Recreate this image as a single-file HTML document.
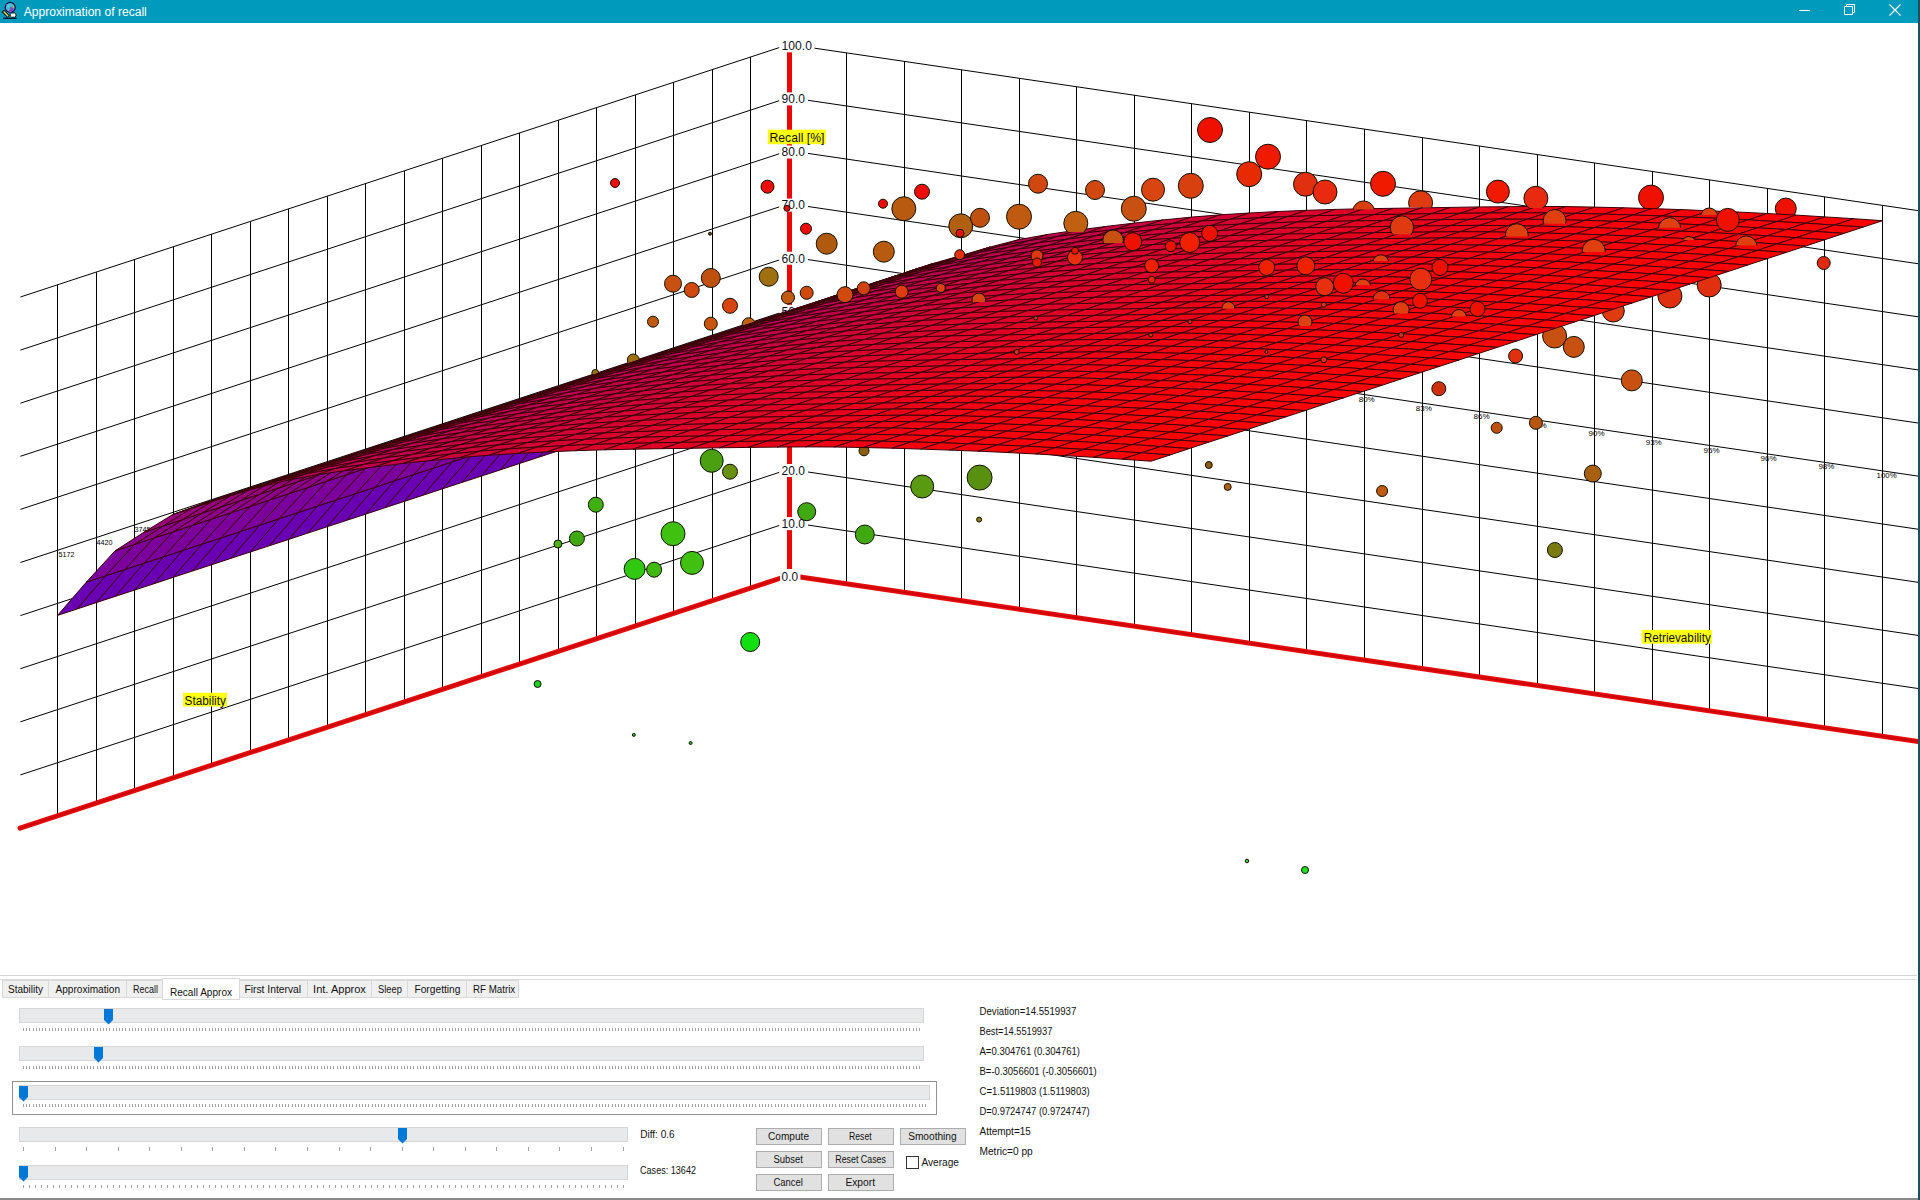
<!DOCTYPE html><html><head><meta charset="utf-8"><title>Approximation of recall</title><style>html,body{margin:0;padding:0;width:1920px;height:1200px;overflow:hidden;background:#fff;font-family:"Liberation Sans",sans-serif}</style></head><body><svg width="1920" height="1200" viewBox="0 0 1920 1200" font-family="Liberation Sans, sans-serif" style="position:absolute;left:0;top:0"><rect width="1920" height="1200" fill="#fff"/><g stroke="#000" stroke-width="1"><line x1="20.4" y1="774.9" x2="779.2" y2="525.5"/><line x1="20.4" y1="721.8" x2="779.2" y2="472.4"/><line x1="20.4" y1="668.7" x2="779.2" y2="419.3"/><line x1="20.4" y1="615.6" x2="779.2" y2="366.2"/><line x1="20.4" y1="562.5" x2="779.2" y2="313.1"/><line x1="20.4" y1="509.4" x2="779.2" y2="260.0"/><line x1="20.4" y1="456.3" x2="779.2" y2="206.9"/><line x1="20.4" y1="403.2" x2="779.2" y2="153.8"/><line x1="20.4" y1="350.1" x2="779.2" y2="100.7"/><line x1="20.4" y1="297.0" x2="779.2" y2="47.6"/><line x1="808.0" y1="525.1" x2="1920.0" y2="688.8"/><line x1="808.0" y1="472.0" x2="1920.0" y2="635.7"/><line x1="808.0" y1="418.9" x2="1920.0" y2="582.6"/><line x1="808.0" y1="365.8" x2="1920.0" y2="529.5"/><line x1="808.0" y1="312.7" x2="1920.0" y2="476.4"/><line x1="808.0" y1="259.6" x2="1920.0" y2="423.3"/><line x1="808.0" y1="206.5" x2="1920.0" y2="370.2"/><line x1="808.0" y1="153.4" x2="1920.0" y2="317.1"/><line x1="808.0" y1="100.3" x2="1920.0" y2="264.0"/><line x1="814.0" y1="48.1" x2="1920.0" y2="210.9"/><line x1="750.5" y1="57.1" x2="750.5" y2="588.1"/><line x1="712.5" y1="69.7" x2="712.5" y2="600.7"/><line x1="673.5" y1="82.4" x2="673.5" y2="613.4"/><line x1="635.5" y1="95.0" x2="635.5" y2="626.0"/><line x1="596.5" y1="107.7" x2="596.5" y2="638.7"/><line x1="558.5" y1="120.3" x2="558.5" y2="651.3"/><line x1="519.5" y1="133.0" x2="519.5" y2="664.0"/><line x1="481.5" y1="145.6" x2="481.5" y2="676.6"/><line x1="442.5" y1="158.3" x2="442.5" y2="689.3"/><line x1="404.5" y1="170.9" x2="404.5" y2="701.9"/><line x1="365.5" y1="183.6" x2="365.5" y2="714.6"/><line x1="327.5" y1="196.3" x2="327.5" y2="727.3"/><line x1="288.5" y1="208.9" x2="288.5" y2="739.9"/><line x1="250.5" y1="221.6" x2="250.5" y2="752.6"/><line x1="211.5" y1="234.2" x2="211.5" y2="765.2"/><line x1="173.5" y1="246.9" x2="173.5" y2="777.9"/><line x1="134.5" y1="259.5" x2="134.5" y2="790.5"/><line x1="96.5" y1="272.2" x2="96.5" y2="803.2"/><line x1="57.5" y1="284.8" x2="57.5" y2="815.8"/><line x1="846.5" y1="52.9" x2="846.5" y2="583.9"/><line x1="904.5" y1="61.3" x2="904.5" y2="592.3"/><line x1="961.5" y1="69.8" x2="961.5" y2="600.8"/><line x1="1019.5" y1="78.3" x2="1019.5" y2="609.3"/><line x1="1076.5" y1="86.8" x2="1076.5" y2="617.8"/><line x1="1134.5" y1="95.2" x2="1134.5" y2="626.2"/><line x1="1191.5" y1="103.7" x2="1191.5" y2="634.7"/><line x1="1249.5" y1="112.2" x2="1249.5" y2="643.2"/><line x1="1306.5" y1="120.6" x2="1306.5" y2="651.6"/><line x1="1364.5" y1="129.1" x2="1364.5" y2="660.1"/><line x1="1422.5" y1="137.6" x2="1422.5" y2="668.6"/><line x1="1479.5" y1="146.1" x2="1479.5" y2="677.1"/><line x1="1537.5" y1="154.5" x2="1537.5" y2="685.5"/><line x1="1594.5" y1="163.0" x2="1594.5" y2="694.0"/><line x1="1652.5" y1="171.5" x2="1652.5" y2="702.5"/><line x1="1709.5" y1="179.9" x2="1709.5" y2="710.9"/><line x1="1767.5" y1="188.4" x2="1767.5" y2="719.4"/><line x1="1824.5" y1="196.9" x2="1824.5" y2="727.9"/><line x1="1882.5" y1="205.4" x2="1882.5" y2="736.4"/></g><g stroke="#e40a0a" stroke-width="5" stroke-linecap="round"><line x1="20" y1="828.2" x2="779.5" y2="578.5"/><line x1="800" y1="577.0" x2="1920" y2="741.9"/></g><g stroke="#a00000" stroke-width="1" opacity="0.55"><line x1="20" y1="828.2" x2="779.5" y2="578.5"/><line x1="800" y1="577.0" x2="1920" y2="741.9"/></g><line x1="789.5" y1="52" x2="789.5" y2="569" stroke="#ee0606" stroke-width="5"/><g fill="#10101a"><rect x="780" y="570.2" width="20.4" height="13" fill="#fff"/><text x="781.6" y="581" font-size="12" textLength="16.4" lengthAdjust="spacingAndGlyphs">0.0</text><rect x="780" y="517.1" width="27.4" height="13" fill="#fff"/><text x="781.6" y="527.9" font-size="12" textLength="23.4" lengthAdjust="spacingAndGlyphs">10.0</text><rect x="780" y="464.0" width="27.4" height="13" fill="#fff"/><text x="781.6" y="474.8" font-size="12" textLength="23.4" lengthAdjust="spacingAndGlyphs">20.0</text><rect x="780" y="410.9" width="27.4" height="13" fill="#fff"/><text x="781.6" y="421.7" font-size="12" textLength="23.4" lengthAdjust="spacingAndGlyphs">30.0</text><rect x="780" y="357.8" width="27.4" height="13" fill="#fff"/><text x="781.6" y="368.6" font-size="12" textLength="23.4" lengthAdjust="spacingAndGlyphs">40.0</text><rect x="780" y="304.8" width="27.4" height="13" fill="#fff"/><text x="781.6" y="315.6" font-size="12" textLength="23.4" lengthAdjust="spacingAndGlyphs">50.0</text><rect x="780" y="251.7" width="27.4" height="13" fill="#fff"/><text x="781.6" y="262.5" font-size="12" textLength="23.4" lengthAdjust="spacingAndGlyphs">60.0</text><rect x="780" y="198.6" width="27.4" height="13" fill="#fff"/><text x="781.6" y="209.4" font-size="12" textLength="23.4" lengthAdjust="spacingAndGlyphs">70.0</text><rect x="780" y="145.5" width="27.4" height="13" fill="#fff"/><text x="781.6" y="156.3" font-size="12" textLength="23.4" lengthAdjust="spacingAndGlyphs">80.0</text><rect x="780" y="92.4" width="27.4" height="13" fill="#fff"/><text x="781.6" y="103.2" font-size="12" textLength="23.4" lengthAdjust="spacingAndGlyphs">90.0</text><rect x="780" y="39.3" width="34.4" height="13" fill="#fff"/><text x="781.6" y="50.1" font-size="12" textLength="30.4" lengthAdjust="spacingAndGlyphs">100.0</text></g><g fill="#000"><text x="58.5" y="557" font-size="7.2" textLength="16" lengthAdjust="spacingAndGlyphs">5172</text><text x="96.5" y="545" font-size="7.2" textLength="16" lengthAdjust="spacingAndGlyphs">4420</text><text x="134.5" y="532" font-size="7.2" textLength="16" lengthAdjust="spacingAndGlyphs">3745</text><text x="1366.7" y="402.2" font-size="8" text-anchor="middle" textLength="16" lengthAdjust="spacingAndGlyphs">80%</text><text x="1423.8" y="410.5" font-size="8" text-anchor="middle" textLength="16" lengthAdjust="spacingAndGlyphs">83%</text><text x="1481.6" y="419.3" font-size="8" text-anchor="middle" textLength="16" lengthAdjust="spacingAndGlyphs">86%</text><text x="1538.5" y="427.7" font-size="8" text-anchor="middle" textLength="16" lengthAdjust="spacingAndGlyphs">88%</text><text x="1596.6" y="436" font-size="8" text-anchor="middle" textLength="16" lengthAdjust="spacingAndGlyphs">90%</text><text x="1653.7" y="444.5" font-size="8" text-anchor="middle" textLength="16" lengthAdjust="spacingAndGlyphs">93%</text><text x="1711.6" y="453.1" font-size="8" text-anchor="middle" textLength="16" lengthAdjust="spacingAndGlyphs">95%</text><text x="1768.5" y="460.7" font-size="8" text-anchor="middle" textLength="16" lengthAdjust="spacingAndGlyphs">96%</text><text x="1826.4" y="468.7" font-size="8" text-anchor="middle" textLength="16" lengthAdjust="spacingAndGlyphs">98%</text><text x="1886.6" y="478" font-size="8" text-anchor="middle" textLength="20" lengthAdjust="spacingAndGlyphs">100%</text></g><defs><clipPath id="c0"><rect x="1061.8" y="209.3" width="28" height="22.6"/></clipPath><clipPath id="c1"><rect x="1100.8" y="228" width="24.6" height="15.1"/></clipPath><clipPath id="c2"><rect x="969.9" y="291.1" width="17.8" height="10.8"/></clipPath><clipPath id="c3"><rect x="1406.6" y="188.8" width="28" height="18.4"/></clipPath><clipPath id="c4"><rect x="1350.6" y="198.9" width="26" height="10.6"/></clipPath><clipPath id="c5"><rect x="1388.2" y="213.8" width="27.4" height="20.7"/></clipPath><clipPath id="c6"><rect x="1352.8" y="277" width="20" height="8.3"/></clipPath><clipPath id="c7"><rect x="1370.8" y="252.8" width="20" height="8.3"/></clipPath><clipPath id="c8"><rect x="1371.1" y="288.8" width="21" height="10.6"/></clipPath><clipPath id="c9"><rect x="1521.9" y="184.3" width="28" height="23.7"/></clipPath><clipPath id="c10"><rect x="1698.7" y="206" width="21" height="8.9"/></clipPath><clipPath id="c11"><rect x="1541.1" y="207.5" width="27" height="16.2"/></clipPath><clipPath id="c12"><rect x="1503.3" y="221.7" width="27" height="14.9"/></clipPath><clipPath id="c13"><rect x="1656.4" y="215.6" width="26.4" height="12.1"/></clipPath><clipPath id="c14"><rect x="1580.2" y="237.3" width="27" height="14.8"/></clipPath><clipPath id="c15"><rect x="1733.5" y="233.9" width="25.6" height="11.5"/></clipPath><clipPath id="c16"><rect x="1679.3" y="234.5" width="19" height="5.5"/></clipPath><clipPath id="c17"><rect x="1219.9" y="299.7" width="17" height="9.1"/></clipPath><clipPath id="c18"><rect x="1296" y="313" width="18" height="13"/></clipPath><clipPath id="c19"><rect x="1391.1" y="299.7" width="20" height="13.7"/></clipPath><clipPath id="c20"><rect x="1449.4" y="307.5" width="19" height="9.1"/></clipPath></defs><g stroke="#101000" stroke-width="1"><circle cx="615" cy="183" r="4.5" fill="#f00a0a" stroke="#101000"/><circle cx="767.5" cy="186.7" r="6.5" fill="#f00a0a" stroke="#101000"/><circle cx="710" cy="233.7" r="1.5" fill="#7a3a10" stroke="#101000"/><circle cx="806" cy="228.7" r="5.5" fill="#f00a0a" stroke="#101000"/><circle cx="826.7" cy="243.7" r="10.5" fill="#b05a10" stroke="#101000"/><circle cx="673" cy="283.7" r="8.5" fill="#c85010" stroke="#101000"/><circle cx="691.7" cy="290" r="7.5" fill="#d04a10" stroke="#101000"/><circle cx="710.8" cy="278" r="9.5" fill="#c05010" stroke="#101000"/><circle cx="768.7" cy="276.7" r="9.5" fill="#a07010" stroke="#101000"/><circle cx="788" cy="297.5" r="6.5" fill="#c05a10" stroke="#101000"/><circle cx="806.7" cy="292.8" r="6.5" fill="#d04a10" stroke="#101000"/><circle cx="730" cy="305.8" r="7.5" fill="#d84510" stroke="#101000"/><circle cx="653" cy="321.7" r="5.5" fill="#c05a10" stroke="#101000"/><circle cx="710.8" cy="323.7" r="6.5" fill="#c85510" stroke="#101000"/><circle cx="883" cy="203.7" r="4.5" fill="#f00a0a" stroke="#101000"/><circle cx="922" cy="191.7" r="7.5" fill="#f00a0a" stroke="#101000"/><circle cx="903.8" cy="208.7" r="12" fill="#b85a10" stroke="#101000"/><circle cx="883.8" cy="251.7" r="10.5" fill="#b85a10" stroke="#101000"/><circle cx="960.8" cy="225.8" r="12" fill="#b06010" stroke="#101000"/><circle cx="980" cy="217.8" r="9.5" fill="#c05010" stroke="#101000"/><circle cx="1019" cy="216.7" r="12.5" fill="#c05a10" stroke="#101000"/><circle cx="1038" cy="183.7" r="9.5" fill="#d04810" stroke="#101000"/><circle cx="1095" cy="190" r="9.5" fill="#d04810" stroke="#101000"/><circle cx="1153" cy="189.7" r="11.5" fill="#d84510" stroke="#101000"/><circle cx="1133.8" cy="208.7" r="12.5" fill="#c85010" stroke="#101000"/><circle cx="960" cy="233.3" r="4" fill="#f01000" stroke="#101000"/><circle cx="1210" cy="130" r="12.5" fill="#f01000" stroke="#101000"/><circle cx="1268" cy="156.7" r="12.5" fill="#f01a00" stroke="#101000"/><circle cx="1249.2" cy="174.2" r="12.5" fill="#e82a00" stroke="#101000"/><circle cx="1190.8" cy="185.8" r="12.5" fill="#d84010" stroke="#101000"/><circle cx="1305.5" cy="184.2" r="12" fill="#e03010" stroke="#101000"/><circle cx="1325" cy="192" r="12" fill="#e82a10" stroke="#101000"/><circle cx="1383" cy="183.8" r="12.5" fill="#f01a00" stroke="#101000"/><circle cx="1497.9" cy="191.6" r="11.5" fill="#f01a00" stroke="#101000"/><circle cx="1651" cy="197.6" r="12.5" fill="#f01000" stroke="#101000"/><circle cx="1785.8" cy="208.6" r="10.5" fill="#f01000" stroke="#101000"/><circle cx="1823.7" cy="263" r="6.5" fill="#e02a10" stroke="#101000"/><circle cx="1709.2" cy="285" r="12" fill="#e03010" stroke="#101000"/><circle cx="1669.9" cy="296" r="12" fill="#e03010" stroke="#101000"/><circle cx="1613.3" cy="311" r="11" fill="#e03a10" stroke="#101000"/><circle cx="1554.6" cy="336" r="12" fill="#c85010" stroke="#101000"/><circle cx="1573.8" cy="346.9" r="10.5" fill="#c85010" stroke="#101000"/><circle cx="1515.6" cy="356" r="7" fill="#e03010" stroke="#101000"/><circle cx="1631.8" cy="380.4" r="10.5" fill="#c85010" stroke="#101000"/><circle cx="1496.7" cy="427.8" r="5.5" fill="#c05010" stroke="#101000"/><circle cx="1535.9" cy="422.8" r="6.5" fill="#b85510" stroke="#101000"/><circle cx="1438.8" cy="388.7" r="7" fill="#d03010" stroke="#101000"/><circle cx="1208.8" cy="465" r="3.5" fill="#8a5a10" stroke="#101000"/><circle cx="864" cy="450.8" r="5" fill="#8a6010" stroke="#101000"/><circle cx="633.3" cy="360" r="6" fill="#a07010" stroke="#101000"/><circle cx="595.3" cy="373" r="3.5" fill="#a07010" stroke="#101000"/><circle cx="711.7" cy="460.8" r="11.5" fill="#4aa010" stroke="#101000"/><circle cx="730" cy="471.7" r="7.5" fill="#6a9010" stroke="#101000"/><circle cx="595.8" cy="504.7" r="7.5" fill="#40b010" stroke="#101000"/><circle cx="806.7" cy="511.7" r="9" fill="#40a810" stroke="#101000"/><circle cx="557.9" cy="544" r="4" fill="#50b010" stroke="#101000"/><circle cx="576.9" cy="538.5" r="7.5" fill="#40a810" stroke="#101000"/><circle cx="673" cy="533.7" r="12" fill="#40c010" stroke="#101000"/><circle cx="634.6" cy="568.9" r="10.5" fill="#30c810" stroke="#101000"/><circle cx="654.1" cy="569.7" r="7.5" fill="#40b810" stroke="#101000"/><circle cx="692" cy="562.9" r="11.5" fill="#40c010" stroke="#101000"/><circle cx="864.8" cy="534.5" r="9.5" fill="#40a810" stroke="#101000"/><circle cx="922.2" cy="486.5" r="11.5" fill="#5a9a10" stroke="#101000"/><circle cx="979.6" cy="477.6" r="12.5" fill="#5a9010" stroke="#101000"/><circle cx="979.1" cy="519.6" r="2.5" fill="#8a7a10" stroke="#101000"/><circle cx="750.2" cy="642" r="9.5" fill="#10e010" stroke="#101000"/><circle cx="537.6" cy="684" r="3.5" fill="#20d020" stroke="#101000"/><circle cx="633.8" cy="734.9" r="1.5" fill="#30c030" stroke="#101000"/><circle cx="690.6" cy="743" r="1.5" fill="#30c030" stroke="#101000"/><circle cx="1227.7" cy="486.9" r="3.5" fill="#b06010" stroke="#101000"/><circle cx="1382.1" cy="491" r="5.5" fill="#c05a10" stroke="#101000"/><circle cx="1592.8" cy="473.6" r="8.5" fill="#a86010" stroke="#101000"/><circle cx="1554.9" cy="550" r="7.5" fill="#7a7a10" stroke="#101000"/><circle cx="1247" cy="861" r="1.8" fill="#30d030" stroke="#101000"/><circle cx="1305" cy="870" r="3.5" fill="#20e020" stroke="#101000"/><circle cx="787" cy="208.3" r="3" fill="#f00a0a" stroke="#101000"/></g><g stroke="#3a0008" stroke-width="1" stroke-linejoin="round"><polygon points="789,374.9 769.8,381.3 798.5,348.1 817.8,341.7" fill="#6900b4"/><polygon points="817.8,341.7 798.5,348.1 827.3,316.7 846.5,310.4" fill="#7c009d"/><polygon points="769.8,381.3 750.5,387.6 779.3,354.4 798.5,348.1" fill="#6900b4"/><polygon points="846.5,310.4 827.3,316.7 856.1,298.2 875.3,291.9" fill="#8b008c"/><polygon points="798.5,348.1 779.3,354.4 808,323.1 827.3,316.7" fill="#7c009d"/><polygon points="750.5,387.6 731.2,393.9 760,360.7 779.3,354.4" fill="#6900b4"/><polygon points="875.3,291.9 856.1,298.2 884.9,280.4 904.1,274.1" fill="#96007e"/><polygon points="827.3,316.7 808,323.1 836.8,304.5 856.1,298.2" fill="#8b008c"/><polygon points="779.3,354.4 760,360.7 788.8,329.4 808,323.1" fill="#7c009d"/><polygon points="904.1,274.1 884.9,280.4 913.6,269.8 932.9,263.5" fill="#9f0073"/><polygon points="731.2,393.9 712,400.3 740.8,367 760,360.7" fill="#6900b4"/><polygon points="856.1,298.2 836.8,304.5 865.6,286.8 884.9,280.4" fill="#96007e"/><polygon points="808,323.1 788.8,329.4 817.6,310.8 836.8,304.5" fill="#8b008c"/><polygon points="932.9,263.5 913.6,269.8 942.4,261.7 961.6,255.4" fill="#a6006b"/><polygon points="760,360.7 740.8,367 769.5,335.7 788.8,329.4" fill="#7c009d"/><polygon points="884.9,280.4 865.6,286.8 894.4,276.2 913.6,269.8" fill="#9f0073"/><polygon points="712,400.3 692.8,406.6 721.5,373.4 740.8,367" fill="#6900b4"/><polygon points="836.8,304.5 817.6,310.8 846.4,293.1 865.6,286.8" fill="#96007e"/><polygon points="961.6,255.4 942.4,261.7 971.2,253.2 990.4,246.9" fill="#ad0063"/><polygon points="788.8,329.4 769.5,335.7 798.3,317.2 817.6,310.8" fill="#8b008c"/><polygon points="913.6,269.8 894.4,276.2 923.1,268.1 942.4,261.7" fill="#a6006b"/><polygon points="740.8,367 721.5,373.4 750.3,342 769.5,335.7" fill="#7c009d"/><polygon points="865.6,286.8 846.4,293.1 875.1,282.5 894.4,276.2" fill="#9f0073"/><polygon points="990.4,246.9 971.2,253.2 1000,245.9 1019.2,239.6" fill="#b3005c"/><polygon points="692.8,406.6 673.5,412.9 702.3,379.7 721.5,373.4" fill="#6900b4"/><polygon points="817.6,310.8 798.3,317.2 827.1,299.4 846.4,293.1" fill="#96007e"/><polygon points="942.4,261.7 923.1,268.1 951.9,259.5 971.2,253.2" fill="#ad0063"/><polygon points="769.5,335.7 750.3,342 779.1,323.5 798.3,317.2" fill="#8b008c"/><polygon points="894.4,276.2 875.1,282.5 903.9,274.4 923.1,268.1" fill="#a6006b"/><polygon points="1019.2,239.6 1000,245.9 1028.7,240.7 1048,234.4" fill="#b80055"/><polygon points="721.5,373.4 702.3,379.7 731,348.4 750.3,342" fill="#7c009d"/><polygon points="846.4,293.1 827.1,299.4 855.9,288.8 875.1,282.5" fill="#9f0073"/><polygon points="971.2,253.2 951.9,259.5 980.7,252.3 1000,245.9" fill="#b3005c"/><polygon points="673.5,412.9 654.2,419.2 683,386 702.3,379.7" fill="#6900b4"/><polygon points="798.3,317.2 779.1,323.5 807.9,305.7 827.1,299.4" fill="#96007e"/><polygon points="923.1,268.1 903.9,274.4 932.7,265.9 951.9,259.5" fill="#ad0063"/><polygon points="1048,234.4 1028.7,240.7 1057.5,236.5 1076.8,230.2" fill="#bd0050"/><polygon points="750.3,342 731,348.4 759.8,329.8 779.1,323.5" fill="#8b008c"/><polygon points="875.1,282.5 855.9,288.8 884.6,280.7 903.9,274.4" fill="#a6006b"/><polygon points="1000,245.9 980.7,252.3 1009.5,247 1028.7,240.7" fill="#b80055"/><polygon points="702.3,379.7 683,386 711.8,354.7 731,348.4" fill="#7c009d"/><polygon points="827.1,299.4 807.9,305.7 836.6,295.1 855.9,288.8" fill="#9f0073"/><polygon points="951.9,259.5 932.7,265.9 961.5,258.6 980.7,252.3" fill="#b3005c"/><polygon points="1076.8,230.2 1057.5,236.5 1086.3,232.9 1105.5,226.5" fill="#c1004b"/><polygon points="654.2,419.2 635,425.6 663.8,392.4 683,386" fill="#6900b4"/><polygon points="779.1,323.5 759.8,329.8 788.6,312.1 807.9,305.7" fill="#96007e"/><polygon points="903.9,274.4 884.6,280.7 913.4,272.2 932.7,265.9" fill="#ad0063"/><polygon points="1028.7,240.7 1009.5,247 1038.2,242.8 1057.5,236.5" fill="#bd0050"/><polygon points="731,348.4 711.8,354.7 740.6,336.2 759.8,329.8" fill="#8b008c"/><polygon points="855.9,288.8 836.6,295.1 865.4,287 884.6,280.7" fill="#a6006b"/><polygon points="980.7,252.3 961.5,258.6 990.2,253.4 1009.5,247" fill="#b80055"/><polygon points="1105.5,226.5 1086.3,232.9 1115,229.4 1134.3,223.1" fill="#c50046"/><polygon points="683,386 663.8,392.4 692.5,361 711.8,354.7" fill="#7c009d"/><polygon points="807.9,305.7 788.6,312.1 817.4,301.5 836.6,295.1" fill="#9f0073"/><polygon points="932.7,265.9 913.4,272.2 942.2,264.9 961.5,258.6" fill="#b3005c"/><polygon points="1057.5,236.5 1038.2,242.8 1067,239.2 1086.3,232.9" fill="#c1004b"/><polygon points="635,425.6 615.8,431.9 644.5,398.7 663.8,392.4" fill="#6900b4"/><polygon points="759.8,329.8 740.6,336.2 769.4,318.4 788.6,312.1" fill="#96007e"/><polygon points="884.6,280.7 865.4,287 894.2,278.5 913.4,272.2" fill="#ad0063"/><polygon points="1009.5,247 990.2,253.4 1019,249.1 1038.2,242.8" fill="#bd0050"/><polygon points="1134.3,223.1 1115,229.4 1143.8,226.2 1163.1,219.9" fill="#c90041"/><polygon points="711.8,354.7 692.5,361 721.3,342.5 740.6,336.2" fill="#8b008c"/><polygon points="836.6,295.1 817.4,301.5 846.1,293.4 865.4,287" fill="#a6006b"/><polygon points="961.5,258.6 942.2,264.9 971,259.7 990.2,253.4" fill="#b80055"/><polygon points="1086.3,232.9 1067,239.2 1095.8,235.7 1115,229.4" fill="#c50046"/><polygon points="663.8,392.4 644.5,398.7 673.3,367.4 692.5,361" fill="#7c009d"/><polygon points="788.6,312.1 769.4,318.4 798.1,307.8 817.4,301.5" fill="#9f0073"/><polygon points="913.4,272.2 894.2,278.5 923,271.3 942.2,264.9" fill="#b3005c"/><polygon points="1038.2,242.8 1019,249.1 1047.8,245.5 1067,239.2" fill="#c1004b"/><polygon points="1163.1,219.9 1143.8,226.2 1172.6,223.5 1191.8,217.1" fill="#cc003d"/><polygon points="615.8,431.9 596.5,438.2 625.3,405 644.5,398.7" fill="#6900b4"/><polygon points="740.6,336.2 721.3,342.5 750.1,324.7 769.4,318.4" fill="#96007e"/><polygon points="865.4,287 846.1,293.4 874.9,284.8 894.2,278.5" fill="#ad0063"/><polygon points="990.2,253.4 971,259.7 999.8,255.5 1019,249.1" fill="#bd0050"/><polygon points="1115,229.4 1095.8,235.7 1124.6,232.6 1143.8,226.2" fill="#c90041"/><polygon points="692.5,361 673.3,367.4 702.1,348.8 721.3,342.5" fill="#8b008c"/><polygon points="817.4,301.5 798.1,307.8 826.9,299.7 846.1,293.4" fill="#a6006b"/><polygon points="942.2,264.9 923,271.3 951.7,266 971,259.7" fill="#b80055"/><polygon points="1067,239.2 1047.8,245.5 1076.5,242.1 1095.8,235.7" fill="#c50046"/><polygon points="1191.8,217.1 1172.6,223.5 1201.4,221.1 1220.6,214.8" fill="#d00039"/><polygon points="644.5,398.7 625.3,405 654,373.7 673.3,367.4" fill="#7c009d"/><polygon points="769.4,318.4 750.1,324.7 778.9,314.1 798.1,307.8" fill="#9f0073"/><polygon points="894.2,278.5 874.9,284.8 903.7,277.6 923,271.3" fill="#b3005c"/><polygon points="1019,249.1 999.8,255.5 1028.5,251.8 1047.8,245.5" fill="#c1004b"/><polygon points="1143.8,226.2 1124.6,232.6 1153.3,229.8 1172.6,223.5" fill="#cc003d"/><polygon points="596.5,438.2 577.2,444.5 606,411.3 625.3,405" fill="#6900b4"/><polygon points="721.3,342.5 702.1,348.8 730.9,331.1 750.1,324.7" fill="#96007e"/><polygon points="846.1,293.4 826.9,299.7 855.7,291.2 874.9,284.8" fill="#ad0063"/><polygon points="971,259.7 951.7,266 980.5,261.8 999.8,255.5" fill="#bd0050"/><polygon points="1095.8,235.7 1076.5,242.1 1105.3,238.9 1124.6,232.6" fill="#c90041"/><polygon points="1220.6,214.8 1201.4,221.1 1230.2,219.3 1249.4,213" fill="#d30035"/><polygon points="673.3,367.4 654,373.7 682.8,355.1 702.1,348.8" fill="#8b008c"/><polygon points="798.1,307.8 778.9,314.1 807.6,306 826.9,299.7" fill="#a6006b"/><polygon points="923,271.3 903.7,277.6 932.5,272.3 951.7,266" fill="#b80055"/><polygon points="1047.8,245.5 1028.5,251.8 1057.3,248.4 1076.5,242.1" fill="#c50046"/><polygon points="1172.6,223.5 1153.3,229.8 1182.1,227.5 1201.4,221.1" fill="#d00039"/><polygon points="625.3,405 606,411.3 634.8,380 654,373.7" fill="#7c009d"/><polygon points="750.1,324.7 730.9,331.1 759.6,320.4 778.9,314.1" fill="#9f0073"/><polygon points="874.9,284.8 855.7,291.2 884.5,283.9 903.7,277.6" fill="#b3005c"/><polygon points="999.8,255.5 980.5,261.8 1009.3,258.2 1028.5,251.8" fill="#c1004b"/><polygon points="1124.6,232.6 1105.3,238.9 1134.1,236.1 1153.3,229.8" fill="#cc003d"/><polygon points="1249.4,213 1230.2,219.3 1258.9,217.8 1278.2,211.5" fill="#d60031"/><polygon points="577.2,444.5 558,450.9 586.8,417.7 606,411.3" fill="#6900b4"/><polygon points="702.1,348.8 682.8,355.1 711.6,337.4 730.9,331.1" fill="#96007e"/><polygon points="826.9,299.7 807.6,306 836.4,297.5 855.7,291.2" fill="#ad0063"/><polygon points="951.7,266 932.5,272.3 961.2,268.1 980.5,261.8" fill="#bd0050"/><polygon points="1076.5,242.1 1057.3,248.4 1086.1,245.2 1105.3,238.9" fill="#c90041"/><polygon points="1201.4,221.1 1182.1,227.5 1210.9,225.6 1230.2,219.3" fill="#d30035"/><polygon points="654,373.7 634.8,380 663.6,361.5 682.8,355.1" fill="#8b008c"/><polygon points="778.9,314.1 759.6,320.4 788.4,312.3 807.6,306" fill="#a6006b"/><polygon points="903.7,277.6 884.5,283.9 913.2,278.7 932.5,272.3" fill="#b80055"/><polygon points="1028.5,251.8 1009.3,258.2 1038,254.7 1057.3,248.4" fill="#c50046"/><polygon points="1153.3,229.8 1134.1,236.1 1162.9,233.8 1182.1,227.5" fill="#d00039"/><polygon points="1278.2,211.5 1258.9,217.8 1287.7,216.6 1306.9,210.3" fill="#d9002e"/><polygon points="606,411.3 586.8,417.7 615.5,386.3 634.8,380" fill="#7c009d"/><polygon points="730.9,331.1 711.6,337.4 740.4,326.8 759.6,320.4" fill="#9f0073"/><polygon points="855.7,291.2 836.4,297.5 865.2,290.2 884.5,283.9" fill="#b3005c"/><polygon points="980.5,261.8 961.2,268.1 990,264.5 1009.3,258.2" fill="#c1004b"/><polygon points="1105.3,238.9 1086.1,245.2 1114.8,242.4 1134.1,236.1" fill="#cc003d"/><polygon points="1230.2,219.3 1210.9,225.6 1239.7,224.1 1258.9,217.8" fill="#d60031"/><polygon points="558,450.9 538.8,457.2 567.5,424 586.8,417.7" fill="#6900b4"/><polygon points="682.8,355.1 663.6,361.5 692.4,343.7 711.6,337.4" fill="#96007e"/><polygon points="807.6,306 788.4,312.3 817.2,303.8 836.4,297.5" fill="#ad0063"/><polygon points="932.5,272.3 913.2,278.7 942,274.5 961.2,268.1" fill="#bd0050"/><polygon points="1057.3,248.4 1038,254.7 1066.8,251.6 1086.1,245.2" fill="#c90041"/><polygon points="1182.1,227.5 1162.9,233.8 1191.7,231.9 1210.9,225.6" fill="#d30035"/><polygon points="1306.9,210.3 1287.7,216.6 1316.5,215.7 1335.7,209.4" fill="#db002b"/><polygon points="634.8,380 615.5,386.3 644.3,367.8 663.6,361.5" fill="#8b008c"/><circle cx="748.7" cy="324.2" r="6.5" fill="#c06010" stroke="#101000"/><polygon points="759.6,320.4 740.4,326.8 769.1,318.7 788.4,312.3" fill="#a6006b"/><polygon points="884.5,283.9 865.2,290.2 894,285 913.2,278.7" fill="#b80055"/><polygon points="1009.3,258.2 990,264.5 1018.8,261.1 1038,254.7" fill="#c50046"/><polygon points="1134.1,236.1 1114.8,242.4 1143.6,240.1 1162.9,233.8" fill="#d00039"/><polygon points="1258.9,217.8 1239.7,224.1 1268.4,223 1287.7,216.6" fill="#d9002e"/><polygon points="586.8,417.7 567.5,424 596.3,392.7 615.5,386.3" fill="#7c009d"/><polygon points="711.6,337.4 692.4,343.7 721.1,333.1 740.4,326.8" fill="#9f0073"/><polygon points="836.4,297.5 817.2,303.8 846,296.6 865.2,290.2" fill="#b3005c"/><polygon points="961.2,268.1 942,274.5 970.8,270.8 990,264.5" fill="#c1004b"/><polygon points="1086.1,245.2 1066.8,251.6 1095.6,248.8 1114.8,242.4" fill="#cc003d"/><polygon points="1210.9,225.6 1191.7,231.9 1220.4,230.5 1239.7,224.1" fill="#d60031"/><polygon points="1335.7,209.4 1316.5,215.7 1345.2,215.1 1364.5,208.7" fill="#de0028"/><polygon points="538.8,457.2 519.5,463.5 548.3,430.3 567.5,424" fill="#6900b4"/><polygon points="663.6,361.5 644.3,367.8 673.1,350 692.4,343.7" fill="#96007e"/><polygon points="788.4,312.3 769.1,318.7 797.9,310.2 817.2,303.8" fill="#ad0063"/><polygon points="913.2,278.7 894,285 922.8,280.8 942,274.5" fill="#bd0050"/><polygon points="1038,254.7 1018.8,261.1 1047.6,257.9 1066.8,251.6" fill="#c90041"/><polygon points="1162.9,233.8 1143.6,240.1 1172.4,238.3 1191.7,231.9" fill="#d30035"/><polygon points="1287.7,216.6 1268.4,223 1297.2,222 1316.5,215.7" fill="#db002b"/><polygon points="615.5,386.3 596.3,392.7 625.1,374.1 644.3,367.8" fill="#8b008c"/><polygon points="740.4,326.8 721.1,333.1 749.9,325 769.1,318.7" fill="#a6006b"/><polygon points="865.2,290.2 846,296.6 874.7,291.3 894,285" fill="#b80055"/><polygon points="990,264.5 970.8,270.8 999.5,267.4 1018.8,261.1" fill="#c50046"/><polygon points="1114.8,242.4 1095.6,248.8 1124.4,246.4 1143.6,240.1" fill="#d00039"/><polygon points="1239.7,224.1 1220.4,230.5 1249.2,229.3 1268.4,223" fill="#d9002e"/><polygon points="1364.5,208.7 1345.2,215.1 1374,214.6 1393.3,208.3" fill="#e00025"/><polygon points="567.5,424 548.3,430.3 577,399 596.3,392.7" fill="#7c009d"/><polygon points="692.4,343.7 673.1,350 701.9,339.4 721.1,333.1" fill="#9f0073"/><polygon points="817.2,303.8 797.9,310.2 826.7,302.9 846,296.6" fill="#b3005c"/><polygon points="942,274.5 922.8,280.8 951.5,277.2 970.8,270.8" fill="#c1004b"/><polygon points="1066.8,251.6 1047.6,257.9 1076.3,255.1 1095.6,248.8" fill="#cc003d"/><polygon points="1191.7,231.9 1172.4,238.3 1201.2,236.8 1220.4,230.5" fill="#d60031"/><polygon points="1316.5,215.7 1297.2,222 1326,221.4 1345.2,215.1" fill="#de0028"/><polygon points="519.5,463.5 500.2,469.9 529,436.6 548.3,430.3" fill="#6900b4"/><polygon points="644.3,367.8 625.1,374.1 653.9,356.4 673.1,350" fill="#96007e"/><polygon points="769.1,318.7 749.9,325 778.7,316.5 797.9,310.2" fill="#ad0063"/><polygon points="894,285 874.7,291.3 903.5,287.1 922.8,280.8" fill="#bd0050"/><polygon points="1018.8,261.1 999.5,267.4 1028.3,264.2 1047.6,257.9" fill="#c90041"/><polygon points="1143.6,240.1 1124.4,246.4 1153.2,244.6 1172.4,238.3" fill="#d30035"/><polygon points="1268.4,223 1249.2,229.3 1278,228.3 1297.2,222" fill="#db002b"/><polygon points="1393.3,208.3 1374,214.6 1402.8,214.2 1422,207.8" fill="#e30022"/><polygon points="596.3,392.7 577,399 605.8,380.4 625.1,374.1" fill="#8b008c"/><polygon points="721.1,333.1 701.9,339.4 730.6,331.3 749.9,325" fill="#a6006b"/><polygon points="846,296.6 826.7,302.9 855.5,297.6 874.7,291.3" fill="#b80055"/><polygon points="970.8,270.8 951.5,277.2 980.3,273.7 999.5,267.4" fill="#c50046"/><polygon points="1095.6,248.8 1076.3,255.1 1105.1,252.8 1124.4,246.4" fill="#d00039"/><polygon points="1220.4,230.5 1201.2,236.8 1229.9,235.6 1249.2,229.3" fill="#d9002e"/><polygon points="1345.2,215.1 1326,221.4 1354.8,220.9 1374,214.6" fill="#e00025"/><polygon points="548.3,430.3 529,436.6 557.8,405.3 577,399" fill="#7c009d"/><polygon points="673.1,350 653.9,356.4 682.6,345.8 701.9,339.4" fill="#9f0073"/><polygon points="797.9,310.2 778.7,316.5 807.5,309.2 826.7,302.9" fill="#b3005c"/><polygon points="922.8,280.8 903.5,287.1 932.3,283.5 951.5,277.2" fill="#c1004b"/><polygon points="1047.6,257.9 1028.3,264.2 1057.1,261.4 1076.3,255.1" fill="#cc003d"/><polygon points="1172.4,238.3 1153.2,244.6 1181.9,243.1 1201.2,236.8" fill="#d60031"/><polygon points="1297.2,222 1278,228.3 1306.8,227.7 1326,221.4" fill="#de0028"/><polygon points="1422,207.8 1402.8,214.2 1431.6,213.7 1450.8,207.4" fill="#e5001f"/><polygon points="500.2,469.9 481,476.2 509.8,443 529,436.6" fill="#6900b4"/><polygon points="625.1,374.1 605.8,380.4 634.6,362.7 653.9,356.4" fill="#96007e"/><polygon points="749.9,325 730.6,331.3 759.4,322.8 778.7,316.5" fill="#ad0063"/><polygon points="874.7,291.3 855.5,297.6 884.2,293.4 903.5,287.1" fill="#bd0050"/><polygon points="999.5,267.4 980.3,273.7 1009.1,270.5 1028.3,264.2" fill="#c90041"/><polygon points="1124.4,246.4 1105.1,252.8 1133.9,250.9 1153.2,244.6" fill="#d30035"/><polygon points="1249.2,229.3 1229.9,235.6 1258.7,234.7 1278,228.3" fill="#db002b"/><polygon points="1374,214.6 1354.8,220.9 1383.5,220.5 1402.8,214.2" fill="#e30022"/><polygon points="577,399 557.8,405.3 586.6,386.8 605.8,380.4" fill="#8b008c"/><polygon points="701.9,339.4 682.6,345.8 711.4,337.7 730.6,331.3" fill="#a6006b"/><polygon points="826.7,302.9 807.5,309.2 836.2,304 855.5,297.6" fill="#b80055"/><polygon points="951.5,277.2 932.3,283.5 961,280 980.3,273.7" fill="#c50046"/><polygon points="1076.3,255.1 1057.1,261.4 1085.9,259.1 1105.1,252.8" fill="#d00039"/><polygon points="1201.2,236.8 1181.9,243.1 1210.7,241.9 1229.9,235.6" fill="#d9002e"/><polygon points="1326,221.4 1306.8,227.7 1335.5,227.3 1354.8,220.9" fill="#e00025"/><polygon points="1450.8,207.4 1431.6,213.7 1460.3,213.3 1479.6,206.9" fill="#e8001c"/><polygon points="529,436.6 509.8,443 538.5,411.6 557.8,405.3" fill="#7c009d"/><polygon points="653.9,356.4 634.6,362.7 663.4,352.1 682.6,345.8" fill="#9f0073"/><polygon points="778.7,316.5 759.4,322.8 788.2,315.6 807.5,309.2" fill="#b3005c"/><polygon points="903.5,287.1 884.2,293.4 913,289.8 932.3,283.5" fill="#c1004b"/><polygon points="1028.3,264.2 1009.1,270.5 1037.8,267.7 1057.1,261.4" fill="#cc003d"/><polygon points="1153.2,244.6 1133.9,250.9 1162.7,249.4 1181.9,243.1" fill="#d60031"/><polygon points="1278,228.3 1258.7,234.7 1287.5,234 1306.8,227.7" fill="#de0028"/><polygon points="1402.8,214.2 1383.5,220.5 1412.3,220 1431.6,213.7" fill="#e5001f"/><polygon points="481,476.2 461.8,482.5 490.5,449.3 509.8,443" fill="#6900b4"/><polygon points="605.8,380.4 586.6,386.8 615.4,369 634.6,362.7" fill="#96007e"/><polygon points="730.6,331.3 711.4,337.7 740.2,329.1 759.4,322.8" fill="#ad0063"/><polygon points="855.5,297.6 836.2,304 865,299.8 884.2,293.4" fill="#bd0050"/><polygon points="980.3,273.7 961,280 989.8,276.9 1009.1,270.5" fill="#c90041"/><polygon points="1105.1,252.8 1085.9,259.1 1114.7,257.2 1133.9,250.9" fill="#d30035"/><polygon points="1229.9,235.6 1210.7,241.9 1239.5,241 1258.7,234.7" fill="#db002b"/><polygon points="1354.8,220.9 1335.5,227.3 1364.3,226.8 1383.5,220.5" fill="#e30022"/><polygon points="1479.6,206.9 1460.3,213.3 1489.1,213 1508.4,206.7" fill="#ea0019"/><polygon points="557.8,405.3 538.5,411.6 567.3,393.1 586.6,386.8" fill="#8b008c"/><polygon points="682.6,345.8 663.4,352.1 692.1,344 711.4,337.7" fill="#a6006b"/><polygon points="807.5,309.2 788.2,315.6 817,310.3 836.2,304" fill="#b80055"/><polygon points="932.3,283.5 913,289.8 941.8,286.4 961,280" fill="#c50046"/><polygon points="1057.1,261.4 1037.8,267.7 1066.6,265.4 1085.9,259.1" fill="#d00039"/><polygon points="1181.9,243.1 1162.7,249.4 1191.4,248.3 1210.7,241.9" fill="#d9002e"/><polygon points="1306.8,227.7 1287.5,234 1316.3,233.6 1335.5,227.3" fill="#e00025"/><polygon points="1431.6,213.7 1412.3,220 1441.1,219.6 1460.3,213.3" fill="#e8001c"/><polygon points="509.8,443 490.5,449.3 519.3,418 538.5,411.6" fill="#7c009d"/><polygon points="634.6,362.7 615.4,369 644.1,358.4 663.4,352.1" fill="#9f0073"/><polygon points="759.4,322.8 740.2,329.1 769,321.9 788.2,315.6" fill="#b3005c"/><polygon points="884.2,293.4 865,299.8 893.8,296.1 913,289.8" fill="#c1004b"/><polygon points="1009.1,270.5 989.8,276.9 1018.6,274.1 1037.8,267.7" fill="#cc003d"/><polygon points="1133.9,250.9 1114.7,257.2 1143.4,255.8 1162.7,249.4" fill="#d60031"/><polygon points="1258.7,234.7 1239.5,241 1268.2,240.4 1287.5,234" fill="#de0028"/><polygon points="1383.5,220.5 1364.3,226.8 1393.1,226.3 1412.3,220" fill="#e5001f"/><polygon points="1508.4,206.7 1489.1,213 1517.9,212.7 1537.2,206.4" fill="#ec0017"/><polygon points="461.8,482.5 442.5,488.8 471.3,455.6 490.5,449.3" fill="#6900b4"/><polygon points="586.6,386.8 567.3,393.1 596.1,375.3 615.4,369" fill="#96007e"/><polygon points="711.4,337.7 692.1,344 720.9,335.5 740.2,329.1" fill="#ad0063"/><polygon points="836.2,304 817,310.3 845.8,306.1 865,299.8" fill="#bd0050"/><polygon points="961,280 941.8,286.4 970.6,283.2 989.8,276.9" fill="#c90041"/><polygon points="1085.9,259.1 1066.6,265.4 1095.4,263.6 1114.7,257.2" fill="#d30035"/><polygon points="1210.7,241.9 1191.4,248.3 1220.2,247.3 1239.5,241" fill="#db002b"/><polygon points="1335.5,227.3 1316.3,233.6 1345,233.1 1364.3,226.8" fill="#e30022"/><polygon points="1460.3,213.3 1441.1,219.6 1469.9,219.3 1489.1,213" fill="#ea0019"/><polygon points="538.5,411.6 519.3,418 548.1,399.4 567.3,393.1" fill="#8b008c"/><polygon points="663.4,352.1 644.1,358.4 672.9,350.3 692.1,344" fill="#a6006b"/><polygon points="788.2,315.6 769,321.9 797.7,316.6 817,310.3" fill="#b80055"/><polygon points="913,289.8 893.8,296.1 922.5,292.7 941.8,286.4" fill="#c50046"/><polygon points="1037.8,267.7 1018.6,274.1 1047.4,271.8 1066.6,265.4" fill="#d00039"/><polygon points="1162.7,249.4 1143.4,255.8 1172.2,254.6 1191.4,248.3" fill="#d9002e"/><polygon points="1287.5,234 1268.2,240.4 1297,239.9 1316.3,233.6" fill="#e00025"/><polygon points="1412.3,220 1393.1,226.3 1421.8,225.9 1441.1,219.6" fill="#e8001c"/><polygon points="1537.2,206.4 1517.9,212.7 1546.7,212.9 1565.9,206.6" fill="#ee0014"/><polygon points="490.5,449.3 471.3,455.6 500.1,424.3 519.3,418" fill="#7c009d"/><polygon points="615.4,369 596.1,375.3 624.9,364.7 644.1,358.4" fill="#9f0073"/><polygon points="740.2,329.1 720.9,335.5 749.7,328.2 769,321.9" fill="#b3005c"/><polygon points="865,299.8 845.8,306.1 874.5,302.5 893.8,296.1" fill="#c1004b"/><polygon points="989.8,276.9 970.6,283.2 999.3,280.4 1018.6,274.1" fill="#cc003d"/><polygon points="1114.7,257.2 1095.4,263.6 1124.2,262.1 1143.4,255.8" fill="#d60031"/><polygon points="1239.5,241 1220.2,247.3 1249,246.7 1268.2,240.4" fill="#de0028"/><polygon points="1364.3,226.8 1345,233.1 1373.8,232.7 1393.1,226.3" fill="#e5001f"/><polygon points="1489.1,213 1469.9,219.3 1498.7,219.1 1517.9,212.7" fill="#ec0017"/><polygon points="442.5,488.8 423.2,495.2 452,462 471.3,455.6" fill="#6900b4"/><polygon points="567.3,393.1 548.1,399.4 576.9,381.7 596.1,375.3" fill="#96007e"/><polygon points="692.1,344 672.9,350.3 701.7,341.8 720.9,335.5" fill="#ad0063"/><polygon points="817,310.3 797.7,316.6 826.5,312.4 845.8,306.1" fill="#bd0050"/><polygon points="941.8,286.4 922.5,292.7 951.3,289.5 970.6,283.2" fill="#c90041"/><polygon points="1066.6,265.4 1047.4,271.8 1076.2,269.9 1095.4,263.6" fill="#d30035"/><polygon points="1191.4,248.3 1172.2,254.6 1201,253.7 1220.2,247.3" fill="#db002b"/><polygon points="1316.3,233.6 1297,239.9 1325.8,239.5 1345,233.1" fill="#e30022"/><polygon points="1441.1,219.6 1421.8,225.9 1450.6,225.6 1469.9,219.3" fill="#ea0019"/><polygon points="1565.9,206.6 1546.7,212.9 1575.4,213.4 1594.7,207.1" fill="#f00012"/><polygon points="519.3,418 500.1,424.3 528.8,405.8 548.1,399.4" fill="#8b008c"/><polygon points="644.1,358.4 624.9,364.7 653.6,356.6 672.9,350.3" fill="#a6006b"/><polygon points="769,321.9 749.7,328.2 778.5,323 797.7,316.6" fill="#b80055"/><polygon points="893.8,296.1 874.5,302.5 903.3,299 922.5,292.7" fill="#c50046"/><polygon points="1018.6,274.1 999.3,280.4 1028.1,278.1 1047.4,271.8" fill="#d00039"/><polygon points="1143.4,255.8 1124.2,262.1 1152.9,260.9 1172.2,254.6" fill="#d9002e"/><polygon points="1268.2,240.4 1249,246.7 1277.8,246.2 1297,239.9" fill="#e00025"/><polygon points="1393.1,226.3 1373.8,232.7 1402.6,232.3 1421.8,225.9" fill="#e8001c"/><polygon points="1517.9,212.7 1498.7,219.1 1527.4,219.2 1546.7,212.9" fill="#ee0014"/><polygon points="471.3,455.6 452,462 480.8,430.6 500.1,424.3" fill="#7c009d"/><polygon points="596.1,375.3 576.9,381.7 605.6,371.1 624.9,364.7" fill="#9f0073"/><polygon points="720.9,335.5 701.7,341.8 730.5,334.5 749.7,328.2" fill="#b3005c"/><polygon points="845.8,306.1 826.5,312.4 855.3,308.8 874.5,302.5" fill="#c1004b"/><polygon points="970.6,283.2 951.3,289.5 980.1,286.7 999.3,280.4" fill="#cc003d"/><polygon points="1095.4,263.6 1076.2,269.9 1104.9,268.4 1124.2,262.1" fill="#d60031"/><polygon points="1220.2,247.3 1201,253.7 1229.8,253 1249,246.7" fill="#de0028"/><polygon points="1345,233.1 1325.8,239.5 1354.6,239 1373.8,232.7" fill="#e5001f"/><polygon points="1469.9,219.3 1450.6,225.6 1479.4,225.4 1498.7,219.1" fill="#ec0017"/><polygon points="1594.7,207.1 1575.4,213.4 1604.2,214.1 1623.5,207.8" fill="#f20010"/><polygon points="423.2,495.2 404,501.5 432.8,468.3 452,462" fill="#6900b4"/><polygon points="548.1,399.4 528.8,405.8 557.6,388 576.9,381.7" fill="#96007e"/><polygon points="672.9,350.3 653.6,356.6 682.4,348.1 701.7,341.8" fill="#ad0063"/><polygon points="797.7,316.6 778.5,323 807.2,318.7 826.5,312.4" fill="#bd0050"/><polygon points="922.5,292.7 903.3,299 932.1,295.8 951.3,289.5" fill="#c90041"/><polygon points="1047.4,271.8 1028.1,278.1 1056.9,276.2 1076.2,269.9" fill="#d30035"/><polygon points="1172.2,254.6 1152.9,260.9 1181.7,260 1201,253.7" fill="#db002b"/><polygon points="1297,239.9 1277.8,246.2 1306.5,245.8 1325.8,239.5" fill="#e30022"/><polygon points="1421.8,225.9 1402.6,232.3 1431.4,232 1450.6,225.6" fill="#ea0019"/><polygon points="1546.7,212.9 1527.4,219.2 1556.2,219.7 1575.4,213.4" fill="#f00012"/><polygon points="500.1,424.3 480.8,430.6 509.6,412.1 528.8,405.8" fill="#8b008c"/><polygon points="624.9,364.7 605.6,371.1 634.4,363 653.6,356.6" fill="#a6006b"/><polygon points="749.7,328.2 730.5,334.5 759.2,329.3 778.5,323" fill="#b80055"/><polygon points="874.5,302.5 855.3,308.8 884,305.3 903.3,299" fill="#c50046"/><polygon points="999.3,280.4 980.1,286.7 1008.9,284.4 1028.1,278.1" fill="#d00039"/><polygon points="1124.2,262.1 1104.9,268.4 1133.7,267.2 1152.9,260.9" fill="#d9002e"/><polygon points="1249,246.7 1229.8,253 1258.5,252.6 1277.8,246.2" fill="#e00025"/><polygon points="1373.8,232.7 1354.6,239 1383.3,238.6 1402.6,232.3" fill="#e8001c"/><polygon points="1498.7,219.1 1479.4,225.4 1508.2,225.6 1527.4,219.2" fill="#ee0014"/><polygon points="1623.5,207.8 1604.2,214.1 1633,215 1652.2,208.6" fill="#f4000d"/><polygon points="452,462 432.8,468.3 461.6,437 480.8,430.6" fill="#7c009d"/><polygon points="576.9,381.7 557.6,388 586.4,377.4 605.6,371.1" fill="#9f0073"/><polygon points="701.7,341.8 682.4,348.1 711.2,340.9 730.5,334.5" fill="#b3005c"/><polygon points="826.5,312.4 807.2,318.7 836,315.1 855.3,308.8" fill="#c1004b"/><polygon points="951.3,289.5 932.1,295.8 960.8,293.1 980.1,286.7" fill="#cc003d"/><polygon points="1076.2,269.9 1056.9,276.2 1085.7,274.8 1104.9,268.4" fill="#d60031"/><polygon points="1201,253.7 1181.7,260 1210.5,259.4 1229.8,253" fill="#de0028"/><polygon points="1325.8,239.5 1306.5,245.8 1335.3,245.3 1354.6,239" fill="#e5001f"/><polygon points="1450.6,225.6 1431.4,232 1460.2,231.7 1479.4,225.4" fill="#ec0017"/><polygon points="1575.4,213.4 1556.2,219.7 1585,220.4 1604.2,214.1" fill="#f20010"/><polygon points="404,501.5 384.8,507.8 413.5,474.6 432.8,468.3" fill="#6900b4"/><polygon points="528.8,405.8 509.6,412.1 538.4,394.3 557.6,388" fill="#96007e"/><polygon points="653.6,356.6 634.4,363 663.2,354.4 682.4,348.1" fill="#ad0063"/><polygon points="778.5,323 759.2,329.3 788,325.1 807.2,318.7" fill="#bd0050"/><polygon points="903.3,299 884,305.3 912.8,302.2 932.1,295.8" fill="#c90041"/><polygon points="1028.1,278.1 1008.9,284.4 1037.7,282.6 1056.9,276.2" fill="#d30035"/><polygon points="1152.9,260.9 1133.7,267.2 1162.5,266.3 1181.7,260" fill="#db002b"/><polygon points="1277.8,246.2 1258.5,252.6 1287.3,252.1 1306.5,245.8" fill="#e30022"/><polygon points="1402.6,232.3 1383.3,238.6 1412.1,238.3 1431.4,232" fill="#ea0019"/><polygon points="1527.4,219.2 1508.2,225.6 1536.9,226.1 1556.2,219.7" fill="#f00012"/><polygon points="1652.2,208.6 1633,215 1661.8,216 1681,209.6" fill="#f6000b"/><polygon points="480.8,430.6 461.6,437 490.3,418.4 509.6,412.1" fill="#8b008c"/><polygon points="605.6,371.1 586.4,377.4 615.1,369.3 634.4,363" fill="#a6006b"/><polygon points="730.5,334.5 711.2,340.9 740,335.6 759.2,329.3" fill="#b80055"/><polygon points="855.3,308.8 836,315.1 864.8,311.7 884,305.3" fill="#c50046"/><polygon points="980.1,286.7 960.8,293.1 989.6,290.7 1008.9,284.4" fill="#d00039"/><polygon points="1104.9,268.4 1085.7,274.8 1114.4,273.6 1133.7,267.2" fill="#d9002e"/><polygon points="1229.8,253 1210.5,259.4 1239.3,258.9 1258.5,252.6" fill="#e00025"/><polygon points="1354.6,239 1335.3,245.3 1364.1,244.9 1383.3,238.6" fill="#e8001c"/><polygon points="1479.4,225.4 1460.2,231.7 1488.9,231.9 1508.2,225.6" fill="#ee0014"/><polygon points="1604.2,214.1 1585,220.4 1613.8,221.3 1633,215" fill="#f4000d"/><polygon points="432.8,468.3 413.5,474.6 442.3,443.3 461.6,437" fill="#7c009d"/><polygon points="557.6,388 538.4,394.3 567.1,383.7 586.4,377.4" fill="#9f0073"/><polygon points="682.4,348.1 663.2,354.4 692,347.2 711.2,340.9" fill="#b3005c"/><polygon points="807.2,318.7 788,325.1 816.8,321.4 836,315.1" fill="#c1004b"/><polygon points="932.1,295.8 912.8,302.2 941.6,299.4 960.8,293.1" fill="#cc003d"/><polygon points="1056.9,276.2 1037.7,282.6 1066.4,281.1 1085.7,274.8" fill="#d60031"/><polygon points="1181.7,260 1162.5,266.3 1191.2,265.7 1210.5,259.4" fill="#de0028"/><polygon points="1306.5,245.8 1287.3,252.1 1316.1,251.6 1335.3,245.3" fill="#e5001f"/><polygon points="1431.4,232 1412.1,238.3 1440.9,238 1460.2,231.7" fill="#ec0017"/><polygon points="1556.2,219.7 1536.9,226.1 1565.7,226.8 1585,220.4" fill="#f20010"/><polygon points="1681,209.6 1661.8,216 1690.5,217.1 1709.8,210.8" fill="#f7000a"/><polygon points="384.8,507.8 365.5,514.2 394.3,480.9 413.5,474.6" fill="#6900b4"/><polygon points="509.6,412.1 490.3,418.4 519.1,400.7 538.4,394.3" fill="#96007e"/><polygon points="634.4,363 615.1,369.3 643.9,360.8 663.2,354.4" fill="#ad0063"/><polygon points="759.2,329.3 740,335.6 768.8,331.4 788,325.1" fill="#bd0050"/><polygon points="884,305.3 864.8,311.7 893.6,308.5 912.8,302.2" fill="#c90041"/><polygon points="1008.9,284.4 989.6,290.7 1018.4,288.9 1037.7,282.6" fill="#d30035"/><polygon points="1133.7,267.2 1114.4,273.6 1143.2,272.6 1162.5,266.3" fill="#db002b"/><polygon points="1258.5,252.6 1239.3,258.9 1268,258.4 1287.3,252.1" fill="#e30022"/><polygon points="1383.3,238.6 1364.1,244.9 1392.9,244.6 1412.1,238.3" fill="#ea0019"/><polygon points="1508.2,225.6 1488.9,231.9 1517.7,232.4 1536.9,226.1" fill="#f00012"/><polygon points="1633,215 1613.8,221.3 1642.5,222.3 1661.8,216" fill="#f6000b"/><polygon points="461.6,437 442.3,443.3 471.1,424.7 490.3,418.4" fill="#8b008c"/><polygon points="586.4,377.4 567.1,383.7 595.9,375.6 615.1,369.3" fill="#a6006b"/><polygon points="711.2,340.9 692,347.2 720.7,341.9 740,335.6" fill="#b80055"/><polygon points="836,315.1 816.8,321.4 845.5,318 864.8,311.7" fill="#c50046"/><polygon points="960.8,293.1 941.6,299.4 970.4,297.1 989.6,290.7" fill="#d00039"/><polygon points="1085.7,274.8 1066.4,281.1 1095.2,279.9 1114.4,273.6" fill="#d9002e"/><polygon points="1210.5,259.4 1191.2,265.7 1220,265.2 1239.3,258.9" fill="#e00025"/><polygon points="1335.3,245.3 1316.1,251.6 1344.8,251.2 1364.1,244.9" fill="#e8001c"/><polygon points="1460.2,231.7 1440.9,238 1469.7,238.2 1488.9,231.9" fill="#ee0014"/><polygon points="1585,220.4 1565.7,226.8 1594.5,227.6 1613.8,221.3" fill="#f4000d"/><polygon points="1709.8,210.8 1690.5,217.1 1719.3,218.4 1738.6,212.1" fill="#f90008"/><polygon points="413.5,474.6 394.3,480.9 423.1,449.6 442.3,443.3" fill="#7c009d"/><polygon points="538.4,394.3 519.1,400.7 547.9,390.1 567.1,383.7" fill="#9f0073"/><polygon points="663.2,354.4 643.9,360.8 672.7,353.5 692,347.2" fill="#b3005c"/><polygon points="788,325.1 768.8,331.4 797.5,327.8 816.8,321.4" fill="#c1004b"/><polygon points="912.8,302.2 893.6,308.5 922.3,305.7 941.6,299.4" fill="#cc003d"/><polygon points="1037.7,282.6 1018.4,288.9 1047.2,287.4 1066.4,281.1" fill="#d60031"/><polygon points="1162.5,266.3 1143.2,272.6 1172,272 1191.2,265.7" fill="#de0028"/><polygon points="1287.3,252.1 1268,258.4 1296.8,258 1316.1,251.6" fill="#e5001f"/><polygon points="1412.1,238.3 1392.9,244.6 1421.7,244.4 1440.9,238" fill="#ec0017"/><polygon points="1536.9,226.1 1517.7,232.4 1546.5,233.1 1565.7,226.8" fill="#f20010"/><polygon points="1661.8,216 1642.5,222.3 1671.3,223.5 1690.5,217.1" fill="#f7000a"/><polygon points="365.5,514.2 346.2,520.5 375,487.3 394.3,480.9" fill="#6900b4"/><polygon points="490.3,418.4 471.1,424.7 499.9,407 519.1,400.7" fill="#96007e"/><polygon points="615.1,369.3 595.9,375.6 624.7,367.1 643.9,360.8" fill="#ad0063"/><polygon points="740,335.6 720.7,341.9 749.5,337.7 768.8,331.4" fill="#bd0050"/><polygon points="864.8,311.7 845.5,318 874.3,314.8 893.6,308.5" fill="#c90041"/><polygon points="989.6,290.7 970.4,297.1 999.1,295.2 1018.4,288.9" fill="#d30035"/><polygon points="1114.4,273.6 1095.2,279.9 1124,279 1143.2,272.6" fill="#db002b"/><polygon points="1239.3,258.9 1220,265.2 1248.8,264.8 1268,258.4" fill="#e30022"/><polygon points="1364.1,244.9 1344.8,251.2 1373.6,250.9 1392.9,244.6" fill="#ea0019"/><polygon points="1488.9,231.9 1469.7,238.2 1498.4,238.7 1517.7,232.4" fill="#f00012"/><polygon points="1613.8,221.3 1594.5,227.6 1623.3,228.6 1642.5,222.3" fill="#f6000b"/><polygon points="1738.6,212.1 1719.3,218.4 1748.1,219.9 1767.3,213.5" fill="#fa0006"/><polygon points="442.3,443.3 423.1,449.6 451.8,431.1 471.1,424.7" fill="#8b008c"/><polygon points="567.1,383.7 547.9,390.1 576.6,381.9 595.9,375.6" fill="#a6006b"/><polygon points="692,347.2 672.7,353.5 701.5,348.3 720.7,341.9" fill="#b80055"/><polygon points="816.8,321.4 797.5,327.8 826.3,324.3 845.5,318" fill="#c50046"/><polygon points="941.6,299.4 922.3,305.7 951.1,303.4 970.4,297.1" fill="#d00039"/><polygon points="1066.4,281.1 1047.2,287.4 1075.9,286.2 1095.2,279.9" fill="#d9002e"/><polygon points="1191.2,265.7 1172,272 1200.8,271.5 1220,265.2" fill="#e00025"/><polygon points="1316.1,251.6 1296.8,258 1325.6,257.6 1344.8,251.2" fill="#e8001c"/><polygon points="1440.9,238 1421.7,244.4 1450.4,244.5 1469.7,238.2" fill="#ee0014"/><polygon points="1565.7,226.8 1546.5,233.1 1575.2,233.9 1594.5,227.6" fill="#f4000d"/><polygon points="1690.5,217.1 1671.3,223.5 1700.1,224.8 1719.3,218.4" fill="#f90008"/><polygon points="394.3,480.9 375,487.3 403.8,455.9 423.1,449.6" fill="#7c009d"/><polygon points="519.1,400.7 499.9,407 528.6,396.4 547.9,390.1" fill="#9f0073"/><polygon points="643.9,360.8 624.7,367.1 653.5,359.8 672.7,353.5" fill="#b3005c"/><polygon points="768.8,331.4 749.5,337.7 778.3,334.1 797.5,327.8" fill="#c1004b"/><polygon points="893.6,308.5 874.3,314.8 903.1,312 922.3,305.7" fill="#cc003d"/><polygon points="1018.4,288.9 999.1,295.2 1027.9,293.7 1047.2,287.4" fill="#d60031"/><polygon points="1143.2,272.6 1124,279 1152.8,278.3 1172,272" fill="#de0028"/><polygon points="1268,258.4 1248.8,264.8 1277.6,264.3 1296.8,258" fill="#e5001f"/><polygon points="1392.9,244.6 1373.6,250.9 1402.4,250.7 1421.7,244.4" fill="#ec0017"/><polygon points="1517.7,232.4 1498.4,238.7 1527.2,239.4 1546.5,233.1" fill="#f20010"/><polygon points="1642.5,222.3 1623.3,228.6 1652,229.8 1671.3,223.5" fill="#f7000a"/><polygon points="1767.3,213.5 1748.1,219.9 1776.9,221.5 1796.1,215.1" fill="#fb0004"/><polygon points="346.2,520.5 327,526.8 355.8,493.6 375,487.3" fill="#6900b4"/><polygon points="471.1,424.7 451.8,431.1 480.6,413.3 499.9,407" fill="#96007e"/><polygon points="595.9,375.6 576.6,381.9 605.4,373.4 624.7,367.1" fill="#ad0063"/><polygon points="720.7,341.9 701.5,348.3 730.2,344.1 749.5,337.7" fill="#bd0050"/><polygon points="845.5,318 826.3,324.3 855.1,321.2 874.3,314.8" fill="#c90041"/><polygon points="970.4,297.1 951.1,303.4 979.9,301.5 999.1,295.2" fill="#d30035"/><polygon points="1095.2,279.9 1075.9,286.2 1104.7,285.3 1124,279" fill="#db002b"/><polygon points="1220,265.2 1200.8,271.5 1229.5,271.1 1248.8,264.8" fill="#e30022"/><polygon points="1344.8,251.2 1325.6,257.6 1354.4,257.3 1373.6,250.9" fill="#ea0019"/><polygon points="1469.7,238.2 1450.4,244.5 1479.2,245.1 1498.4,238.7" fill="#f00012"/><polygon points="1594.5,227.6 1575.2,233.9 1604,234.9 1623.3,228.6" fill="#f6000b"/><polygon points="1719.3,218.4 1700.1,224.8 1728.8,226.2 1748.1,219.9" fill="#fa0006"/><polygon points="423.1,449.6 403.8,455.9 432.6,437.4 451.8,431.1" fill="#8b008c"/><polygon points="547.9,390.1 528.6,396.4 557.4,388.3 576.6,381.9" fill="#a6006b"/><polygon points="672.7,353.5 653.5,359.8 682.2,354.6 701.5,348.3" fill="#b80055"/><polygon points="797.5,327.8 778.3,334.1 807,330.7 826.3,324.3" fill="#c50046"/><polygon points="922.3,305.7 903.1,312 931.9,309.7 951.1,303.4" fill="#d00039"/><polygon points="1047.2,287.4 1027.9,293.7 1056.7,292.6 1075.9,286.2" fill="#d9002e"/><polygon points="1172,272 1152.8,278.3 1181.5,277.9 1200.8,271.5" fill="#e00025"/><polygon points="1296.8,258 1277.6,264.3 1306.3,263.9 1325.6,257.6" fill="#e8001c"/><polygon points="1421.7,244.4 1402.4,250.7 1431.2,250.9 1450.4,244.5" fill="#ee0014"/><polygon points="1546.5,233.1 1527.2,239.4 1556,240.3 1575.2,233.9" fill="#f4000d"/><polygon points="1671.3,223.5 1652,229.8 1680.8,231.1 1700.1,224.8" fill="#f90008"/><polygon points="1796.1,215.1 1776.9,221.5 1805.6,223.2 1824.9,216.9" fill="#fd0003"/><polygon points="375,487.3 355.8,493.6 384.6,462.3 403.8,455.9" fill="#7c009d"/><polygon points="499.9,407 480.6,413.3 509.4,402.7 528.6,396.4" fill="#9f0073"/><polygon points="624.7,367.1 605.4,373.4 634.2,366.2 653.5,359.8" fill="#b3005c"/><polygon points="749.5,337.7 730.2,344.1 759,340.4 778.3,334.1" fill="#c1004b"/><polygon points="874.3,314.8 855.1,321.2 883.8,318.4 903.1,312" fill="#cc003d"/><polygon points="999.1,295.2 979.9,301.5 1008.7,300.1 1027.9,293.7" fill="#d60031"/><polygon points="1124,279 1104.7,285.3 1133.5,284.7 1152.8,278.3" fill="#de0028"/><polygon points="1248.8,264.8 1229.5,271.1 1258.3,270.6 1277.6,264.3" fill="#e5001f"/><polygon points="1373.6,250.9 1354.4,257.3 1383.2,257 1402.4,250.7" fill="#ec0017"/><polygon points="1498.4,238.7 1479.2,245.1 1508,245.7 1527.2,239.4" fill="#f20010"/><polygon points="1623.3,228.6 1604,234.9 1632.8,236.1 1652,229.8" fill="#f7000a"/><polygon points="1748.1,219.9 1728.8,226.2 1757.6,227.8 1776.9,221.5" fill="#fb0004"/><polygon points="327,526.8 307.8,533.1 336.5,499.9 355.8,493.6" fill="#6900b4"/><polygon points="451.8,431.1 432.6,437.4 461.4,419.6 480.6,413.3" fill="#96007e"/><polygon points="576.6,381.9 557.4,388.3 586.2,379.8 605.4,373.4" fill="#ad0063"/><polygon points="701.5,348.3 682.2,354.6 711,350.4 730.2,344.1" fill="#bd0050"/><polygon points="826.3,324.3 807,330.7 835.8,327.5 855.1,321.2" fill="#c90041"/><polygon points="951.1,303.4 931.9,309.7 960.6,307.9 979.9,301.5" fill="#d30035"/><polygon points="1075.9,286.2 1056.7,292.6 1085.5,291.6 1104.7,285.3" fill="#db002b"/><polygon points="1200.8,271.5 1181.5,277.9 1210.3,277.4 1229.5,271.1" fill="#e30022"/><polygon points="1325.6,257.6 1306.3,263.9 1335.1,263.6 1354.4,257.3" fill="#ea0019"/><polygon points="1450.4,244.5 1431.2,250.9 1459.9,251.4 1479.2,245.1" fill="#f00012"/><polygon points="1575.2,233.9 1556,240.3 1584.8,241.3 1604,234.9" fill="#f6000b"/><polygon points="1700.1,224.8 1680.8,231.1 1709.6,232.5 1728.8,226.2" fill="#fa0006"/><polygon points="1824.9,216.9 1805.6,223.2 1834.4,225.1 1853.7,218.7" fill="#fe0001"/><polygon points="403.8,455.9 384.6,462.3 413.3,443.7 432.6,437.4" fill="#8b008c"/><polygon points="528.6,396.4 509.4,402.7 538.1,394.6 557.4,388.3" fill="#a6006b"/><polygon points="653.5,359.8 634.2,366.2 663,360.9 682.2,354.6" fill="#b80055"/><polygon points="778.3,334.1 759,340.4 787.8,337 807,330.7" fill="#c50046"/><polygon points="903.1,312 883.8,318.4 912.6,316 931.9,309.7" fill="#d00039"/><polygon points="1027.9,293.7 1008.7,300.1 1037.4,298.9 1056.7,292.6" fill="#d9002e"/><polygon points="1152.8,278.3 1133.5,284.7 1162.3,284.2 1181.5,277.9" fill="#e00025"/><polygon points="1277.6,264.3 1258.3,270.6 1287.1,270.2 1306.3,263.9" fill="#e8001c"/><polygon points="1402.4,250.7 1383.2,257 1411.9,257.2 1431.2,250.9" fill="#ee0014"/><polygon points="1527.2,239.4 1508,245.7 1536.8,246.6 1556,240.3" fill="#f4000d"/><polygon points="1652,229.8 1632.8,236.1 1661.6,237.4 1680.8,231.1" fill="#f90008"/><polygon points="1776.9,221.5 1757.6,227.8 1786.4,229.5 1805.6,223.2" fill="#fd0003"/><polygon points="355.8,493.6 336.5,499.9 365.3,468.6 384.6,462.3" fill="#7c009d"/><polygon points="480.6,413.3 461.4,419.6 490.1,409 509.4,402.7" fill="#9f0073"/><polygon points="605.4,373.4 586.2,379.8 615,372.5 634.2,366.2" fill="#b3005c"/><polygon points="730.2,344.1 711,350.4 739.8,346.8 759,340.4" fill="#c1004b"/><polygon points="855.1,321.2 835.8,327.5 864.6,324.7 883.8,318.4" fill="#cc003d"/><polygon points="979.9,301.5 960.6,307.9 989.4,306.4 1008.7,300.1" fill="#d60031"/><polygon points="1104.7,285.3 1085.5,291.6 1114.2,291 1133.5,284.7" fill="#de0028"/><polygon points="1229.5,271.1 1210.3,277.4 1239.1,277 1258.3,270.6" fill="#e5001f"/><polygon points="1354.4,257.3 1335.1,263.6 1363.9,263.4 1383.2,257" fill="#ec0017"/><polygon points="1479.2,245.1 1459.9,251.4 1488.7,252.1 1508,245.7" fill="#f20010"/><polygon points="1604,234.9 1584.8,241.3 1613.5,242.4 1632.8,236.1" fill="#f7000a"/><polygon points="1728.8,226.2 1709.6,232.5 1738.4,234.1 1757.6,227.8" fill="#fb0004"/><polygon points="1853.7,218.7 1834.4,225.1 1863.2,227.1 1882.5,220.7" fill="#ff0000"/><polygon points="307.8,533.1 288.5,539.5 317.3,506.2 336.5,499.9" fill="#6900b4"/><polygon points="432.6,437.4 413.3,443.7 442.1,426 461.4,419.6" fill="#96007e"/><polygon points="557.4,388.3 538.1,394.6 566.9,386.1 586.2,379.8" fill="#ad0063"/><polygon points="682.2,354.6 663,360.9 691.8,356.7 711,350.4" fill="#bd0050"/><polygon points="807,330.7 787.8,337 816.6,333.8 835.8,327.5" fill="#c90041"/><polygon points="931.9,309.7 912.6,316 941.4,314.2 960.6,307.9" fill="#d30035"/><polygon points="1056.7,292.6 1037.4,298.9 1066.2,297.9 1085.5,291.6" fill="#db002b"/><polygon points="1181.5,277.9 1162.3,284.2 1191,283.8 1210.3,277.4" fill="#e30022"/><polygon points="1306.3,263.9 1287.1,270.2 1315.9,269.9 1335.1,263.6" fill="#ea0019"/><polygon points="1431.2,250.9 1411.9,257.2 1440.7,257.7 1459.9,251.4" fill="#f00012"/><polygon points="1556,240.3 1536.8,246.6 1565.5,247.6 1584.8,241.3" fill="#f6000b"/><polygon points="1680.8,231.1 1661.6,237.4 1690.3,238.9 1709.6,232.5" fill="#fa0006"/><polygon points="1805.6,223.2 1786.4,229.5 1815.2,231.4 1834.4,225.1" fill="#fe0001"/><polygon points="384.6,462.3 365.3,468.6 394.1,450 413.3,443.7" fill="#8b008c"/><polygon points="509.4,402.7 490.1,409 518.9,400.9 538.1,394.6" fill="#a6006b"/><polygon points="634.2,366.2 615,372.5 643.7,367.2 663,360.9" fill="#b80055"/><polygon points="759,340.4 739.8,346.8 768.5,343.3 787.8,337" fill="#c50046"/><polygon points="883.8,318.4 864.6,324.7 893.4,322.4 912.6,316" fill="#d00039"/><polygon points="1008.7,300.1 989.4,306.4 1018.2,305.2 1037.4,298.9" fill="#d9002e"/><polygon points="1133.5,284.7 1114.2,291 1143,290.5 1162.3,284.2" fill="#e00025"/><polygon points="1258.3,270.6 1239.1,277 1267.8,276.6 1287.1,270.2" fill="#e8001c"/><polygon points="1383.2,257 1363.9,263.4 1392.7,263.5 1411.9,257.2" fill="#ee0014"/><polygon points="1508,245.7 1488.7,252.1 1517.5,252.9 1536.8,246.6" fill="#f4000d"/><polygon points="1632.8,236.1 1613.5,242.4 1642.3,243.7 1661.6,237.4" fill="#f90008"/><polygon points="1757.6,227.8 1738.4,234.1 1767.1,235.8 1786.4,229.5" fill="#fd0003"/><polygon points="336.5,499.9 317.3,506.2 346.1,474.9 365.3,468.6" fill="#7c009d"/><polygon points="461.4,419.6 442.1,426 470.9,415.4 490.1,409" fill="#9f0073"/><polygon points="586.2,379.8 566.9,386.1 595.7,378.8 615,372.5" fill="#b3005c"/><polygon points="711,350.4 691.8,356.7 720.5,353.1 739.8,346.8" fill="#c1004b"/><polygon points="835.8,327.5 816.6,333.8 845.3,331 864.6,324.7" fill="#cc003d"/><polygon points="960.6,307.9 941.4,314.2 970.2,312.7 989.4,306.4" fill="#d60031"/><polygon points="1085.5,291.6 1066.2,297.9 1095,297.3 1114.2,291" fill="#de0028"/><polygon points="1210.3,277.4 1191,283.8 1219.8,283.3 1239.1,277" fill="#e5001f"/><polygon points="1335.1,263.6 1315.9,269.9 1344.7,269.7 1363.9,263.4" fill="#ec0017"/><polygon points="1459.9,251.4 1440.7,257.7 1469.5,258.4 1488.7,252.1" fill="#f20010"/><polygon points="1584.8,241.3 1565.5,247.6 1594.3,248.8 1613.5,242.4" fill="#f7000a"/><polygon points="1709.6,232.5 1690.3,238.9 1719.1,240.4 1738.4,234.1" fill="#fb0004"/><polygon points="1834.4,225.1 1815.2,231.4 1844,233.4 1863.2,227.1" fill="#ff0000"/><polygon points="288.5,539.5 269.2,545.8 298,512.6 317.3,506.2" fill="#6900b4"/><polygon points="413.3,443.7 394.1,450 422.9,432.3 442.1,426" fill="#96007e"/><polygon points="538.1,394.6 518.9,400.9 547.7,392.4 566.9,386.1" fill="#ad0063"/><polygon points="663,360.9 643.7,367.2 672.5,363 691.8,356.7" fill="#bd0050"/><polygon points="787.8,337 768.5,343.3 797.3,340.1 816.6,333.8" fill="#c90041"/><polygon points="912.6,316 893.4,322.4 922.1,320.5 941.4,314.2" fill="#d30035"/><polygon points="1037.4,298.9 1018.2,305.2 1047,304.3 1066.2,297.9" fill="#db002b"/><polygon points="1162.3,284.2 1143,290.5 1171.8,290.1 1191,283.8" fill="#e30022"/><polygon points="1287.1,270.2 1267.8,276.6 1296.6,276.3 1315.9,269.9" fill="#ea0019"/><polygon points="1411.9,257.2 1392.7,263.5 1421.4,264 1440.7,257.7" fill="#f00012"/><polygon points="1536.8,246.6 1517.5,252.9 1546.3,253.9 1565.5,247.6" fill="#f6000b"/><polygon points="1661.6,237.4 1642.3,243.7 1671.1,245.2 1690.3,238.9" fill="#fa0006"/><polygon points="1786.4,229.5 1767.1,235.8 1795.9,237.7 1815.2,231.4" fill="#fe0001"/><polygon points="365.3,468.6 346.1,474.9 374.8,456.4 394.1,450" fill="#8b008c"/><polygon points="490.1,409 470.9,415.4 499.6,407.3 518.9,400.9" fill="#a6006b"/><polygon points="615,372.5 595.7,378.8 624.5,373.6 643.7,367.2" fill="#b80055"/><polygon points="739.8,346.8 720.5,353.1 749.3,349.6 768.5,343.3" fill="#c50046"/><polygon points="864.6,324.7 845.3,331 874.1,328.7 893.4,322.4" fill="#d00039"/><polygon points="989.4,306.4 970.2,312.7 998.9,311.5 1018.2,305.2" fill="#d9002e"/><polygon points="1114.2,291 1095,297.3 1123.8,296.9 1143,290.5" fill="#e00025"/><polygon points="1239.1,277 1219.8,283.3 1248.6,282.9 1267.8,276.6" fill="#e8001c"/><polygon points="1363.9,263.4 1344.7,269.7 1373.4,269.9 1392.7,263.5" fill="#ee0014"/><polygon points="1488.7,252.1 1469.5,258.4 1498.2,259.2 1517.5,252.9" fill="#f4000d"/><polygon points="1613.5,242.4 1594.3,248.8 1623.1,250.1 1642.3,243.7" fill="#f90008"/><polygon points="1738.4,234.1 1719.1,240.4 1747.9,242.2 1767.1,235.8" fill="#fd0003"/><polygon points="317.3,506.2 298,512.6 326.8,481.2 346.1,474.9" fill="#7c009d"/><polygon points="442.1,426 422.9,432.3 451.6,421.7 470.9,415.4" fill="#9f0073"/><polygon points="566.9,386.1 547.7,392.4 576.5,385.2 595.7,378.8" fill="#b3005c"/><polygon points="691.8,356.7 672.5,363 701.3,359.4 720.5,353.1" fill="#c1004b"/><polygon points="816.6,333.8 797.3,340.1 826.1,337.3 845.3,331" fill="#cc003d"/><polygon points="941.4,314.2 922.1,320.5 950.9,319 970.2,312.7" fill="#d60031"/><polygon points="1066.2,297.9 1047,304.3 1075.8,303.6 1095,297.3" fill="#de0028"/><polygon points="1191,283.8 1171.8,290.1 1200.6,289.6 1219.8,283.3" fill="#e5001f"/><polygon points="1315.9,269.9 1296.6,276.3 1325.4,276 1344.7,269.7" fill="#ec0017"/><polygon points="1440.7,257.7 1421.4,264 1450.2,264.7 1469.5,258.4" fill="#f20010"/><polygon points="1565.5,247.6 1546.3,253.9 1575,255.1 1594.3,248.8" fill="#f7000a"/><polygon points="1690.3,238.9 1671.1,245.2 1699.9,246.8 1719.1,240.4" fill="#fb0004"/><polygon points="1815.2,231.4 1795.9,237.7 1824.7,239.7 1844,233.4" fill="#ff0000"/><polygon points="269.2,545.8 250,552.1 278.8,518.9 298,512.6" fill="#6900b4"/><polygon points="394.1,450 374.8,456.4 403.6,438.6 422.9,432.3" fill="#96007e"/><polygon points="518.9,400.9 499.6,407.3 528.4,398.7 547.7,392.4" fill="#ad0063"/><polygon points="643.7,367.2 624.5,373.6 653.2,369.4 672.5,363" fill="#bd0050"/><polygon points="768.5,343.3 749.3,349.6 778.1,346.5 797.3,340.1" fill="#c90041"/><polygon points="893.4,322.4 874.1,328.7 902.9,326.8 922.1,320.5" fill="#d30035"/><polygon points="1018.2,305.2 998.9,311.5 1027.7,310.6 1047,304.3" fill="#db002b"/><polygon points="1143,290.5 1123.8,296.9 1152.5,296.4 1171.8,290.1" fill="#e30022"/><polygon points="1267.8,276.6 1248.6,282.9 1277.4,282.6 1296.6,276.3" fill="#ea0019"/><polygon points="1392.7,263.5 1373.4,269.9 1402.2,270.4 1421.4,264" fill="#f00012"/><polygon points="1517.5,252.9 1498.2,259.2 1527,260.3 1546.3,253.9" fill="#f6000b"/><polygon points="1642.3,243.7 1623.1,250.1 1651.8,251.5 1671.1,245.2" fill="#fa0006"/><polygon points="1767.1,235.8 1747.9,242.2 1776.7,244 1795.9,237.7" fill="#fe0001"/><polygon points="346.1,474.9 326.8,481.2 355.6,462.7 374.8,456.4" fill="#8b008c"/><polygon points="470.9,415.4 451.6,421.7 480.4,413.6 499.6,407.3" fill="#a6006b"/><polygon points="595.7,378.8 576.5,385.2 605.2,379.9 624.5,373.6" fill="#b80055"/><polygon points="720.5,353.1 701.3,359.4 730,356 749.3,349.6" fill="#c50046"/><polygon points="845.3,331 826.1,337.3 854.9,335 874.1,328.7" fill="#d00039"/><polygon points="970.2,312.7 950.9,319 979.7,317.9 998.9,311.5" fill="#d9002e"/><polygon points="1095,297.3 1075.8,303.6 1104.5,303.2 1123.8,296.9" fill="#e00025"/><polygon points="1219.8,283.3 1200.6,289.6 1229.3,289.2 1248.6,282.9" fill="#e8001c"/><polygon points="1344.7,269.7 1325.4,276 1354.2,276.2 1373.4,269.9" fill="#ee0014"/><polygon points="1469.5,258.4 1450.2,264.7 1479,265.6 1498.2,259.2" fill="#f4000d"/><polygon points="1594.3,248.8 1575,255.1 1603.8,256.4 1623.1,250.1" fill="#f90008"/><polygon points="1719.1,240.4 1699.9,246.8 1728.6,248.5 1747.9,242.2" fill="#fd0003"/><polygon points="298,512.6 278.8,518.9 307.6,487.6 326.8,481.2" fill="#7c009d"/><polygon points="422.9,432.3 403.6,438.6 432.4,428 451.6,421.7" fill="#9f0073"/><polygon points="547.7,392.4 528.4,398.7 557.2,391.5 576.5,385.2" fill="#b3005c"/><polygon points="672.5,363 653.2,369.4 682,365.7 701.3,359.4" fill="#c1004b"/><polygon points="797.3,340.1 778.1,346.5 806.8,343.7 826.1,337.3" fill="#cc003d"/><polygon points="922.1,320.5 902.9,326.8 931.7,325.4 950.9,319" fill="#d60031"/><polygon points="1047,304.3 1027.7,310.6 1056.5,310 1075.8,303.6" fill="#de0028"/><polygon points="1171.8,290.1 1152.5,296.4 1181.3,295.9 1200.6,289.6" fill="#e5001f"/><polygon points="1296.6,276.3 1277.4,282.6 1306.2,282.3 1325.4,276" fill="#ec0017"/><polygon points="1421.4,264 1402.2,270.4 1431,271.1 1450.2,264.7" fill="#f20010"/><polygon points="1546.3,253.9 1527,260.3 1555.8,261.4 1575,255.1" fill="#f7000a"/><polygon points="1671.1,245.2 1651.8,251.5 1680.6,253.1 1699.9,246.8" fill="#fb0004"/><polygon points="1795.9,237.7 1776.7,244 1805.5,246.1 1824.7,239.7" fill="#ff0000"/><polygon points="250,552.1 230.8,558.4 259.5,525.2 278.8,518.9" fill="#6900b4"/><polygon points="374.8,456.4 355.6,462.7 384.4,445 403.6,438.6" fill="#96007e"/><polygon points="499.6,407.3 480.4,413.6 509.2,405.1 528.4,398.7" fill="#ad0063"/><polygon points="624.5,373.6 605.2,379.9 634,375.7 653.2,369.4" fill="#bd0050"/><polygon points="749.3,349.6 730,356 758.8,352.8 778.1,346.5" fill="#c90041"/><polygon points="874.1,328.7 854.9,335 883.6,333.2 902.9,326.8" fill="#d30035"/><polygon points="998.9,311.5 979.7,317.9 1008.5,316.9 1027.7,310.6" fill="#db002b"/><polygon points="1123.8,296.9 1104.5,303.2 1133.3,302.7 1152.5,296.4" fill="#e30022"/><polygon points="1248.6,282.9 1229.3,289.2 1258.1,288.9 1277.4,282.6" fill="#ea0019"/><polygon points="1373.4,269.9 1354.2,276.2 1382.9,276.7 1402.2,270.4" fill="#f00012"/><polygon points="1498.2,259.2 1479,265.6 1507.8,266.6 1527,260.3" fill="#f6000b"/><polygon points="1623.1,250.1 1603.8,256.4 1632.6,257.8 1651.8,251.5" fill="#fa0006"/><polygon points="1747.9,242.2 1728.6,248.5 1757.4,250.4 1776.7,244" fill="#fe0001"/><polygon points="326.8,481.2 307.6,487.6 336.3,469 355.6,462.7" fill="#8b008c"/><polygon points="451.6,421.7 432.4,428 461.1,419.9 480.4,413.6" fill="#a6006b"/><polygon points="576.5,385.2 557.2,391.5 586,386.2 605.2,379.9" fill="#b80055"/><polygon points="701.3,359.4 682,365.7 710.8,362.3 730,356" fill="#c50046"/><polygon points="826.1,337.3 806.8,343.7 835.6,341.4 854.9,335" fill="#d00039"/><polygon points="950.9,319 931.7,325.4 960.4,324.2 979.7,317.9" fill="#d9002e"/><polygon points="1075.8,303.6 1056.5,310 1085.3,309.5 1104.5,303.2" fill="#e00025"/><polygon points="1200.6,289.6 1181.3,295.9 1210.1,295.5 1229.3,289.2" fill="#e8001c"/><polygon points="1325.4,276 1306.2,282.3 1334.9,282.5 1354.2,276.2" fill="#ee0014"/><polygon points="1450.2,264.7 1431,271.1 1459.8,271.9 1479,265.6" fill="#f4000d"/><polygon points="1575,255.1 1555.8,261.4 1584.6,262.7 1603.8,256.4" fill="#f90008"/><polygon points="1699.9,246.8 1680.6,253.1 1709.4,254.8 1728.6,248.5" fill="#fd0003"/><polygon points="278.8,518.9 259.5,525.2 288.3,493.9 307.6,487.6" fill="#7c009d"/><polygon points="403.6,438.6 384.4,445 413.1,434.3 432.4,428" fill="#9f0073"/><polygon points="528.4,398.7 509.2,405.1 538,397.8 557.2,391.5" fill="#b3005c"/><polygon points="653.2,369.4 634,375.7 662.8,372.1 682,365.7" fill="#c1004b"/><polygon points="778.1,346.5 758.8,352.8 787.6,350 806.8,343.7" fill="#cc003d"/><polygon points="902.9,326.8 883.6,333.2 912.4,331.7 931.7,325.4" fill="#d60031"/><polygon points="1027.7,310.6 1008.5,316.9 1037.2,316.3 1056.5,310" fill="#de0028"/><polygon points="1152.5,296.4 1133.3,302.7 1162.1,302.3 1181.3,295.9" fill="#e5001f"/><polygon points="1277.4,282.6 1258.1,288.9 1286.9,288.7 1306.2,282.3" fill="#ec0017"/><polygon points="1402.2,270.4 1382.9,276.7 1411.7,277.4 1431,271.1" fill="#f20010"/><polygon points="1527,260.3 1507.8,266.6 1536.5,267.7 1555.8,261.4" fill="#f7000a"/><polygon points="1651.8,251.5 1632.6,257.8 1661.4,259.4 1680.6,253.1" fill="#fb0004"/><polygon points="1776.7,244 1757.4,250.4 1786.2,252.4 1805.5,246.1" fill="#ff0000"/><polygon points="230.8,558.4 211.5,564.8 240.3,531.6 259.5,525.2" fill="#6900b4"/><polygon points="355.6,462.7 336.3,469 365.1,451.3 384.4,445" fill="#96007e"/><polygon points="480.4,413.6 461.1,419.9 489.9,411.4 509.2,405.1" fill="#ad0063"/><polygon points="605.2,379.9 586,386.2 614.8,382 634,375.7" fill="#bd0050"/><polygon points="730,356 710.8,362.3 739.6,359.1 758.8,352.8" fill="#c90041"/><polygon points="854.9,335 835.6,341.4 864.4,339.5 883.6,333.2" fill="#d30035"/><polygon points="979.7,317.9 960.4,324.2 989.2,323.3 1008.5,316.9" fill="#db002b"/><polygon points="1104.5,303.2 1085.3,309.5 1114,309.1 1133.3,302.7" fill="#e30022"/><polygon points="1229.3,289.2 1210.1,295.5 1238.9,295.2 1258.1,288.9" fill="#ea0019"/><polygon points="1354.2,276.2 1334.9,282.5 1363.7,283 1382.9,276.7" fill="#f00012"/><polygon points="1479,265.6 1459.8,271.9 1488.5,272.9 1507.8,266.6" fill="#f6000b"/><polygon points="1603.8,256.4 1584.6,262.7 1613.3,264.2 1632.6,257.8" fill="#fa0006"/><polygon points="1728.6,248.5 1709.4,254.8 1738.2,256.7 1757.4,250.4" fill="#fe0001"/><polygon points="307.6,487.6 288.3,493.9 317.1,475.4 336.3,469" fill="#8b008c"/><polygon points="432.4,428 413.1,434.3 441.9,426.2 461.1,419.9" fill="#a6006b"/><polygon points="557.2,391.5 538,397.8 566.7,392.6 586,386.2" fill="#b80055"/><polygon points="682,365.7 662.8,372.1 691.5,368.6 710.8,362.3" fill="#c50046"/><polygon points="806.8,343.7 787.6,350 816.4,347.7 835.6,341.4" fill="#d00039"/><polygon points="931.7,325.4 912.4,331.7 941.2,330.5 960.4,324.2" fill="#d9002e"/><polygon points="1056.5,310 1037.2,316.3 1066,315.8 1085.3,309.5" fill="#e00025"/><polygon points="1181.3,295.9 1162.1,302.3 1190.8,301.9 1210.1,295.5" fill="#e8001c"/><polygon points="1306.2,282.3 1286.9,288.7 1315.7,288.8 1334.9,282.5" fill="#ee0014"/><polygon points="1431,271.1 1411.7,277.4 1440.5,278.2 1459.8,271.9" fill="#f4000d"/><polygon points="1555.8,261.4 1536.5,267.7 1565.3,269.1 1584.6,262.7" fill="#f90008"/><polygon points="1680.6,253.1 1661.4,259.4 1690.1,261.2 1709.4,254.8" fill="#fd0003"/><polygon points="259.5,525.2 240.3,531.6 269.1,500.2 288.3,493.9" fill="#7c009d"/><polygon points="384.4,445 365.1,451.3 393.9,440.7 413.1,434.3" fill="#9f0073"/><polygon points="509.2,405.1 489.9,411.4 518.7,404.1 538,397.8" fill="#b3005c"/><polygon points="634,375.7 614.8,382 643.5,378.4 662.8,372.1" fill="#c1004b"/><polygon points="758.8,352.8 739.6,359.1 768.3,356.3 787.6,350" fill="#cc003d"/><polygon points="883.6,333.2 864.4,339.5 893.2,338 912.4,331.7" fill="#d60031"/><polygon points="1008.5,316.9 989.2,323.3 1018,322.6 1037.2,316.3" fill="#de0028"/><polygon points="1133.3,302.7 1114,309.1 1142.8,308.6 1162.1,302.3" fill="#e5001f"/><polygon points="1258.1,288.9 1238.9,295.2 1267.7,295 1286.9,288.7" fill="#ec0017"/><polygon points="1382.9,276.7 1363.7,283 1392.5,283.7 1411.7,277.4" fill="#f20010"/><polygon points="1507.8,266.6 1488.5,272.9 1517.3,274.1 1536.5,267.7" fill="#f7000a"/><polygon points="1632.6,257.8 1613.3,264.2 1642.1,265.8 1661.4,259.4" fill="#fb0004"/><polygon points="1757.4,250.4 1738.2,256.7 1767,258.7 1786.2,252.4" fill="#ff0000"/><polygon points="211.5,564.8 192.2,571.1 221,537.9 240.3,531.6" fill="#6900b4"/><polygon points="336.3,469 317.1,475.4 345.9,457.6 365.1,451.3" fill="#96007e"/><polygon points="461.1,419.9 441.9,426.2 470.7,417.7 489.9,411.4" fill="#ad0063"/><polygon points="586,386.2 566.7,392.6 595.5,388.3 614.8,382" fill="#bd0050"/><polygon points="710.8,362.3 691.5,368.6 720.3,365.4 739.6,359.1" fill="#c90041"/><polygon points="835.6,341.4 816.4,347.7 845.1,345.8 864.4,339.5" fill="#d30035"/><polygon points="960.4,324.2 941.2,330.5 970,329.6 989.2,323.3" fill="#db002b"/><polygon points="1085.3,309.5 1066,315.8 1094.8,315.4 1114,309.1" fill="#e30022"/><polygon points="1210.1,295.5 1190.8,301.9 1219.6,301.6 1238.9,295.2" fill="#ea0019"/><polygon points="1334.9,282.5 1315.7,288.8 1344.4,289.3 1363.7,283" fill="#f00012"/><polygon points="1459.8,271.9 1440.5,278.2 1469.3,279.2 1488.5,272.9" fill="#f6000b"/><polygon points="1584.6,262.7 1565.3,269.1 1594.1,270.5 1613.3,264.2" fill="#fa0006"/><polygon points="1709.4,254.8 1690.1,261.2 1718.9,263 1738.2,256.7" fill="#fe0001"/><polygon points="288.3,493.9 269.1,500.2 297.8,481.7 317.1,475.4" fill="#8b008c"/><polygon points="413.1,434.3 393.9,440.7 422.6,432.6 441.9,426.2" fill="#a6006b"/><polygon points="538,397.8 518.7,404.1 547.5,398.9 566.7,392.6" fill="#b80055"/><polygon points="662.8,372.1 643.5,378.4 672.3,374.9 691.5,368.6" fill="#c50046"/><polygon points="787.6,350 768.3,356.3 797.1,354 816.4,347.7" fill="#d00039"/><polygon points="912.4,331.7 893.2,338 921.9,336.8 941.2,330.5" fill="#d9002e"/><polygon points="1037.2,316.3 1018,322.6 1046.8,322.2 1066,315.8" fill="#e00025"/><polygon points="1162.1,302.3 1142.8,308.6 1171.6,308.2 1190.8,301.9" fill="#e8001c"/><polygon points="1286.9,288.7 1267.7,295 1296.4,295.2 1315.7,288.8" fill="#ee0014"/><polygon points="1411.7,277.4 1392.5,283.7 1421.2,284.6 1440.5,278.2" fill="#f4000d"/><polygon points="1536.5,267.7 1517.3,274.1 1546.1,275.4 1565.3,269.1" fill="#f90008"/><polygon points="1661.4,259.4 1642.1,265.8 1670.9,267.5 1690.1,261.2" fill="#fd0003"/><polygon points="240.3,531.6 221,537.9 249.8,506.6 269.1,500.2" fill="#7c009d"/><polygon points="365.1,451.3 345.9,457.6 374.6,447 393.9,440.7" fill="#9f0073"/><polygon points="489.9,411.4 470.7,417.7 499.4,410.5 518.7,404.1" fill="#b3005c"/><polygon points="614.8,382 595.5,388.3 624.3,384.7 643.5,378.4" fill="#c1004b"/><polygon points="739.6,359.1 720.3,365.4 749.1,362.7 768.3,356.3" fill="#cc003d"/><polygon points="864.4,339.5 845.1,345.8 873.9,344.4 893.2,338" fill="#d60031"/><polygon points="989.2,323.3 970,329.6 998.8,329 1018,322.6" fill="#de0028"/><polygon points="1114,309.1 1094.8,315.4 1123.6,314.9 1142.8,308.6" fill="#e5001f"/><polygon points="1238.9,295.2 1219.6,301.6 1248.4,301.3 1267.7,295" fill="#ec0017"/><polygon points="1363.7,283 1344.4,289.3 1373.2,290 1392.5,283.7" fill="#f20010"/><polygon points="1488.5,272.9 1469.3,279.2 1498,280.4 1517.3,274.1" fill="#f7000a"/><polygon points="1613.3,264.2 1594.1,270.5 1622.9,272.1 1642.1,265.8" fill="#fb0004"/><polygon points="1738.2,256.7 1718.9,263 1747.7,265 1767,258.7" fill="#ff0000"/><polygon points="192.2,571.1 173,577.4 201.8,544.2 221,537.9" fill="#6900b4"/><polygon points="317.1,475.4 297.8,481.7 326.6,463.9 345.9,457.6" fill="#96007e"/><polygon points="441.9,426.2 422.6,432.6 451.4,424 470.7,417.7" fill="#ad0063"/><polygon points="566.7,392.6 547.5,398.9 576.2,394.7 595.5,388.3" fill="#bd0050"/><polygon points="691.5,368.6 672.3,374.9 701.1,371.8 720.3,365.4" fill="#c90041"/><polygon points="816.4,347.7 797.1,354 825.9,352.2 845.1,345.8" fill="#d30035"/><polygon points="941.2,330.5 921.9,336.8 950.7,335.9 970,329.6" fill="#db002b"/><polygon points="1066,315.8 1046.8,322.2 1075.5,321.7 1094.8,315.4" fill="#e30022"/><polygon points="1190.8,301.9 1171.6,308.2 1200.4,307.9 1219.6,301.6" fill="#ea0019"/><polygon points="1315.7,288.8 1296.4,295.2 1325.2,295.7 1344.4,289.3" fill="#f00012"/><polygon points="1440.5,278.2 1421.2,284.6 1450,285.6 1469.3,279.2" fill="#f6000b"/><polygon points="1565.3,269.1 1546.1,275.4 1574.8,276.8 1594.1,270.5" fill="#fa0006"/><polygon points="1690.1,261.2 1670.9,267.5 1699.7,269.3 1718.9,263" fill="#fe0001"/><polygon points="269.1,500.2 249.8,506.6 278.6,488 297.8,481.7" fill="#8b008c"/><polygon points="393.9,440.7 374.6,447 403.4,438.9 422.6,432.6" fill="#a6006b"/><polygon points="518.7,404.1 499.4,410.5 528.2,405.2 547.5,398.9" fill="#b80055"/><polygon points="643.5,378.4 624.3,384.7 653,381.3 672.3,374.9" fill="#c50046"/><polygon points="768.3,356.3 749.1,362.7 777.9,360.3 797.1,354" fill="#d00039"/><polygon points="893.2,338 873.9,344.4 902.7,343.2 921.9,336.8" fill="#d9002e"/><polygon points="1018,322.6 998.8,329 1027.5,328.5 1046.8,322.2" fill="#e00025"/><polygon points="1142.8,308.6 1123.6,314.9 1152.3,314.5 1171.6,308.2" fill="#e8001c"/><polygon points="1267.7,295 1248.4,301.3 1277.2,301.5 1296.4,295.2" fill="#ee0014"/><polygon points="1392.5,283.7 1373.2,290 1402,290.9 1421.2,284.6" fill="#f4000d"/><polygon points="1517.3,274.1 1498,280.4 1526.8,281.7 1546.1,275.4" fill="#f90008"/><polygon points="1642.1,265.8 1622.9,272.1 1651.6,273.8 1670.9,267.5" fill="#fd0003"/><polygon points="221,537.9 201.8,544.2 230.6,512.9 249.8,506.6" fill="#7c009d"/><polygon points="345.9,457.6 326.6,463.9 355.4,453.3 374.6,447" fill="#9f0073"/><polygon points="470.7,417.7 451.4,424 480.2,416.8 499.4,410.5" fill="#b3005c"/><polygon points="595.5,388.3 576.2,394.7 605,391 624.3,384.7" fill="#c1004b"/><polygon points="720.3,365.4 701.1,371.8 729.8,369 749.1,362.7" fill="#cc003d"/><polygon points="845.1,345.8 825.9,352.2 854.7,350.7 873.9,344.4" fill="#d60031"/><polygon points="970,329.6 950.7,335.9 979.5,335.3 998.8,329" fill="#de0028"/><polygon points="1094.8,315.4 1075.5,321.7 1104.3,321.3 1123.6,314.9" fill="#e5001f"/><polygon points="1219.6,301.6 1200.4,307.9 1229.2,307.6 1248.4,301.3" fill="#ec0017"/><polygon points="1344.4,289.3 1325.2,295.7 1354,296.4 1373.2,290" fill="#f20010"/><polygon points="1469.3,279.2 1450,285.6 1478.8,286.7 1498,280.4" fill="#f7000a"/><polygon points="1594.1,270.5 1574.8,276.8 1603.6,278.4 1622.9,272.1" fill="#fb0004"/><polygon points="1718.9,263 1699.7,269.3 1728.5,271.4 1747.7,265" fill="#ff0000"/><polygon points="173,577.4 153.8,583.8 182.5,550.5 201.8,544.2" fill="#6900b4"/><polygon points="297.8,481.7 278.6,488 307.4,470.3 326.6,463.9" fill="#96007e"/><polygon points="422.6,432.6 403.4,438.9 432.2,430.4 451.4,424" fill="#ad0063"/><polygon points="547.5,398.9 528.2,405.2 557,401 576.2,394.7" fill="#bd0050"/><polygon points="672.3,374.9 653,381.3 681.8,378.1 701.1,371.8" fill="#c90041"/><polygon points="797.1,354 777.9,360.3 806.6,358.5 825.9,352.2" fill="#d30035"/><polygon points="921.9,336.8 902.7,343.2 931.5,342.2 950.7,335.9" fill="#db002b"/><polygon points="1046.8,322.2 1027.5,328.5 1056.3,328 1075.5,321.7" fill="#e30022"/><polygon points="1171.6,308.2 1152.3,314.5 1181.1,314.2 1200.4,307.9" fill="#ea0019"/><polygon points="1296.4,295.2 1277.2,301.5 1305.9,302 1325.2,295.7" fill="#f00012"/><polygon points="1421.2,284.6 1402,290.9 1430.8,291.9 1450,285.6" fill="#f6000b"/><polygon points="1546.1,275.4 1526.8,281.7 1555.6,283.2 1574.8,276.8" fill="#fa0006"/><polygon points="1670.9,267.5 1651.6,273.8 1680.4,275.7 1699.7,269.3" fill="#fe0001"/><polygon points="249.8,506.6 230.6,512.9 259.3,494.3 278.6,488" fill="#8b008c"/><polygon points="374.6,447 355.4,453.3 384.1,445.2 403.4,438.9" fill="#a6006b"/><polygon points="499.4,410.5 480.2,416.8 509,411.5 528.2,405.2" fill="#b80055"/><polygon points="624.3,384.7 605,391 633.8,387.6 653,381.3" fill="#c50046"/><polygon points="749.1,362.7 729.8,369 758.6,366.7 777.9,360.3" fill="#d00039"/><polygon points="873.9,344.4 854.7,350.7 883.4,349.5 902.7,343.2" fill="#d9002e"/><polygon points="998.8,329 979.5,335.3 1008.3,334.8 1027.5,328.5" fill="#e00025"/><polygon points="1123.6,314.9 1104.3,321.3 1133.1,320.8 1152.3,314.5" fill="#e8001c"/><polygon points="1248.4,301.3 1229.2,307.6 1257.9,307.8 1277.2,301.5" fill="#ee0014"/><polygon points="1373.2,290 1354,296.4 1382.8,297.2 1402,290.9" fill="#f4000d"/><polygon points="1498,280.4 1478.8,286.7 1507.6,288 1526.8,281.7" fill="#f90008"/><polygon points="1622.9,272.1 1603.6,278.4 1632.4,280.1 1651.6,273.8" fill="#fd0003"/><polygon points="201.8,544.2 182.5,550.5 211.3,519.2 230.6,512.9" fill="#7c009d"/><polygon points="326.6,463.9 307.4,470.3 336.1,459.7 355.4,453.3" fill="#9f0073"/><polygon points="451.4,424 432.2,430.4 460.9,423.1 480.2,416.8" fill="#b3005c"/><polygon points="576.2,394.7 557,401 585.8,397.4 605,391" fill="#c1004b"/><polygon points="701.1,371.8 681.8,378.1 710.6,375.3 729.8,369" fill="#cc003d"/><polygon points="825.9,352.2 806.6,358.5 835.4,357 854.7,350.7" fill="#d60031"/><polygon points="950.7,335.9 931.5,342.2 960.2,341.6 979.5,335.3" fill="#de0028"/><polygon points="1075.5,321.7 1056.3,328 1085.1,327.6 1104.3,321.3" fill="#e5001f"/><polygon points="1200.4,307.9 1181.1,314.2 1209.9,314 1229.2,307.6" fill="#ec0017"/><polygon points="1325.2,295.7 1305.9,302 1334.7,302.7 1354,296.4" fill="#f20010"/><polygon points="1450,285.6 1430.8,291.9 1459.5,293.1 1478.8,286.7" fill="#f7000a"/><polygon points="1574.8,276.8 1555.6,283.2 1584.4,284.7 1603.6,278.4" fill="#fb0004"/><polygon points="1699.7,269.3 1680.4,275.7 1709.2,277.7 1728.5,271.4" fill="#ff0000"/><polygon points="153.8,583.8 134.5,590.1 163.3,556.9 182.5,550.5" fill="#6900b4"/><polygon points="278.6,488 259.3,494.3 288.1,476.6 307.4,470.3" fill="#96007e"/><polygon points="403.4,438.9 384.1,445.2 412.9,436.7 432.2,430.4" fill="#ad0063"/><polygon points="528.2,405.2 509,411.5 537.8,407.3 557,401" fill="#bd0050"/><polygon points="653,381.3 633.8,387.6 662.6,384.4 681.8,378.1" fill="#c90041"/><polygon points="777.9,360.3 758.6,366.7 787.4,364.8 806.6,358.5" fill="#d30035"/><polygon points="902.7,343.2 883.4,349.5 912.2,348.6 931.5,342.2" fill="#db002b"/><polygon points="1027.5,328.5 1008.3,334.8 1037,334.4 1056.3,328" fill="#e30022"/><polygon points="1152.3,314.5 1133.1,320.8 1161.9,320.5 1181.1,314.2" fill="#ea0019"/><polygon points="1277.2,301.5 1257.9,307.8 1286.7,308.3 1305.9,302" fill="#f00012"/><polygon points="1402,290.9 1382.8,297.2 1411.5,298.2 1430.8,291.9" fill="#f6000b"/><polygon points="1526.8,281.7 1507.6,288 1536.3,289.5 1555.6,283.2" fill="#fa0006"/><polygon points="1651.6,273.8 1632.4,280.1 1661.2,282 1680.4,275.7" fill="#fe0001"/><polygon points="230.6,512.9 211.3,519.2 240.1,500.7 259.3,494.3" fill="#8b008c"/><polygon points="355.4,453.3 336.1,459.7 364.9,451.6 384.1,445.2" fill="#a6006b"/><polygon points="480.2,416.8 460.9,423.1 489.7,417.9 509,411.5" fill="#b80055"/><polygon points="605,391 585.8,397.4 614.5,393.9 633.8,387.6" fill="#c50046"/><polygon points="729.8,369 710.6,375.3 739.4,373 758.6,366.7" fill="#d00039"/><polygon points="854.7,350.7 835.4,357 864.2,355.8 883.4,349.5" fill="#d9002e"/><polygon points="979.5,335.3 960.2,341.6 989,341.2 1008.3,334.8" fill="#e00025"/><polygon points="1104.3,321.3 1085.1,327.6 1113.8,327.2 1133.1,320.8" fill="#e8001c"/><polygon points="1229.2,307.6 1209.9,314 1238.7,314.1 1257.9,307.8" fill="#ee0014"/><polygon points="1354,296.4 1334.7,302.7 1363.5,303.5 1382.8,297.2" fill="#f4000d"/><polygon points="1478.8,286.7 1459.5,293.1 1488.3,294.4 1507.6,288" fill="#f90008"/><polygon points="1603.6,278.4 1584.4,284.7 1613.1,286.5 1632.4,280.1" fill="#fd0003"/><polygon points="182.5,550.5 163.3,556.9 192.1,525.5 211.3,519.2" fill="#7c009d"/><polygon points="307.4,470.3 288.1,476.6 316.9,466 336.1,459.7" fill="#9f0073"/><polygon points="432.2,430.4 412.9,436.7 441.7,429.4 460.9,423.1" fill="#b3005c"/><polygon points="557,401 537.8,407.3 566.5,403.7 585.8,397.4" fill="#c1004b"/><polygon points="681.8,378.1 662.6,384.4 691.3,381.6 710.6,375.3" fill="#cc003d"/><polygon points="806.6,358.5 787.4,364.8 816.2,363.3 835.4,357" fill="#d60031"/><polygon points="931.5,342.2 912.2,348.6 941,347.9 960.2,341.6" fill="#de0028"/><polygon points="1056.3,328 1037,334.4 1065.8,333.9 1085.1,327.6" fill="#e5001f"/><polygon points="1181.1,314.2 1161.9,320.5 1190.7,320.3 1209.9,314" fill="#ec0017"/><polygon points="1305.9,302 1286.7,308.3 1315.5,309 1334.7,302.7" fill="#f20010"/><polygon points="1430.8,291.9 1411.5,298.2 1440.3,299.4 1459.5,293.1" fill="#f7000a"/><polygon points="1555.6,283.2 1536.3,289.5 1565.1,291.1 1584.4,284.7" fill="#fb0004"/><polygon points="1680.4,275.7 1661.2,282 1690,284 1709.2,277.7" fill="#ff0000"/><polygon points="134.5,590.1 115.2,596.4 144,563.2 163.3,556.9" fill="#6900b4"/><polygon points="259.3,494.3 240.1,500.7 268.9,482.9 288.1,476.6" fill="#96007e"/><polygon points="384.1,445.2 364.9,451.6 393.7,443 412.9,436.7" fill="#ad0063"/><polygon points="509,411.5 489.7,417.9 518.5,413.7 537.8,407.3" fill="#bd0050"/><polygon points="633.8,387.6 614.5,393.9 643.3,390.8 662.6,384.4" fill="#c90041"/><polygon points="758.6,366.7 739.4,373 768.1,371.1 787.4,364.8" fill="#d30035"/><polygon points="883.4,349.5 864.2,355.8 893,354.9 912.2,348.6" fill="#db002b"/><polygon points="1008.3,334.8 989,341.2 1017.8,340.7 1037,334.4" fill="#e30022"/><polygon points="1133.1,320.8 1113.8,327.2 1142.6,326.9 1161.9,320.5" fill="#ea0019"/><polygon points="1257.9,307.8 1238.7,314.1 1267.4,314.7 1286.7,308.3" fill="#f00012"/><polygon points="1382.8,297.2 1363.5,303.5 1392.3,304.5 1411.5,298.2" fill="#f6000b"/><polygon points="1507.6,288 1488.3,294.4 1517.1,295.8 1536.3,289.5" fill="#fa0006"/><polygon points="1632.4,280.1 1613.1,286.5 1641.9,288.3 1661.2,282" fill="#fe0001"/><polygon points="211.3,519.2 192.1,525.5 220.8,507 240.1,500.7" fill="#8b008c"/><polygon points="336.1,459.7 316.9,466 345.6,457.9 364.9,451.6" fill="#a6006b"/><polygon points="460.9,423.1 441.7,429.4 470.5,424.2 489.7,417.9" fill="#b80055"/><polygon points="585.8,397.4 566.5,403.7 595.3,400.3 614.5,393.9" fill="#c50046"/><polygon points="710.6,375.3 691.3,381.6 720.1,379.3 739.4,373" fill="#d00039"/><polygon points="835.4,357 816.2,363.3 844.9,362.2 864.2,355.8" fill="#d9002e"/><polygon points="960.2,341.6 941,347.9 969.8,347.5 989,341.2" fill="#e00025"/><polygon points="1085.1,327.6 1065.8,333.9 1094.6,333.5 1113.8,327.2" fill="#e8001c"/><polygon points="1209.9,314 1190.7,320.3 1219.4,320.5 1238.7,314.1" fill="#ee0014"/><polygon points="1334.7,302.7 1315.5,309 1344.2,309.9 1363.5,303.5" fill="#f4000d"/><polygon points="1459.5,293.1 1440.3,299.4 1469.1,300.7 1488.3,294.4" fill="#f90008"/><polygon points="1584.4,284.7 1565.1,291.1 1593.9,292.8 1613.1,286.5" fill="#fd0003"/><polygon points="163.3,556.9 144,563.2 172.8,531.9 192.1,525.5" fill="#7c009d"/><polygon points="288.1,476.6 268.9,482.9 297.6,472.3 316.9,466" fill="#9f0073"/><polygon points="412.9,436.7 393.7,443 422.4,435.8 441.7,429.4" fill="#b3005c"/><polygon points="537.8,407.3 518.5,413.7 547.3,410 566.5,403.7" fill="#c1004b"/><polygon points="662.6,384.4 643.3,390.8 672.1,388 691.3,381.6" fill="#cc003d"/><polygon points="787.4,364.8 768.1,371.1 796.9,369.7 816.2,363.3" fill="#d60031"/><polygon points="912.2,348.6 893,354.9 921.8,354.3 941,347.9" fill="#de0028"/><polygon points="1037,334.4 1017.8,340.7 1046.6,340.2 1065.8,333.9" fill="#e5001f"/><polygon points="1161.9,320.5 1142.6,326.9 1171.4,326.6 1190.7,320.3" fill="#ec0017"/><polygon points="1286.7,308.3 1267.4,314.7 1296.2,315.3 1315.5,309" fill="#f20010"/><polygon points="1411.5,298.2 1392.3,304.5 1421,305.7 1440.3,299.4" fill="#f7000a"/><polygon points="1536.3,289.5 1517.1,295.8 1545.9,297.4 1565.1,291.1" fill="#fb0004"/><polygon points="1661.2,282 1641.9,288.3 1670.7,290.4 1690,284" fill="#ff0000"/><polygon points="115.2,596.4 96,602.7 124.8,569.5 144,563.2" fill="#6900b4"/><polygon points="240.1,500.7 220.8,507 249.6,489.2 268.9,482.9" fill="#96007e"/><polygon points="364.9,451.6 345.6,457.9 374.4,449.4 393.7,443" fill="#ad0063"/><polygon points="489.7,417.9 470.5,424.2 499.2,420 518.5,413.7" fill="#bd0050"/><polygon points="614.5,393.9 595.3,400.3 624.1,397.1 643.3,390.8" fill="#c90041"/><polygon points="739.4,373 720.1,379.3 748.9,377.5 768.1,371.1" fill="#d30035"/><polygon points="864.2,355.8 844.9,362.2 873.7,361.2 893,354.9" fill="#db002b"/><polygon points="989,341.2 969.8,347.5 998.5,347 1017.8,340.7" fill="#e30022"/><polygon points="1113.8,327.2 1094.6,333.5 1123.4,333.2 1142.6,326.9" fill="#ea0019"/><polygon points="1238.7,314.1 1219.4,320.5 1248.2,321 1267.4,314.7" fill="#f00012"/><polygon points="1363.5,303.5 1344.2,309.9 1373,310.9 1392.3,304.5" fill="#f6000b"/><polygon points="1488.3,294.4 1469.1,300.7 1497.8,302.1 1517.1,295.8" fill="#fa0006"/><polygon points="1613.1,286.5 1593.9,292.8 1622.7,294.7 1641.9,288.3" fill="#fe0001"/><polygon points="192.1,525.5 172.8,531.9 201.6,513.3 220.8,507" fill="#8b008c"/><polygon points="316.9,466 297.6,472.3 326.4,464.2 345.6,457.9" fill="#a6006b"/><polygon points="441.7,429.4 422.4,435.8 451.2,430.5 470.5,424.2" fill="#b80055"/><polygon points="566.5,403.7 547.3,410 576,406.6 595.3,400.3" fill="#c50046"/><polygon points="691.3,381.6 672.1,388 700.9,385.6 720.1,379.3" fill="#d00039"/><polygon points="816.2,363.3 796.9,369.7 825.7,368.5 844.9,362.2" fill="#d9002e"/><polygon points="941,347.9 921.8,354.3 950.5,353.8 969.8,347.5" fill="#e00025"/><polygon points="1065.8,333.9 1046.6,340.2 1075.3,339.8 1094.6,333.5" fill="#e8001c"/><polygon points="1190.7,320.3 1171.4,326.6 1200.2,326.8 1219.4,320.5" fill="#ee0014"/><polygon points="1315.5,309 1296.2,315.3 1325,316.2 1344.2,309.9" fill="#f4000d"/><polygon points="1440.3,299.4 1421,305.7 1449.8,307 1469.1,300.7" fill="#f90008"/><polygon points="1565.1,291.1 1545.9,297.4 1574.6,299.1 1593.9,292.8" fill="#fd0003"/><polygon points="144,563.2 124.8,569.5 153.6,538.2 172.8,531.9" fill="#7c009d"/><polygon points="268.9,482.9 249.6,489.2 278.4,478.6 297.6,472.3" fill="#9f0073"/><polygon points="393.7,443 374.4,449.4 403.2,442.1 422.4,435.8" fill="#b3005c"/><polygon points="518.5,413.7 499.2,420 528,416.4 547.3,410" fill="#c1004b"/><polygon points="643.3,390.8 624.1,397.1 652.8,394.3 672.1,388" fill="#cc003d"/><polygon points="768.1,371.1 748.9,377.5 777.7,376 796.9,369.7" fill="#d60031"/><polygon points="893,354.9 873.7,361.2 902.5,360.6 921.8,354.3" fill="#de0028"/><polygon points="1017.8,340.7 998.5,347 1027.3,346.6 1046.6,340.2" fill="#e5001f"/><polygon points="1142.6,326.9 1123.4,333.2 1152.2,333 1171.4,326.6" fill="#ec0017"/><polygon points="1267.4,314.7 1248.2,321 1277,321.7 1296.2,315.3" fill="#f20010"/><polygon points="1392.3,304.5 1373,310.9 1401.8,312 1421,305.7" fill="#f7000a"/><polygon points="1517.1,295.8 1497.8,302.1 1526.6,303.7 1545.9,297.4" fill="#fb0004"/><polygon points="1641.9,288.3 1622.7,294.7 1651.5,296.7 1670.7,290.4" fill="#ff0000"/><polygon points="96,602.7 76.8,609.1 105.5,575.8 124.8,569.5" fill="#6900b4"/><polygon points="220.8,507 201.6,513.3 230.3,495.6 249.6,489.2" fill="#96007e"/><polygon points="345.6,457.9 326.4,464.2 355.2,455.7 374.4,449.4" fill="#ad0063"/><polygon points="470.5,424.2 451.2,430.5 480,426.3 499.2,420" fill="#bd0050"/><polygon points="595.3,400.3 576,406.6 604.8,403.4 624.1,397.1" fill="#c90041"/><polygon points="720.1,379.3 700.9,385.6 729.6,383.8 748.9,377.5" fill="#d30035"/><polygon points="844.9,362.2 825.7,368.5 854.5,367.6 873.7,361.2" fill="#db002b"/><polygon points="969.8,347.5 950.5,353.8 979.3,353.4 998.5,347" fill="#e30022"/><polygon points="1094.6,333.5 1075.3,339.8 1104.1,339.5 1123.4,333.2" fill="#ea0019"/><polygon points="1219.4,320.5 1200.2,326.8 1228.9,327.3 1248.2,321" fill="#f00012"/><polygon points="1344.2,309.9 1325,316.2 1353.8,317.2 1373,310.9" fill="#f6000b"/><polygon points="1469.1,300.7 1449.8,307 1478.6,308.5 1497.8,302.1" fill="#fa0006"/><polygon points="1593.9,292.8 1574.6,299.1 1603.4,301 1622.7,294.7" fill="#fe0001"/><polygon points="172.8,531.9 153.6,538.2 182.3,519.7 201.6,513.3" fill="#8b008c"/><polygon points="297.6,472.3 278.4,478.6 307.1,470.5 326.4,464.2" fill="#a6006b"/><polygon points="422.4,435.8 403.2,442.1 432,436.9 451.2,430.5" fill="#b80055"/><polygon points="547.3,410 528,416.4 556.8,412.9 576,406.6" fill="#c50046"/><polygon points="672.1,388 652.8,394.3 681.6,392 700.9,385.6" fill="#d00039"/><polygon points="796.9,369.7 777.7,376 806.4,374.8 825.7,368.5" fill="#d9002e"/><polygon points="921.8,354.3 902.5,360.6 931.3,360.1 950.5,353.8" fill="#e00025"/><polygon points="1046.6,340.2 1027.3,346.6 1056.1,346.2 1075.3,339.8" fill="#e8001c"/><polygon points="1171.4,326.6 1152.2,333 1180.9,333.1 1200.2,326.8" fill="#ee0014"/><polygon points="1296.2,315.3 1277,321.7 1305.8,322.5 1325,316.2" fill="#f4000d"/><polygon points="1421,305.7 1401.8,312 1430.6,313.3 1449.8,307" fill="#f90008"/><polygon points="1545.9,297.4 1526.6,303.7 1555.4,305.4 1574.6,299.1" fill="#fd0003"/><polygon points="124.8,569.5 105.5,575.8 134.3,544.5 153.6,538.2" fill="#7c009d"/><polygon points="249.6,489.2 230.3,495.6 259.1,485 278.4,478.6" fill="#9f0073"/><polygon points="374.4,449.4 355.2,455.7 383.9,448.4 403.2,442.1" fill="#b3005c"/><polygon points="499.2,420 480,426.3 508.8,422.7 528,416.4" fill="#c1004b"/><polygon points="624.1,397.1 604.8,403.4 633.6,400.6 652.8,394.3" fill="#cc003d"/><polygon points="748.9,377.5 729.6,383.8 758.4,382.3 777.7,376" fill="#d60031"/><polygon points="873.7,361.2 854.5,367.6 883.2,366.9 902.5,360.6" fill="#de0028"/><polygon points="998.5,347 979.3,353.4 1008.1,352.9 1027.3,346.6" fill="#e5001f"/><polygon points="1123.4,333.2 1104.1,339.5 1132.9,339.3 1152.2,333" fill="#ec0017"/><polygon points="1248.2,321 1228.9,327.3 1257.7,328 1277,321.7" fill="#f20010"/><polygon points="1373,310.9 1353.8,317.2 1382.5,318.4 1401.8,312" fill="#f7000a"/><polygon points="1497.8,302.1 1478.6,308.5 1507.4,310 1526.6,303.7" fill="#fb0004"/><polygon points="1622.7,294.7 1603.4,301 1632.2,303 1651.5,296.7" fill="#ff0000"/><polygon points="76.8,609.1 57.5,615.4 86.3,582.2 105.5,575.8" fill="#6900b4"/><polygon points="201.6,513.3 182.3,519.7 211.1,501.9 230.3,495.6" fill="#96007e"/><polygon points="326.4,464.2 307.1,470.5 335.9,462 355.2,455.7" fill="#ad0063"/><polygon points="451.2,430.5 432,436.9 460.8,432.6 480,426.3" fill="#bd0050"/><polygon points="576,406.6 556.8,412.9 585.6,409.7 604.8,403.4" fill="#c90041"/><polygon points="700.9,385.6 681.6,392 710.4,390.1 729.6,383.8" fill="#d30035"/><polygon points="825.7,368.5 806.4,374.8 835.2,373.9 854.5,367.6" fill="#db002b"/><polygon points="950.5,353.8 931.3,360.1 960,359.7 979.3,353.4" fill="#e30022"/><polygon points="1075.3,339.8 1056.1,346.2 1084.9,345.9 1104.1,339.5" fill="#ea0019"/><polygon points="1200.2,326.8 1180.9,333.1 1209.7,333.6 1228.9,327.3" fill="#f00012"/><polygon points="1325,316.2 1305.8,322.5 1334.5,323.5 1353.8,317.2" fill="#f6000b"/><polygon points="1449.8,307 1430.6,313.3 1459.3,314.8 1478.6,308.5" fill="#fa0006"/><polygon points="1574.6,299.1 1555.4,305.4 1584.2,307.3 1603.4,301" fill="#fe0001"/><polygon points="153.6,538.2 134.3,544.5 163.1,526 182.3,519.7" fill="#8b008c"/><polygon points="278.4,478.6 259.1,485 287.9,476.9 307.1,470.5" fill="#a6006b"/><polygon points="403.2,442.1 383.9,448.4 412.7,443.2 432,436.9" fill="#b80055"/><polygon points="528,416.4 508.8,422.7 537.5,419.2 556.8,412.9" fill="#c50046"/><polygon points="652.8,394.3 633.6,400.6 662.4,398.3 681.6,392" fill="#d00039"/><polygon points="777.7,376 758.4,382.3 787.2,381.1 806.4,374.8" fill="#d9002e"/><polygon points="902.5,360.6 883.2,366.9 912,366.5 931.3,360.1" fill="#e00025"/><polygon points="1027.3,346.6 1008.1,352.9 1036.8,352.5 1056.1,346.2" fill="#e8001c"/><polygon points="1152.2,333 1132.9,339.3 1161.7,339.5 1180.9,333.1" fill="#ee0014"/><polygon points="1277,321.7 1257.7,328 1286.5,328.8 1305.8,322.5" fill="#f4000d"/><polygon points="1401.8,312 1382.5,318.4 1411.3,319.7 1430.6,313.3" fill="#f90008"/><polygon points="1526.6,303.7 1507.4,310 1536.1,311.8 1555.4,305.4" fill="#fd0003"/><polygon points="105.5,575.8 86.3,582.2 115,550.9 134.3,544.5" fill="#7c009d"/><polygon points="230.3,495.6 211.1,501.9 239.9,491.3 259.1,485" fill="#9f0073"/><polygon points="355.2,455.7 335.9,462 364.7,454.8 383.9,448.4" fill="#b3005c"/><polygon points="480,426.3 460.8,432.6 489.5,429 508.8,422.7" fill="#c1004b"/><polygon points="604.8,403.4 585.6,409.7 614.3,406.9 633.6,400.6" fill="#cc003d"/><polygon points="729.6,383.8 710.4,390.1 739.2,388.6 758.4,382.3" fill="#d60031"/><polygon points="854.5,367.6 835.2,373.9 864,373.2 883.2,366.9" fill="#de0028"/><polygon points="979.3,353.4 960,359.7 988.8,359.2 1008.1,352.9" fill="#e5001f"/><polygon points="1104.1,339.5 1084.9,345.9 1113.7,345.6 1132.9,339.3" fill="#ec0017"/><polygon points="1228.9,327.3 1209.7,333.6 1238.5,334.3 1257.7,328" fill="#f20010"/><polygon points="1353.8,317.2 1334.5,323.5 1363.3,324.7 1382.5,318.4" fill="#f7000a"/><polygon points="1478.6,308.5 1459.3,314.8 1488.1,316.4 1507.4,310" fill="#fb0004"/><polygon points="1603.4,301 1584.2,307.3 1613,309.3 1632.2,303" fill="#ff0000"/><polygon points="182.3,519.7 163.1,526 191.8,508.2 211.1,501.9" fill="#96007e"/><polygon points="307.1,470.5 287.9,476.9 316.7,468.3 335.9,462" fill="#ad0063"/><polygon points="432,436.9 412.7,443.2 441.5,439 460.8,432.6" fill="#bd0050"/><polygon points="556.8,412.9 537.5,419.2 566.3,416.1 585.6,409.7" fill="#c90041"/><polygon points="681.6,392 662.4,398.3 691.1,396.5 710.4,390.1" fill="#d30035"/><polygon points="806.4,374.8 787.2,381.1 816,380.2 835.2,373.9" fill="#db002b"/><polygon points="931.3,360.1 912,366.5 940.8,366 960,359.7" fill="#e30022"/><polygon points="1056.1,346.2 1036.8,352.5 1065.6,352.2 1084.9,345.9" fill="#ea0019"/><polygon points="1180.9,333.1 1161.7,339.5 1190.4,340 1209.7,333.6" fill="#f00012"/><polygon points="1305.8,322.5 1286.5,328.8 1315.3,329.9 1334.5,323.5" fill="#f6000b"/><polygon points="1430.6,313.3 1411.3,319.7 1440.1,321.1 1459.3,314.8" fill="#fa0006"/><polygon points="1555.4,305.4 1536.1,311.8 1564.9,313.6 1584.2,307.3" fill="#fe0001"/><polygon points="134.3,544.5 115,550.9 143.8,532.3 163.1,526" fill="#8b008c"/><polygon points="259.1,485 239.9,491.3 268.6,483.2 287.9,476.9" fill="#a6006b"/><polygon points="383.9,448.4 364.7,454.8 393.5,449.5 412.7,443.2" fill="#b80055"/><polygon points="508.8,422.7 489.5,429 518.3,425.6 537.5,419.2" fill="#c50046"/><polygon points="633.6,400.6 614.3,406.9 643.1,404.6 662.4,398.3" fill="#d00039"/><polygon points="758.4,382.3 739.2,388.6 767.9,387.5 787.2,381.1" fill="#d9002e"/><polygon points="883.2,366.9 864,373.2 892.8,372.8 912,366.5" fill="#e00025"/><polygon points="1008.1,352.9 988.8,359.2 1017.6,358.8 1036.8,352.5" fill="#e8001c"/><polygon points="1132.9,339.3 1113.7,345.6 1142.4,345.8 1161.7,339.5" fill="#ee0014"/><polygon points="1257.7,328 1238.5,334.3 1267.2,335.2 1286.5,328.8" fill="#f4000d"/><polygon points="1382.5,318.4 1363.3,324.7 1392.1,326 1411.3,319.7" fill="#f90008"/><polygon points="1507.4,310 1488.1,316.4 1516.9,318.1 1536.1,311.8" fill="#fd0003"/><polygon points="211.1,501.9 191.8,508.2 220.6,497.6 239.9,491.3" fill="#9f0073"/><polygon points="335.9,462 316.7,468.3 345.4,461.1 364.7,454.8" fill="#b3005c"/><polygon points="460.8,432.6 441.5,439 470.3,435.3 489.5,429" fill="#c1004b"/><polygon points="585.6,409.7 566.3,416.1 595.1,413.3 614.3,406.9" fill="#cc003d"/><polygon points="710.4,390.1 691.1,396.5 719.9,395 739.2,388.6" fill="#d60031"/><polygon points="835.2,373.9 816,380.2 844.8,379.6 864,373.2" fill="#de0028"/><polygon points="960,359.7 940.8,366 969.6,365.5 988.8,359.2" fill="#e5001f"/><polygon points="1084.9,345.9 1065.6,352.2 1094.4,351.9 1113.7,345.6" fill="#ec0017"/><polygon points="1209.7,333.6 1190.4,340 1219.2,340.7 1238.5,334.3" fill="#f20010"/><polygon points="1334.5,323.5 1315.3,329.9 1344,331 1363.3,324.7" fill="#f7000a"/><polygon points="1459.3,314.8 1440.1,321.1 1468.9,322.7 1488.1,316.4" fill="#fb0004"/><polygon points="1584.2,307.3 1564.9,313.6 1593.7,315.7 1613,309.3" fill="#ff0000"/><polygon points="163.1,526 143.8,532.3 172.6,514.6 191.8,508.2" fill="#96007e"/><polygon points="287.9,476.9 268.6,483.2 297.4,474.7 316.7,468.3" fill="#ad0063"/><polygon points="412.7,443.2 393.5,449.5 422.2,445.3 441.5,439" fill="#bd0050"/><polygon points="537.5,419.2 518.3,425.6 547.1,422.4 566.3,416.1" fill="#c90041"/><polygon points="662.4,398.3 643.1,404.6 671.9,402.8 691.1,396.5" fill="#d30035"/><polygon points="787.2,381.1 767.9,387.5 796.7,386.5 816,380.2" fill="#db002b"/><polygon points="912,366.5 892.8,372.8 921.5,372.3 940.8,366" fill="#e30022"/><polygon points="1036.8,352.5 1017.6,358.8 1046.4,358.5 1065.6,352.2" fill="#ea0019"/><polygon points="1161.7,339.5 1142.4,345.8 1171.2,346.3 1190.4,340" fill="#f00012"/><polygon points="1286.5,328.8 1267.2,335.2 1296,336.2 1315.3,329.9" fill="#f6000b"/><polygon points="1411.3,319.7 1392.1,326 1420.8,327.4 1440.1,321.1" fill="#fa0006"/><polygon points="1536.1,311.8 1516.9,318.1 1545.7,320 1564.9,313.6" fill="#fe0001"/><polygon points="239.9,491.3 220.6,497.6 249.4,489.5 268.6,483.2" fill="#a6006b"/><polygon points="364.7,454.8 345.4,461.1 374.2,455.8 393.5,449.5" fill="#b80055"/><polygon points="489.5,429 470.3,435.3 499,431.9 518.3,425.6" fill="#c50046"/><polygon points="614.3,406.9 595.1,413.3 623.9,411 643.1,404.6" fill="#d00039"/><polygon points="739.2,388.6 719.9,395 748.7,393.8 767.9,387.5" fill="#d9002e"/><polygon points="864,373.2 844.8,379.6 873.5,379.1 892.8,372.8" fill="#e00025"/><polygon points="988.8,359.2 969.6,365.5 998.3,365.1 1017.6,358.8" fill="#e8001c"/><polygon points="1113.7,345.6 1094.4,351.9 1123.2,352.1 1142.4,345.8" fill="#ee0014"/><polygon points="1238.5,334.3 1219.2,340.7 1248,341.5 1267.2,335.2" fill="#f4000d"/><polygon points="1363.3,324.7 1344,331 1372.8,332.3 1392.1,326" fill="#f90008"/><polygon points="1488.1,316.4 1468.9,322.7 1497.6,324.4 1516.9,318.1" fill="#fd0003"/><polygon points="191.8,508.2 172.6,514.6 201.4,503.9 220.6,497.6" fill="#9f0073"/><polygon points="316.7,468.3 297.4,474.7 326.2,467.4 345.4,461.1" fill="#b3005c"/><polygon points="441.5,439 422.2,445.3 451,441.7 470.3,435.3" fill="#c1004b"/><polygon points="566.3,416.1 547.1,422.4 575.8,419.6 595.1,413.3" fill="#cc003d"/><polygon points="691.1,396.5 671.9,402.8 700.7,401.3 719.9,395" fill="#d60031"/><polygon points="816,380.2 796.7,386.5 825.5,385.9 844.8,379.6" fill="#de0028"/><polygon points="940.8,366 921.5,372.3 950.3,371.9 969.6,365.5" fill="#e5001f"/><polygon points="1065.6,352.2 1046.4,358.5 1075.2,358.3 1094.4,351.9" fill="#ec0017"/><polygon points="1190.4,340 1171.2,346.3 1200,347 1219.2,340.7" fill="#f20010"/><polygon points="1315.3,329.9 1296,336.2 1324.8,337.3 1344,331" fill="#f7000a"/><polygon points="1440.1,321.1 1420.8,327.4 1449.6,329 1468.9,322.7" fill="#fb0004"/><polygon points="1564.9,313.6 1545.7,320 1574.5,322 1593.7,315.7" fill="#ff0000"/><polygon points="268.6,483.2 249.4,489.5 278.2,481 297.4,474.7" fill="#ad0063"/><polygon points="393.5,449.5 374.2,455.8 403,451.6 422.2,445.3" fill="#bd0050"/><polygon points="518.3,425.6 499,431.9 527.8,428.7 547.1,422.4" fill="#c90041"/><polygon points="643.1,404.6 623.9,411 652.6,409.1 671.9,402.8" fill="#d30035"/><polygon points="767.9,387.5 748.7,393.8 777.5,392.9 796.7,386.5" fill="#db002b"/><polygon points="892.8,372.8 873.5,379.1 902.3,378.7 921.5,372.3" fill="#e30022"/><polygon points="1017.6,358.8 998.3,365.1 1027.1,364.8 1046.4,358.5" fill="#ea0019"/><polygon points="1142.4,345.8 1123.2,352.1 1151.9,352.6 1171.2,346.3" fill="#f00012"/><polygon points="1267.2,335.2 1248,341.5 1276.8,342.5 1296,336.2" fill="#f6000b"/><polygon points="1392.1,326 1372.8,332.3 1401.6,333.8 1420.8,327.4" fill="#fa0006"/><polygon points="1516.9,318.1 1497.6,324.4 1526.4,326.3 1545.7,320" fill="#fe0001"/><polygon points="220.6,497.6 201.4,503.9 230.1,495.8 249.4,489.5" fill="#a6006b"/><polygon points="345.4,461.1 326.2,467.4 355,462.2 374.2,455.8" fill="#b80055"/><polygon points="470.3,435.3 451,441.7 479.8,438.2 499,431.9" fill="#c50046"/><polygon points="595.1,413.3 575.8,419.6 604.6,417.3 623.9,411" fill="#d00039"/><polygon points="719.9,395 700.7,401.3 729.4,400.1 748.7,393.8" fill="#d9002e"/><polygon points="844.8,379.6 825.5,385.9 854.3,385.4 873.5,379.1" fill="#e00025"/><polygon points="969.6,365.5 950.3,371.9 979.1,371.5 998.3,365.1" fill="#e8001c"/><polygon points="1094.4,351.9 1075.2,358.3 1103.9,358.4 1123.2,352.1" fill="#ee0014"/><polygon points="1219.2,340.7 1200,347 1228.8,347.8 1248,341.5" fill="#f4000d"/><polygon points="1344,331 1324.8,337.3 1353.6,338.7 1372.8,332.3" fill="#f90008"/><polygon points="1468.9,322.7 1449.6,329 1478.4,330.8 1497.6,324.4" fill="#fd0003"/><polygon points="297.4,474.7 278.2,481 306.9,473.7 326.2,467.4" fill="#b3005c"/><polygon points="422.2,445.3 403,451.6 431.8,448 451,441.7" fill="#c1004b"/><polygon points="547.1,422.4 527.8,428.7 556.6,425.9 575.8,419.6" fill="#cc003d"/><polygon points="671.9,402.8 652.6,409.1 681.4,407.6 700.7,401.3" fill="#d60031"/><polygon points="796.7,386.5 777.5,392.9 806.2,392.2 825.5,385.9" fill="#de0028"/><polygon points="921.5,372.3 902.3,378.7 931.1,378.2 950.3,371.9" fill="#e5001f"/><polygon points="1046.4,358.5 1027.1,364.8 1055.9,364.6 1075.2,358.3" fill="#ec0017"/><polygon points="1171.2,346.3 1151.9,352.6 1180.7,353.3 1200,347" fill="#f20010"/><polygon points="1296,336.2 1276.8,342.5 1305.5,343.7 1324.8,337.3" fill="#f7000a"/><polygon points="1420.8,327.4 1401.6,333.8 1430.4,335.4 1449.6,329" fill="#fb0004"/><polygon points="1545.7,320 1526.4,326.3 1555.2,328.3 1574.5,322" fill="#ff0000"/><polygon points="249.4,489.5 230.1,495.8 258.9,487.3 278.2,481" fill="#ad0063"/><polygon points="374.2,455.8 355,462.2 383.8,458 403,451.6" fill="#bd0050"/><polygon points="499,431.9 479.8,438.2 508.6,435 527.8,428.7" fill="#c90041"/><polygon points="623.9,411 604.6,417.3 633.4,415.4 652.6,409.1" fill="#d30035"/><polygon points="748.7,393.8 729.4,400.1 758.2,399.2 777.5,392.9" fill="#db002b"/><polygon points="873.5,379.1 854.3,385.4 883,385 902.3,378.7" fill="#e30022"/><polygon points="998.3,365.1 979.1,371.5 1007.9,371.2 1027.1,364.8" fill="#ea0019"/><polygon points="1123.2,352.1 1103.9,358.4 1132.7,359 1151.9,352.6" fill="#f00012"/><polygon points="1248,341.5 1228.8,347.8 1257.5,348.8 1276.8,342.5" fill="#f6000b"/><polygon points="1372.8,332.3 1353.6,338.7 1382.3,340.1 1401.6,333.8" fill="#fa0006"/><polygon points="1497.6,324.4 1478.4,330.8 1507.2,332.6 1526.4,326.3" fill="#fe0001"/><polygon points="326.2,467.4 306.9,473.7 335.7,468.5 355,462.2" fill="#b80055"/><polygon points="451,441.7 431.8,448 460.5,444.6 479.8,438.2" fill="#c50046"/><polygon points="575.8,419.6 556.6,425.9 585.4,423.6 604.6,417.3" fill="#d00039"/><polygon points="700.7,401.3 681.4,407.6 710.2,406.4 729.4,400.1" fill="#d9002e"/><polygon points="825.5,385.9 806.2,392.2 835,391.8 854.3,385.4" fill="#e00025"/><polygon points="950.3,371.9 931.1,378.2 959.8,377.8 979.1,371.5" fill="#e8001c"/><polygon points="1075.2,358.3 1055.9,364.6 1084.7,364.8 1103.9,358.4" fill="#ee0014"/><polygon points="1200,347 1180.7,353.3 1209.5,354.2 1228.8,347.8" fill="#f4000d"/><polygon points="1324.8,337.3 1305.5,343.7 1334.3,345 1353.6,338.7" fill="#f90008"/><polygon points="1449.6,329 1430.4,335.4 1459.1,337.1 1478.4,330.8" fill="#fd0003"/><polygon points="278.2,481 258.9,487.3 287.7,480.1 306.9,473.7" fill="#b3005c"/><polygon points="403,451.6 383.8,458 412.5,454.3 431.8,448" fill="#c1004b"/><polygon points="527.8,428.7 508.6,435 537.3,432.3 556.6,425.9" fill="#cc003d"/><polygon points="652.6,409.1 633.4,415.4 662.2,414 681.4,407.6" fill="#d60031"/><polygon points="777.5,392.9 758.2,399.2 787,398.6 806.2,392.2" fill="#de0028"/><polygon points="902.3,378.7 883,385 911.8,384.5 931.1,378.2" fill="#e5001f"/><polygon points="1027.1,364.8 1007.9,371.2 1036.7,370.9 1055.9,364.6" fill="#ec0017"/><polygon points="1151.9,352.6 1132.7,359 1161.5,359.6 1180.7,353.3" fill="#f20010"/><polygon points="1276.8,342.5 1257.5,348.8 1286.3,350 1305.5,343.7" fill="#f7000a"/><polygon points="1401.6,333.8 1382.3,340.1 1411.1,341.7 1430.4,335.4" fill="#fb0004"/><polygon points="1526.4,326.3 1507.2,332.6 1536,334.6 1555.2,328.3" fill="#ff0000"/><polygon points="355,462.2 335.7,468.5 364.5,464.3 383.8,458" fill="#bd0050"/><polygon points="479.8,438.2 460.5,444.6 489.3,441.4 508.6,435" fill="#c90041"/><polygon points="604.6,417.3 585.4,423.6 614.1,421.8 633.4,415.4" fill="#d30035"/><polygon points="729.4,400.1 710.2,406.4 739,405.5 758.2,399.2" fill="#db002b"/><polygon points="854.3,385.4 835,391.8 863.8,391.3 883,385" fill="#e30022"/><polygon points="979.1,371.5 959.8,377.8 988.6,377.5 1007.9,371.2" fill="#ea0019"/><polygon points="1103.9,358.4 1084.7,364.8 1113.4,365.3 1132.7,359" fill="#f00012"/><polygon points="1228.8,347.8 1209.5,354.2 1238.3,355.2 1257.5,348.8" fill="#f6000b"/><polygon points="1353.6,338.7 1334.3,345 1363.1,346.4 1382.3,340.1" fill="#fa0006"/><polygon points="1478.4,330.8 1459.1,337.1 1487.9,339 1507.2,332.6" fill="#fe0001"/><polygon points="306.9,473.7 287.7,480.1 316.5,474.8 335.7,468.5" fill="#b80055"/><polygon points="431.8,448 412.5,454.3 441.3,450.9 460.5,444.6" fill="#c50046"/><polygon points="556.6,425.9 537.3,432.3 566.1,429.9 585.4,423.6" fill="#d00039"/><polygon points="681.4,407.6 662.2,414 690.9,412.8 710.2,406.4" fill="#d9002e"/><polygon points="806.2,392.2 787,398.6 815.8,398.1 835,391.8" fill="#e00025"/><polygon points="931.1,378.2 911.8,384.5 940.6,384.1 959.8,377.8" fill="#e8001c"/><polygon points="1055.9,364.6 1036.7,370.9 1065.4,371.1 1084.7,364.8" fill="#ee0014"/><polygon points="1180.7,353.3 1161.5,359.6 1190.2,360.5 1209.5,354.2" fill="#f4000d"/><polygon points="1305.5,343.7 1286.3,350 1315.1,351.3 1334.3,345" fill="#f90008"/><polygon points="1430.4,335.4 1411.1,341.7 1439.9,343.4 1459.1,337.1" fill="#fd0003"/><polygon points="383.8,458 364.5,464.3 393.3,460.7 412.5,454.3" fill="#c1004b"/><polygon points="508.6,435 489.3,441.4 518.1,438.6 537.3,432.3" fill="#cc003d"/><polygon points="633.4,415.4 614.1,421.8 642.9,420.3 662.2,414" fill="#d60031"/><polygon points="758.2,399.2 739,405.5 767.8,404.9 787,398.6" fill="#de0028"/><polygon points="883,385 863.8,391.3 892.6,390.9 911.8,384.5" fill="#e5001f"/><polygon points="1007.9,371.2 988.6,377.5 1017.4,377.3 1036.7,370.9" fill="#ec0017"/><polygon points="1132.7,359 1113.4,365.3 1142.2,366 1161.5,359.6" fill="#f20010"/><polygon points="1257.5,348.8 1238.3,355.2 1267,356.3 1286.3,350" fill="#f7000a"/><polygon points="1382.3,340.1 1363.1,346.4 1391.9,348 1411.1,341.7" fill="#fb0004"/><polygon points="1507.2,332.6 1487.9,339 1516.7,341 1536,334.6" fill="#ff0000"/><polygon points="335.7,468.5 316.5,474.8 345.2,470.6 364.5,464.3" fill="#bd0050"/><polygon points="460.5,444.6 441.3,450.9 470.1,447.7 489.3,441.4" fill="#c90041"/><polygon points="585.4,423.6 566.1,429.9 594.9,428.1 614.1,421.8" fill="#d30035"/><polygon points="710.2,406.4 690.9,412.8 719.7,411.8 739,405.5" fill="#db002b"/><polygon points="835,391.8 815.8,398.1 844.5,397.7 863.8,391.3" fill="#e30022"/><polygon points="959.8,377.8 940.6,384.1 969.4,383.8 988.6,377.5" fill="#ea0019"/><polygon points="1084.7,364.8 1065.4,371.1 1094.2,371.6 1113.4,365.3" fill="#f00012"/><polygon points="1209.5,354.2 1190.2,360.5 1219,361.5 1238.3,355.2" fill="#f6000b"/><polygon points="1334.3,345 1315.1,351.3 1343.8,352.8 1363.1,346.4" fill="#fa0006"/><polygon points="1459.1,337.1 1439.9,343.4 1468.7,345.3 1487.9,339" fill="#fe0001"/><polygon points="412.5,454.3 393.3,460.7 422,457.2 441.3,450.9" fill="#c50046"/><polygon points="537.3,432.3 518.1,438.6 546.9,436.3 566.1,429.9" fill="#d00039"/><polygon points="662.2,414 642.9,420.3 671.7,419.1 690.9,412.8" fill="#d9002e"/><polygon points="787,398.6 767.8,404.9 796.5,404.4 815.8,398.1" fill="#e00025"/><polygon points="911.8,384.5 892.6,390.9 921.3,390.4 940.6,384.1" fill="#e8001c"/><polygon points="1036.7,370.9 1017.4,377.3 1046.2,377.4 1065.4,371.1" fill="#ee0014"/><polygon points="1161.5,359.6 1142.2,366 1171,366.8 1190.2,360.5" fill="#f4000d"/><polygon points="1286.3,350 1267,356.3 1295.8,357.6 1315.1,351.3" fill="#f90008"/><polygon points="1411.1,341.7 1391.9,348 1420.6,349.7 1439.9,343.4" fill="#fd0003"/><polygon points="364.5,464.3 345.2,470.6 374,467 393.3,460.7" fill="#c1004b"/><polygon points="489.3,441.4 470.1,447.7 498.8,444.9 518.1,438.6" fill="#cc003d"/><polygon points="614.1,421.8 594.9,428.1 623.7,426.6 642.9,420.3" fill="#d60031"/><polygon points="739,405.5 719.7,411.8 748.5,411.2 767.8,404.9" fill="#de0028"/><polygon points="863.8,391.3 844.5,397.7 873.3,397.2 892.6,390.9" fill="#e5001f"/><polygon points="988.6,377.5 969.4,383.8 998.1,383.6 1017.4,377.3" fill="#ec0017"/><polygon points="1113.4,365.3 1094.2,371.6 1123,372.3 1142.2,366" fill="#f20010"/><polygon points="1238.3,355.2 1219,361.5 1247.8,362.7 1267,356.3" fill="#f7000a"/><polygon points="1363.1,346.4 1343.8,352.8 1372.6,354.3 1391.9,348" fill="#fb0004"/><polygon points="1487.9,339 1468.7,345.3 1497.5,347.3 1516.7,341" fill="#ff0000"/><polygon points="441.3,450.9 422,457.2 450.8,454 470.1,447.7" fill="#c90041"/><polygon points="566.1,429.9 546.9,436.3 575.6,434.4 594.9,428.1" fill="#d30035"/><polygon points="690.9,412.8 671.7,419.1 700.5,418.2 719.7,411.8" fill="#db002b"/><polygon points="815.8,398.1 796.5,404.4 825.3,404 844.5,397.7" fill="#e30022"/><polygon points="940.6,384.1 921.3,390.4 950.1,390.2 969.4,383.8" fill="#ea0019"/><polygon points="1065.4,371.1 1046.2,377.4 1074.9,377.9 1094.2,371.6" fill="#f00012"/><polygon points="1190.2,360.5 1171,366.8 1199.8,367.8 1219,361.5" fill="#f6000b"/><polygon points="1315.1,351.3 1295.8,357.6 1324.6,359.1 1343.8,352.8" fill="#fa0006"/><polygon points="1439.9,343.4 1420.6,349.7 1449.4,351.6 1468.7,345.3" fill="#fe0001"/><polygon points="393.3,460.7 374,467 402.8,463.5 422,457.2" fill="#c50046"/><polygon points="518.1,438.6 498.8,444.9 527.6,442.6 546.9,436.3" fill="#d00039"/><polygon points="642.9,420.3 623.7,426.6 652.4,425.4 671.7,419.1" fill="#d9002e"/><polygon points="767.8,404.9 748.5,411.2 777.3,410.8 796.5,404.4" fill="#e00025"/><polygon points="892.6,390.9 873.3,397.2 902.1,396.8 921.3,390.4" fill="#e8001c"/><polygon points="1017.4,377.3 998.1,383.6 1026.9,383.7 1046.2,377.4" fill="#ee0014"/><polygon points="1142.2,366 1123,372.3 1151.8,373.1 1171,366.8" fill="#f4000d"/><polygon points="1267,356.3 1247.8,362.7 1276.6,364 1295.8,357.6" fill="#f90008"/><polygon points="1391.9,348 1372.6,354.3 1401.4,356.1 1420.6,349.7" fill="#fd0003"/><polygon points="470.1,447.7 450.8,454 479.6,451.2 498.8,444.9" fill="#cc003d"/><polygon points="594.9,428.1 575.6,434.4 604.4,432.9 623.7,426.6" fill="#d60031"/><polygon points="719.7,411.8 700.5,418.2 729.2,417.5 748.5,411.2" fill="#de0028"/><polygon points="844.5,397.7 825.3,404 854.1,403.5 873.3,397.2" fill="#e5001f"/><polygon points="969.4,383.8 950.1,390.2 978.9,389.9 998.1,383.6" fill="#ec0017"/><polygon points="1094.2,371.6 1074.9,377.9 1103.7,378.6 1123,372.3" fill="#f20010"/><polygon points="1219,361.5 1199.8,367.8 1228.5,369 1247.8,362.7" fill="#f7000a"/><polygon points="1343.8,352.8 1324.6,359.1 1353.4,360.7 1372.6,354.3" fill="#fb0004"/><polygon points="1468.7,345.3 1449.4,351.6 1478.2,353.6 1497.5,347.3" fill="#ff0000"/><polygon points="422,457.2 402.8,463.5 431.6,460.4 450.8,454" fill="#c90041"/><polygon points="546.9,436.3 527.6,442.6 556.4,440.7 575.6,434.4" fill="#d30035"/><polygon points="671.7,419.1 652.4,425.4 681.2,424.5 700.5,418.2" fill="#db002b"/><polygon points="796.5,404.4 777.3,410.8 806,410.3 825.3,404" fill="#e30022"/><polygon points="921.3,390.4 902.1,396.8 930.9,396.5 950.1,390.2" fill="#ea0019"/><polygon points="1046.2,377.4 1026.9,383.7 1055.7,384.3 1074.9,377.9" fill="#f00012"/><polygon points="1171,366.8 1151.8,373.1 1180.5,374.2 1199.8,367.8" fill="#f6000b"/><polygon points="1295.8,357.6 1276.6,364 1305.3,365.4 1324.6,359.1" fill="#fa0006"/><polygon points="1420.6,349.7 1401.4,356.1 1430.2,357.9 1449.4,351.6" fill="#fe0001"/><polygon points="498.8,444.9 479.6,451.2 508.4,448.9 527.6,442.6" fill="#d00039"/><polygon points="623.7,426.6 604.4,432.9 633.2,431.8 652.4,425.4" fill="#d9002e"/><polygon points="748.5,411.2 729.2,417.5 758,417.1 777.3,410.8" fill="#e00025"/><polygon points="873.3,397.2 854.1,403.5 882.8,403.1 902.1,396.8" fill="#e8001c"/><polygon points="998.1,383.6 978.9,389.9 1007.7,390.1 1026.9,383.7" fill="#ee0014"/><polygon points="1123,372.3 1103.7,378.6 1132.5,379.5 1151.8,373.1" fill="#f4000d"/><polygon points="1247.8,362.7 1228.5,369 1257.3,370.3 1276.6,364" fill="#f90008"/><polygon points="1372.6,354.3 1353.4,360.7 1382.1,362.4 1401.4,356.1" fill="#fd0003"/><polygon points="450.8,454 431.6,460.4 460.3,457.6 479.6,451.2" fill="#cc003d"/><polygon points="575.6,434.4 556.4,440.7 585.2,439.3 604.4,432.9" fill="#d60031"/><polygon points="700.5,418.2 681.2,424.5 710,423.9 729.2,417.5" fill="#de0028"/><polygon points="825.3,404 806,410.3 834.8,409.8 854.1,403.5" fill="#e5001f"/><polygon points="950.1,390.2 930.9,396.5 959.6,396.2 978.9,389.9" fill="#ec0017"/><polygon points="1074.9,377.9 1055.7,384.3 1084.5,384.9 1103.7,378.6" fill="#f20010"/><polygon points="1199.8,367.8 1180.5,374.2 1209.3,375.3 1228.5,369" fill="#f7000a"/><polygon points="1324.6,359.1 1305.3,365.4 1334.1,367 1353.4,360.7" fill="#fb0004"/><polygon points="1449.4,351.6 1430.2,357.9 1459,360 1478.2,353.6" fill="#ff0000"/><polygon points="527.6,442.6 508.4,448.9 537.1,447.1 556.4,440.7" fill="#d30035"/><polygon points="652.4,425.4 633.2,431.8 662,430.8 681.2,424.5" fill="#db002b"/><polygon points="777.3,410.8 758,417.1 786.8,416.6 806,410.3" fill="#e30022"/><polygon points="902.1,396.8 882.8,403.1 911.6,402.8 930.9,396.5" fill="#ea0019"/><polygon points="1026.9,383.7 1007.7,390.1 1036.4,390.6 1055.7,384.3" fill="#f00012"/><polygon points="1151.8,373.1 1132.5,379.5 1161.3,380.5 1180.5,374.2" fill="#f6000b"/><polygon points="1276.6,364 1257.3,370.3 1286.1,371.7 1305.3,365.4" fill="#fa0006"/><polygon points="1401.4,356.1 1382.1,362.4 1410.9,364.3 1430.2,357.9" fill="#fe0001"/><polygon points="479.6,451.2 460.3,457.6 489.1,455.2 508.4,448.9" fill="#d00039"/><polygon points="604.4,432.9 585.2,439.3 613.9,438.1 633.2,431.8" fill="#d9002e"/><polygon points="729.2,417.5 710,423.9 738.8,423.4 758,417.1" fill="#e00025"/><polygon points="854.1,403.5 834.8,409.8 863.6,409.4 882.8,403.1" fill="#e8001c"/><polygon points="978.9,389.9 959.6,396.2 988.4,396.4 1007.7,390.1" fill="#ee0014"/><polygon points="1103.7,378.6 1084.5,384.9 1113.2,385.8 1132.5,379.5" fill="#f4000d"/><polygon points="1228.5,369 1209.3,375.3 1238.1,376.6 1257.3,370.3" fill="#f90008"/><polygon points="1353.4,360.7 1334.1,367 1362.9,368.7 1382.1,362.4" fill="#fd0003"/><polygon points="556.4,440.7 537.1,447.1 565.9,445.6 585.2,439.3" fill="#d60031"/><polygon points="681.2,424.5 662,430.8 690.8,430.2 710,423.9" fill="#de0028"/><polygon points="806,410.3 786.8,416.6 815.6,416.2 834.8,409.8" fill="#e5001f"/><polygon points="930.9,396.5 911.6,402.8 940.4,402.6 959.6,396.2" fill="#ec0017"/><polygon points="1055.7,384.3 1036.4,390.6 1065.2,391.3 1084.5,384.9" fill="#f20010"/><polygon points="1180.5,374.2 1161.3,380.5 1190,381.6 1209.3,375.3" fill="#f7000a"/><polygon points="1305.3,365.4 1286.1,371.7 1314.9,373.3 1334.1,367" fill="#fb0004"/><polygon points="1430.2,357.9 1410.9,364.3 1439.7,366.3 1459,360" fill="#ff0000"/><polygon points="508.4,448.9 489.1,455.2 517.9,453.4 537.1,447.1" fill="#d30035"/><polygon points="633.2,431.8 613.9,438.1 642.7,437.2 662,430.8" fill="#db002b"/><polygon points="758,417.1 738.8,423.4 767.5,423 786.8,416.6" fill="#e30022"/><polygon points="882.8,403.1 863.6,409.4 892.4,409.1 911.6,402.8" fill="#ea0019"/><polygon points="1007.7,390.1 988.4,396.4 1017.2,396.9 1036.4,390.6" fill="#f00012"/><polygon points="1132.5,379.5 1113.2,385.8 1142,386.8 1161.3,380.5" fill="#f6000b"/><polygon points="1257.3,370.3 1238.1,376.6 1266.8,378.1 1286.1,371.7" fill="#fa0006"/><polygon points="1382.1,362.4 1362.9,368.7 1391.7,370.6 1410.9,364.3" fill="#fe0001"/><polygon points="585.2,439.3 565.9,445.6 594.7,444.4 613.9,438.1" fill="#d9002e"/><polygon points="710,423.9 690.8,430.2 719.5,429.7 738.8,423.4" fill="#e00025"/><polygon points="834.8,409.8 815.6,416.2 844.3,415.8 863.6,409.4" fill="#e8001c"/><polygon points="959.6,396.2 940.4,402.6 969.2,402.7 988.4,396.4" fill="#ee0014"/><polygon points="1084.5,384.9 1065.2,391.3 1094,392.1 1113.2,385.8" fill="#f4000d"/><polygon points="1209.3,375.3 1190,381.6 1218.8,382.9 1238.1,376.6" fill="#f90008"/><polygon points="1334.1,367 1314.9,373.3 1343.6,375 1362.9,368.7" fill="#fd0003"/><polygon points="537.1,447.1 517.9,453.4 546.7,451.9 565.9,445.6" fill="#d60031"/><polygon points="662,430.8 642.7,437.2 671.5,436.5 690.8,430.2" fill="#de0028"/><polygon points="786.8,416.6 767.5,423 796.3,422.5 815.6,416.2" fill="#e5001f"/><polygon points="911.6,402.8 892.4,409.1 921.1,408.9 940.4,402.6" fill="#ec0017"/><polygon points="1036.4,390.6 1017.2,396.9 1046,397.6 1065.2,391.3" fill="#f20010"/><polygon points="1161.3,380.5 1142,386.8 1170.8,388 1190,381.6" fill="#f7000a"/><polygon points="1286.1,371.7 1266.8,378.1 1295.6,379.6 1314.9,373.3" fill="#fb0004"/><polygon points="1410.9,364.3 1391.7,370.6 1420.5,372.6 1439.7,366.3" fill="#ff0000"/><polygon points="613.9,438.1 594.7,444.4 623.5,443.5 642.7,437.2" fill="#db002b"/><polygon points="738.8,423.4 719.5,429.7 748.3,429.3 767.5,423" fill="#e30022"/><polygon points="863.6,409.4 844.3,415.8 873.1,415.5 892.4,409.1" fill="#ea0019"/><polygon points="988.4,396.4 969.2,402.7 997.9,403.2 1017.2,396.9" fill="#f00012"/><polygon points="1113.2,385.8 1094,392.1 1122.8,393.1 1142,386.8" fill="#f6000b"/><polygon points="1238.1,376.6 1218.8,382.9 1247.6,384.4 1266.8,378.1" fill="#fa0006"/><polygon points="1362.9,368.7 1343.6,375 1372.4,376.9 1391.7,370.6" fill="#fe0001"/><polygon points="565.9,445.6 546.7,451.9 575.4,450.7 594.7,444.4" fill="#d9002e"/><polygon points="690.8,430.2 671.5,436.5 700.3,436.1 719.5,429.7" fill="#e00025"/><polygon points="815.6,416.2 796.3,422.5 825.1,422.1 844.3,415.8" fill="#e8001c"/><polygon points="940.4,402.6 921.1,408.9 949.9,409.1 969.2,402.7" fill="#ee0014"/><polygon points="1065.2,391.3 1046,397.6 1074.8,398.5 1094,392.1" fill="#f4000d"/><polygon points="1190,381.6 1170.8,388 1199.6,389.3 1218.8,382.9" fill="#f90008"/><polygon points="1314.9,373.3 1295.6,379.6 1324.4,381.4 1343.6,375" fill="#fd0003"/><polygon points="642.7,437.2 623.5,443.5 652.2,442.9 671.5,436.5" fill="#de0028"/><polygon points="767.5,423 748.3,429.3 777.1,428.8 796.3,422.5" fill="#e5001f"/><polygon points="892.4,409.1 873.1,415.5 901.9,415.2 921.1,408.9" fill="#ec0017"/><polygon points="1017.2,396.9 997.9,403.2 1026.7,403.9 1046,397.6" fill="#f20010"/><polygon points="1142,386.8 1122.8,393.1 1151.5,394.3 1170.8,388" fill="#f7000a"/><polygon points="1266.8,378.1 1247.6,384.4 1276.4,386 1295.6,379.6" fill="#fb0004"/><polygon points="1391.7,370.6 1372.4,376.9 1401.2,378.9 1420.5,372.6" fill="#ff0000"/><polygon points="594.7,444.4 575.4,450.7 604.2,449.8 623.5,443.5" fill="#db002b"/><polygon points="719.5,429.7 700.3,436.1 729,435.6 748.3,429.3" fill="#e30022"/><polygon points="844.3,415.8 825.1,422.1 853.9,421.8 873.1,415.5" fill="#ea0019"/><polygon points="969.2,402.7 949.9,409.1 978.7,409.6 997.9,403.2" fill="#f00012"/><polygon points="1094,392.1 1074.8,398.5 1103.5,399.5 1122.8,393.1" fill="#f6000b"/><polygon points="1218.8,382.9 1199.6,389.3 1228.3,390.7 1247.6,384.4" fill="#fa0006"/><polygon points="1343.6,375 1324.4,381.4 1353.2,383.2 1372.4,376.9" fill="#fe0001"/><polygon points="671.5,436.5 652.2,442.9 681,442.4 700.3,436.1" fill="#e00025"/><polygon points="796.3,422.5 777.1,428.8 805.8,428.4 825.1,422.1" fill="#e8001c"/><polygon points="921.1,408.9 901.9,415.2 930.7,415.4 949.9,409.1" fill="#ee0014"/><polygon points="1046,397.6 1026.7,403.9 1055.5,404.8 1074.8,398.5" fill="#f4000d"/><polygon points="1170.8,388 1151.5,394.3 1180.3,395.6 1199.6,389.3" fill="#f90008"/><polygon points="1295.6,379.6 1276.4,386 1305.1,387.7 1324.4,381.4" fill="#fd0003"/><polygon points="623.5,443.5 604.2,449.8 633,449.2 652.2,442.9" fill="#de0028"/><polygon points="748.3,429.3 729,435.6 757.8,435.1 777.1,428.8" fill="#e5001f"/><polygon points="873.1,415.5 853.9,421.8 882.6,421.5 901.9,415.2" fill="#ec0017"/><polygon points="997.9,403.2 978.7,409.6 1007.5,410.3 1026.7,403.9" fill="#f20010"/><polygon points="1122.8,393.1 1103.5,399.5 1132.3,400.6 1151.5,394.3" fill="#f7000a"/><polygon points="1247.6,384.4 1228.3,390.7 1257.1,392.3 1276.4,386" fill="#fb0004"/><polygon points="1372.4,376.9 1353.2,383.2 1382,385.3 1401.2,378.9" fill="#ff0000"/><polygon points="700.3,436.1 681,442.4 709.8,441.9 729,435.6" fill="#e30022"/><polygon points="825.1,422.1 805.8,428.4 834.6,428.1 853.9,421.8" fill="#ea0019"/><polygon points="949.9,409.1 930.7,415.4 959.4,415.9 978.7,409.6" fill="#f00012"/><polygon points="1074.8,398.5 1055.5,404.8 1084.3,405.8 1103.5,399.5" fill="#f6000b"/><polygon points="1199.6,389.3 1180.3,395.6 1209.1,397 1228.3,390.7" fill="#fa0006"/><polygon points="1324.4,381.4 1305.1,387.7 1333.9,389.6 1353.2,383.2" fill="#fe0001"/><polygon points="652.2,442.9 633,449.2 661.8,448.7 681,442.4" fill="#e00025"/><polygon points="777.1,428.8 757.8,435.1 786.6,434.7 805.8,428.4" fill="#e8001c"/><polygon points="901.9,415.2 882.6,421.5 911.4,421.7 930.7,415.4" fill="#ee0014"/><polygon points="1026.7,403.9 1007.5,410.3 1036.2,411.1 1055.5,404.8" fill="#f4000d"/><polygon points="1151.5,394.3 1132.3,400.6 1161.1,401.9 1180.3,395.6" fill="#f90008"/><polygon points="1276.4,386 1257.1,392.3 1285.9,394 1305.1,387.7" fill="#fd0003"/><polygon points="729,435.6 709.8,441.9 738.6,441.5 757.8,435.1" fill="#e5001f"/><polygon points="853.9,421.8 834.6,428.1 863.4,427.9 882.6,421.5" fill="#ec0017"/><polygon points="978.7,409.6 959.4,415.9 988.2,416.6 1007.5,410.3" fill="#f20010"/><polygon points="1103.5,399.5 1084.3,405.8 1113,406.9 1132.3,400.6" fill="#f7000a"/><polygon points="1228.3,390.7 1209.1,397 1237.9,398.6 1257.1,392.3" fill="#fb0004"/><polygon points="1353.2,383.2 1333.9,389.6 1362.7,391.6 1382,385.3" fill="#ff0000"/><polygon points="681,442.4 661.8,448.7 690.5,448.3 709.8,441.9" fill="#e30022"/><polygon points="805.8,428.4 786.6,434.7 815.4,434.4 834.6,428.1" fill="#ea0019"/><polygon points="930.7,415.4 911.4,421.7 940.2,422.2 959.4,415.9" fill="#f00012"/><polygon points="1055.5,404.8 1036.2,411.1 1065,412.1 1084.3,405.8" fill="#f6000b"/><polygon points="1180.3,395.6 1161.1,401.9 1189.8,403.4 1209.1,397" fill="#fa0006"/><polygon points="1305.1,387.7 1285.9,394 1314.7,395.9 1333.9,389.6" fill="#fe0001"/><polygon points="757.8,435.1 738.6,441.5 767.3,441.1 786.6,434.7" fill="#e8001c"/><polygon points="882.6,421.5 863.4,427.9 892.2,428 911.4,421.7" fill="#ee0014"/><polygon points="1007.5,410.3 988.2,416.6 1017,417.4 1036.2,411.1" fill="#f4000d"/><polygon points="1132.3,400.6 1113,406.9 1141.8,408.3 1161.1,401.9" fill="#f90008"/><polygon points="1257.1,392.3 1237.9,398.6 1266.6,400.4 1285.9,394" fill="#fd0003"/><polygon points="709.8,441.9 690.5,448.3 719.3,447.8 738.6,441.5" fill="#e5001f"/><polygon points="834.6,428.1 815.4,434.4 844.1,434.2 863.4,427.9" fill="#ec0017"/><polygon points="959.4,415.9 940.2,422.2 969,422.9 988.2,416.6" fill="#f20010"/><polygon points="1084.3,405.8 1065,412.1 1093.8,413.3 1113,406.9" fill="#f7000a"/><polygon points="1209.1,397 1189.8,403.4 1218.6,405 1237.9,398.6" fill="#fb0004"/><polygon points="1333.9,389.6 1314.7,395.9 1343.5,397.9 1362.7,391.6" fill="#ff0000"/><polygon points="786.6,434.7 767.3,441.1 796.1,440.8 815.4,434.4" fill="#ea0019"/><polygon points="911.4,421.7 892.2,428 920.9,428.6 940.2,422.2" fill="#f00012"/><polygon points="1036.2,411.1 1017,417.4 1045.8,418.4 1065,412.1" fill="#f6000b"/><polygon points="1161.1,401.9 1141.8,408.3 1170.6,409.7 1189.8,403.4" fill="#fa0006"/><polygon points="1285.9,394 1266.6,400.4 1295.4,402.2 1314.7,395.9" fill="#fe0001"/><polygon points="738.6,441.5 719.3,447.8 748.1,447.4 767.3,441.1" fill="#e8001c"/><polygon points="863.4,427.9 844.1,434.2 872.9,434.4 892.2,428" fill="#ee0014"/><polygon points="988.2,416.6 969,422.9 997.8,423.8 1017,417.4" fill="#f4000d"/><polygon points="1113,406.9 1093.8,413.3 1122.6,414.6 1141.8,408.3" fill="#f90008"/><polygon points="1237.9,398.6 1218.6,405 1247.4,406.7 1266.6,400.4" fill="#fd0003"/><polygon points="815.4,434.4 796.1,440.8 824.9,440.5 844.1,434.2" fill="#ec0017"/><polygon points="940.2,422.2 920.9,428.6 949.7,429.2 969,422.9" fill="#f20010"/><polygon points="1065,412.1 1045.8,418.4 1074.5,419.6 1093.8,413.3" fill="#f7000a"/><polygon points="1189.8,403.4 1170.6,409.7 1199.4,411.3 1218.6,405" fill="#fb0004"/><polygon points="1314.7,395.9 1295.4,402.2 1324.2,404.2 1343.5,397.9" fill="#ff0000"/><polygon points="767.3,441.1 748.1,447.4 776.9,447.1 796.1,440.8" fill="#ea0019"/><polygon points="892.2,428 872.9,434.4 901.7,434.9 920.9,428.6" fill="#f00012"/><polygon points="1017,417.4 997.8,423.8 1026.5,424.8 1045.8,418.4" fill="#f6000b"/><polygon points="1141.8,408.3 1122.6,414.6 1151.3,416 1170.6,409.7" fill="#fa0006"/><polygon points="1266.6,400.4 1247.4,406.7 1276.2,408.6 1295.4,402.2" fill="#fe0001"/><polygon points="844.1,434.2 824.9,440.5 853.7,440.7 872.9,434.4" fill="#ee0014"/><polygon points="969,422.9 949.7,429.2 978.5,430.1 997.8,423.8" fill="#f4000d"/><polygon points="1093.8,413.3 1074.5,419.6 1103.3,420.9 1122.6,414.6" fill="#f90008"/><polygon points="1218.6,405 1199.4,411.3 1228.1,413 1247.4,406.7" fill="#fd0003"/><polygon points="796.1,440.8 776.9,447.1 805.6,446.9 824.9,440.5" fill="#ec0017"/><polygon points="920.9,428.6 901.7,434.9 930.5,435.6 949.7,429.2" fill="#f20010"/><polygon points="1045.8,418.4 1026.5,424.8 1055.3,425.9 1074.5,419.6" fill="#f7000a"/><polygon points="1170.6,409.7 1151.3,416 1180.1,417.6 1199.4,411.3" fill="#fb0004"/><polygon points="1295.4,402.2 1276.2,408.6 1305,410.6 1324.2,404.2" fill="#ff0000"/><polygon points="872.9,434.4 853.7,440.7 882.4,441.2 901.7,434.9" fill="#f00012"/><polygon points="997.8,423.8 978.5,430.1 1007.3,431.1 1026.5,424.8" fill="#f6000b"/><polygon points="1122.6,414.6 1103.3,420.9 1132.1,422.4 1151.3,416" fill="#fa0006"/><polygon points="1247.4,406.7 1228.1,413 1256.9,414.9 1276.2,408.6" fill="#fe0001"/><polygon points="824.9,440.5 805.6,446.9 834.4,447 853.7,440.7" fill="#ee0014"/><polygon points="949.7,429.2 930.5,435.6 959.2,436.4 978.5,430.1" fill="#f4000d"/><polygon points="1074.5,419.6 1055.3,425.9 1084.1,427.2 1103.3,420.9" fill="#f90008"/><polygon points="1199.4,411.3 1180.1,417.6 1208.9,419.3 1228.1,413" fill="#fd0003"/><polygon points="901.7,434.9 882.4,441.2 911.2,441.9 930.5,435.6" fill="#f20010"/><polygon points="1026.5,424.8 1007.3,431.1 1036,432.3 1055.3,425.9" fill="#f7000a"/><polygon points="1151.3,416 1132.1,422.4 1160.9,423.9 1180.1,417.6" fill="#fb0004"/><polygon points="1276.2,408.6 1256.9,414.9 1285.7,416.9 1305,410.6" fill="#ff0000"/><polygon points="853.7,440.7 834.4,447 863.2,447.5 882.4,441.2" fill="#f00012"/><polygon points="978.5,430.1 959.2,436.4 988,437.4 1007.3,431.1" fill="#f6000b"/><polygon points="1103.3,420.9 1084.1,427.2 1112.8,428.7 1132.1,422.4" fill="#fa0006"/><polygon points="1228.1,413 1208.9,419.3 1237.7,421.2 1256.9,414.9" fill="#fe0001"/><polygon points="930.5,435.6 911.2,441.9 940,442.7 959.2,436.4" fill="#f4000d"/><polygon points="1055.3,425.9 1036,432.3 1064.8,433.6 1084.1,427.2" fill="#f90008"/><polygon points="1180.1,417.6 1160.9,423.9 1189.6,425.7 1208.9,419.3" fill="#fd0003"/><polygon points="882.4,441.2 863.2,447.5 892,448.2 911.2,441.9" fill="#f20010"/><polygon points="1007.3,431.1 988,437.4 1016.8,438.6 1036,432.3" fill="#f7000a"/><polygon points="1132.1,422.4 1112.8,428.7 1141.6,430.3 1160.9,423.9" fill="#fb0004"/><polygon points="1256.9,414.9 1237.7,421.2 1266.5,423.2 1285.7,416.9" fill="#ff0000"/><polygon points="959.2,436.4 940,442.7 968.8,443.8 988,437.4" fill="#f6000b"/><polygon points="1084.1,427.2 1064.8,433.6 1093.6,435 1112.8,428.7" fill="#fa0006"/><polygon points="1208.9,419.3 1189.6,425.7 1218.4,427.5 1237.7,421.2" fill="#fe0001"/><polygon points="911.2,441.9 892,448.2 920.8,449.1 940,442.7" fill="#f4000d"/><polygon points="1036,432.3 1016.8,438.6 1045.6,439.9 1064.8,433.6" fill="#f90008"/><polygon points="1160.9,423.9 1141.6,430.3 1170.4,432 1189.6,425.7" fill="#fd0003"/><polygon points="988,437.4 968.8,443.8 997.5,444.9 1016.8,438.6" fill="#f7000a"/><polygon points="1112.8,428.7 1093.6,435 1122.4,436.6 1141.6,430.3" fill="#fb0004"/><polygon points="1237.7,421.2 1218.4,427.5 1247.2,429.6 1266.5,423.2" fill="#ff0000"/><polygon points="940,442.7 920.8,449.1 949.5,450.1 968.8,443.8" fill="#f6000b"/><polygon points="1064.8,433.6 1045.6,439.9 1074.3,441.3 1093.6,435" fill="#fa0006"/><polygon points="1189.6,425.7 1170.4,432 1199.2,433.9 1218.4,427.5" fill="#fe0001"/><polygon points="1016.8,438.6 997.5,444.9 1026.3,446.2 1045.6,439.9" fill="#f90008"/><polygon points="1141.6,430.3 1122.4,436.6 1151.1,438.3 1170.4,432" fill="#fd0003"/><polygon points="968.8,443.8 949.5,450.1 978.3,451.2 997.5,444.9" fill="#f7000a"/><polygon points="1093.6,435 1074.3,441.3 1103.1,442.9 1122.4,436.6" fill="#fb0004"/><polygon points="1218.4,427.5 1199.2,433.9 1228,435.9 1247.2,429.6" fill="#ff0000"/><polygon points="1045.6,439.9 1026.3,446.2 1055.1,447.7 1074.3,441.3" fill="#fa0006"/><polygon points="1170.4,432 1151.1,438.3 1179.9,440.2 1199.2,433.9" fill="#fe0001"/><polygon points="997.5,444.9 978.3,451.2 1007.1,452.5 1026.3,446.2" fill="#f90008"/><polygon points="1122.4,436.6 1103.1,442.9 1131.9,444.6 1151.1,438.3" fill="#fd0003"/><polygon points="1074.3,441.3 1055.1,447.7 1083.9,449.3 1103.1,442.9" fill="#fb0004"/><polygon points="1199.2,433.9 1179.9,440.2 1208.7,442.2 1228,435.9" fill="#ff0000"/><polygon points="1026.3,446.2 1007.1,452.5 1035.8,454 1055.1,447.7" fill="#fa0006"/><polygon points="1151.1,438.3 1131.9,444.6 1160.7,446.5 1179.9,440.2" fill="#fe0001"/><polygon points="1103.1,442.9 1083.9,449.3 1112.6,451 1131.9,444.6" fill="#fd0003"/><polygon points="1055.1,447.7 1035.8,454 1064.6,455.6 1083.9,449.3" fill="#fb0004"/><polygon points="1179.9,440.2 1160.7,446.5 1189.5,448.5 1208.7,442.2" fill="#ff0000"/><polygon points="1131.9,444.6 1112.6,451 1141.4,452.8 1160.7,446.5" fill="#fe0001"/><polygon points="1083.9,449.3 1064.6,455.6 1093.4,457.3 1112.6,451" fill="#fd0003"/><polygon points="1160.7,446.5 1141.4,452.8 1170.2,454.9 1189.5,448.5" fill="#ff0000"/><polygon points="1112.6,451 1093.4,457.3 1122.2,459.2 1141.4,452.8" fill="#fe0001"/><polygon points="1141.4,452.8 1122.2,459.2 1151,461.2 1170.2,454.9" fill="#ff0000"/><g clip-path="url(#c0)"><circle cx="1075.8" cy="223.3" r="12" fill="#c06010" stroke="#101000"/></g><g clip-path="url(#c1)"><circle cx="1113.1" cy="240.3" r="10.3" fill="#c85010" stroke="#101000"/></g><g clip-path="url(#c2)"><circle cx="978.8" cy="300" r="6.9" fill="#d84510" stroke="#101000"/></g><g clip-path="url(#c3)"><circle cx="1420.6" cy="202.8" r="12" fill="#e03a10" stroke="#101000"/></g><g clip-path="url(#c4)"><circle cx="1363.6" cy="211.9" r="11" fill="#d84010" stroke="#101000"/></g><g clip-path="url(#c5)"><circle cx="1401.9" cy="227.5" r="11.7" fill="#e03a10" stroke="#101000"/></g><g clip-path="url(#c6)"><circle cx="1362.8" cy="287" r="8" fill="#e04010" stroke="#101000"/></g><g clip-path="url(#c7)"><circle cx="1380.8" cy="262.8" r="8" fill="#e04010" stroke="#101000"/></g><g clip-path="url(#c8)"><circle cx="1381.6" cy="299.3" r="8.5" fill="#e03010" stroke="#101000"/></g><g clip-path="url(#c9)"><circle cx="1535.9" cy="198.3" r="12" fill="#e82a10" stroke="#101000"/></g><g clip-path="url(#c10)"><circle cx="1709.2" cy="216.5" r="8.5" fill="#e04010" stroke="#101000"/></g><g clip-path="url(#c11)"><circle cx="1554.6" cy="221" r="11.5" fill="#e04010" stroke="#101000"/></g><g clip-path="url(#c12)"><circle cx="1516.8" cy="235.2" r="11.5" fill="#e04010" stroke="#101000"/></g><g clip-path="url(#c13)"><circle cx="1669.6" cy="228.8" r="11.2" fill="#e04010" stroke="#101000"/></g><g clip-path="url(#c14)"><circle cx="1593.7" cy="250.8" r="11.5" fill="#e04010" stroke="#101000"/></g><g clip-path="url(#c15)"><circle cx="1746.3" cy="246.7" r="10.8" fill="#e04010" stroke="#101000"/></g><g clip-path="url(#c16)"><circle cx="1688.8" cy="244" r="7.5" fill="#e04010" stroke="#101000"/></g><g clip-path="url(#c17)"><circle cx="1228.4" cy="308.2" r="6.5" fill="#e04010" stroke="#101000"/></g><g clip-path="url(#c18)"><circle cx="1305" cy="322" r="7" fill="#e04010" stroke="#101000"/></g><g clip-path="url(#c19)"><circle cx="1401.1" cy="309.7" r="8" fill="#e04010" stroke="#101000"/></g><g clip-path="url(#c20)"><circle cx="1458.9" cy="317" r="7.5" fill="#e04010" stroke="#101000"/></g><circle cx="845" cy="294.7" r="8" fill="#d04a10" stroke="#101000"/><circle cx="863.7" cy="288.3" r="6.5" fill="#d04010" stroke="#101000"/><circle cx="1132.8" cy="241.7" r="9" fill="#f01000" stroke="#101000"/><circle cx="1170.8" cy="246.2" r="5.5" fill="#f01000" stroke="#101000"/><circle cx="959.7" cy="254.7" r="5" fill="#e03010" stroke="#101000"/><circle cx="1037" cy="255.8" r="6" fill="#e03810" stroke="#101000"/><circle cx="1037" cy="262.5" r="4.5" fill="#f01800" stroke="#101000"/><circle cx="1075" cy="257.5" r="7.5" fill="#e83010" stroke="#101000"/><circle cx="1075" cy="250.8" r="3.5" fill="#f01000" stroke="#101000"/><circle cx="1151.7" cy="265.8" r="7" fill="#f02000" stroke="#101000"/><circle cx="1151.7" cy="279.7" r="3.5" fill="#f02000" stroke="#101000"/><circle cx="901.7" cy="291.7" r="6.5" fill="#e03a10" stroke="#101000"/><circle cx="940.8" cy="288" r="4.5" fill="#e04010" stroke="#101000"/><circle cx="1209.7" cy="233.3" r="8" fill="#f01000" stroke="#101000"/><circle cx="1189.7" cy="242.5" r="10" fill="#f02000" stroke="#101000"/><circle cx="1266.7" cy="267.5" r="8" fill="#f02000" stroke="#101000"/><circle cx="1305.8" cy="265.8" r="9" fill="#f02000" stroke="#101000"/><circle cx="1440" cy="267.5" r="8" fill="#f01000" stroke="#101000"/><circle cx="1420.8" cy="279.2" r="11" fill="#e83010" stroke="#101000"/><circle cx="1343.3" cy="283.3" r="10" fill="#f01000" stroke="#101000"/><circle cx="1324.7" cy="286.7" r="9" fill="#e83010" stroke="#101000"/><circle cx="1420" cy="300.8" r="7.5" fill="#f01000" stroke="#101000"/><circle cx="1727.8" cy="219.9" r="11.5" fill="#f01000" stroke="#101000"/><circle cx="1477.5" cy="309" r="7.5" fill="#f01000" stroke="#101000"/><circle cx="1266.7" cy="296.7" r="2" fill="#e03010" stroke="#101000"/><circle cx="1190" cy="321.7" r="2" fill="#e03010" stroke="#101000"/><circle cx="1323.8" cy="304.7" r="2.5" fill="#e03010" stroke="#101000"/><circle cx="1323.8" cy="359.7" r="3" fill="#e03010" stroke="#101000"/><circle cx="1266.3" cy="352" r="1.5" fill="#e03010" stroke="#101000"/><circle cx="1401.2" cy="335" r="2.5" fill="#e03010" stroke="#101000"/><circle cx="1035.8" cy="318" r="2" fill="#e03010" stroke="#101000"/><circle cx="1016.7" cy="352" r="2.5" fill="#e03010" stroke="#101000"/><circle cx="1150.8" cy="335" r="2" fill="#e03010" stroke="#101000"/></g><g fill="#101010"><rect x="767.8" y="129.7" width="58" height="14.5" fill="#ffff10"/><text x="769.5" y="141.7" font-size="12" textLength="55" lengthAdjust="spacingAndGlyphs">Recall [%]</text><rect x="183.1" y="692.8" width="43.8" height="13.7" fill="#ffff10"/><text x="184.6" y="704.9" font-size="12" textLength="41.2" lengthAdjust="spacingAndGlyphs">Stability</text><rect x="1641.7" y="629.9" width="70.1" height="13.8" fill="#ffff10"/><text x="1643.8" y="641.9" font-size="12" textLength="67" lengthAdjust="spacingAndGlyphs">Retrievability</text></g><rect x="0" y="975" width="1917" height="1" fill="#d4d4d4"/><rect x="0" y="979" width="1917" height="1" fill="#dcdcdc"/><rect x="2.5" y="980.5" width="46" height="17" fill="#f0f0f0" stroke="#d9d9d9"/><text x="8" y="993.2" font-size="10" fill="#111" textLength="35" lengthAdjust="spacingAndGlyphs">Stability</text><rect x="48.5" y="980.5" width="78" height="17" fill="#f0f0f0" stroke="#d9d9d9"/><text x="55.5" y="993.2" font-size="10" fill="#111" textLength="64.5" lengthAdjust="spacingAndGlyphs">Approximation</text><rect x="126.5" y="980.5" width="36" height="17" fill="#f0f0f0" stroke="#d9d9d9"/><text x="133" y="993.2" font-size="10" fill="#111" textLength="25" lengthAdjust="spacingAndGlyphs">Recall</text><rect x="162.5" y="978.5" width="77" height="21" fill="#fff" stroke="#d9d9d9"/><text x="170" y="995.5" font-size="10" fill="#111" textLength="62" lengthAdjust="spacingAndGlyphs">Recall Approx</text><rect x="239.5" y="980.5" width="68" height="17" fill="#f0f0f0" stroke="#d9d9d9"/><text x="244.4" y="993.2" font-size="10" fill="#111" textLength="56.7" lengthAdjust="spacingAndGlyphs">First Interval</text><rect x="307.5" y="980.5" width="64" height="17" fill="#f0f0f0" stroke="#d9d9d9"/><text x="313.1" y="993.2" font-size="10" fill="#111" textLength="52.8" lengthAdjust="spacingAndGlyphs">Int. Approx</text><rect x="371.5" y="980.5" width="36" height="17" fill="#f0f0f0" stroke="#d9d9d9"/><text x="378.1" y="993.2" font-size="10" fill="#111" textLength="23.8" lengthAdjust="spacingAndGlyphs">Sleep</text><rect x="407.5" y="980.5" width="59" height="17" fill="#f0f0f0" stroke="#d9d9d9"/><text x="414.4" y="993.2" font-size="10" fill="#111" textLength="46.1" lengthAdjust="spacingAndGlyphs">Forgetting</text><rect x="466.5" y="980.5" width="52" height="17" fill="#f0f0f0" stroke="#d9d9d9"/><text x="473" y="993.2" font-size="10" fill="#111" textLength="42.2" lengthAdjust="spacingAndGlyphs">RF Matrix</text><rect x="19.5" y="1008.5" width="904" height="14" fill="#e7e9ea" stroke="#d6d6d6"/><path d="M104 1009h9v11l-4.5 4.5l-4.5-4.5z" fill="#0078d7"/><path d="M23.5 1028v3M26.5 1028v3M29.5 1028v3M33.5 1028v3M36.5 1028v3M39.5 1028v3M42.5 1028v3M45.5 1028v3M49.5 1028v3M52.5 1028v3M55.5 1028v3M58.5 1028v3M61.5 1028v3M65.5 1028v3M68.5 1028v3M71.5 1028v3M74.5 1028v3M77.5 1028v3M81.5 1028v3M84.5 1028v3M87.5 1028v3M90.5 1028v3M93.5 1028v3M97.5 1028v3M100.5 1028v3M103.5 1028v3M106.5 1028v3M109.5 1028v3M113.5 1028v3M116.5 1028v3M119.5 1028v3M122.5 1028v3M125.5 1028v3M129.5 1028v3M132.5 1028v3M135.5 1028v3M138.5 1028v3M141.5 1028v3M145.5 1028v3M148.5 1028v3M151.5 1028v3M154.5 1028v3M157.5 1028v3M161.5 1028v3M164.5 1028v3M167.5 1028v3M170.5 1028v3M173.5 1028v3M177.5 1028v3M180.5 1028v3M183.5 1028v3M186.5 1028v3M189.5 1028v3M193.5 1028v3M196.5 1028v3M199.5 1028v3M202.5 1028v3M205.5 1028v3M209.5 1028v3M212.5 1028v3M215.5 1028v3M218.5 1028v3M221.5 1028v3M225.5 1028v3M228.5 1028v3M231.5 1028v3M234.5 1028v3M237.5 1028v3M241.5 1028v3M244.5 1028v3M247.5 1028v3M250.5 1028v3M253.5 1028v3M257.5 1028v3M260.5 1028v3M263.5 1028v3M266.5 1028v3M269.5 1028v3M273.5 1028v3M276.5 1028v3M279.5 1028v3M282.5 1028v3M285.5 1028v3M289.5 1028v3M292.5 1028v3M295.5 1028v3M298.5 1028v3M301.5 1028v3M305.5 1028v3M308.5 1028v3M311.5 1028v3M314.5 1028v3M317.5 1028v3M321.5 1028v3M324.5 1028v3M327.5 1028v3M330.5 1028v3M333.5 1028v3M337.5 1028v3M340.5 1028v3M343.5 1028v3M346.5 1028v3M349.5 1028v3M353.5 1028v3M356.5 1028v3M359.5 1028v3M362.5 1028v3M365.5 1028v3M369.5 1028v3M372.5 1028v3M375.5 1028v3M378.5 1028v3M381.5 1028v3M385.5 1028v3M388.5 1028v3M391.5 1028v3M394.5 1028v3M397.5 1028v3M401.5 1028v3M404.5 1028v3M407.5 1028v3M410.5 1028v3M413.5 1028v3M417.5 1028v3M420.5 1028v3M423.5 1028v3M426.5 1028v3M429.5 1028v3M433.5 1028v3M436.5 1028v3M439.5 1028v3M442.5 1028v3M445.5 1028v3M449.5 1028v3M452.5 1028v3M455.5 1028v3M458.5 1028v3M461.5 1028v3M465.5 1028v3M468.5 1028v3M471.5 1028v3M474.5 1028v3M477.5 1028v3M481.5 1028v3M484.5 1028v3M487.5 1028v3M490.5 1028v3M493.5 1028v3M497.5 1028v3M500.5 1028v3M503.5 1028v3M506.5 1028v3M509.5 1028v3M513.5 1028v3M516.5 1028v3M519.5 1028v3M522.5 1028v3M525.5 1028v3M529.5 1028v3M532.5 1028v3M535.5 1028v3M538.5 1028v3M541.5 1028v3M545.5 1028v3M548.5 1028v3M551.5 1028v3M554.5 1028v3M557.5 1028v3M561.5 1028v3M564.5 1028v3M567.5 1028v3M570.5 1028v3M573.5 1028v3M577.5 1028v3M580.5 1028v3M583.5 1028v3M586.5 1028v3M589.5 1028v3M593.5 1028v3M596.5 1028v3M599.5 1028v3M602.5 1028v3M605.5 1028v3M609.5 1028v3M612.5 1028v3M615.5 1028v3M618.5 1028v3M621.5 1028v3M625.5 1028v3M628.5 1028v3M631.5 1028v3M634.5 1028v3M637.5 1028v3M641.5 1028v3M644.5 1028v3M647.5 1028v3M650.5 1028v3M653.5 1028v3M657.5 1028v3M660.5 1028v3M663.5 1028v3M666.5 1028v3M669.5 1028v3M673.5 1028v3M676.5 1028v3M679.5 1028v3M682.5 1028v3M685.5 1028v3M689.5 1028v3M692.5 1028v3M695.5 1028v3M698.5 1028v3M701.5 1028v3M705.5 1028v3M708.5 1028v3M711.5 1028v3M714.5 1028v3M717.5 1028v3M721.5 1028v3M724.5 1028v3M727.5 1028v3M730.5 1028v3M733.5 1028v3M737.5 1028v3M740.5 1028v3M743.5 1028v3M746.5 1028v3M749.5 1028v3M753.5 1028v3M756.5 1028v3M759.5 1028v3M762.5 1028v3M765.5 1028v3M769.5 1028v3M772.5 1028v3M775.5 1028v3M778.5 1028v3M781.5 1028v3M785.5 1028v3M788.5 1028v3M791.5 1028v3M794.5 1028v3M797.5 1028v3M801.5 1028v3M804.5 1028v3M807.5 1028v3M810.5 1028v3M813.5 1028v3M817.5 1028v3M820.5 1028v3M823.5 1028v3M826.5 1028v3M829.5 1028v3M833.5 1028v3M836.5 1028v3M839.5 1028v3M842.5 1028v3M845.5 1028v3M849.5 1028v3M852.5 1028v3M855.5 1028v3M858.5 1028v3M861.5 1028v3M865.5 1028v3M868.5 1028v3M871.5 1028v3M874.5 1028v3M877.5 1028v3M881.5 1028v3M884.5 1028v3M887.5 1028v3M890.5 1028v3M893.5 1028v3M897.5 1028v3M900.5 1028v3M903.5 1028v3M906.5 1028v3M909.5 1028v3M913.5 1028v3M916.5 1028v3M919.5 1028v3" stroke="#a4a4a4" stroke-width="1"/><rect x="19.5" y="1046.5" width="904" height="14" fill="#e7e9ea" stroke="#d6d6d6"/><path d="M94 1047h9v11l-4.5 4.5l-4.5-4.5z" fill="#0078d7"/><path d="M23.5 1066v3M26.5 1066v3M29.5 1066v3M33.5 1066v3M36.5 1066v3M39.5 1066v3M42.5 1066v3M45.5 1066v3M49.5 1066v3M52.5 1066v3M55.5 1066v3M58.5 1066v3M61.5 1066v3M65.5 1066v3M68.5 1066v3M71.5 1066v3M74.5 1066v3M77.5 1066v3M81.5 1066v3M84.5 1066v3M87.5 1066v3M90.5 1066v3M93.5 1066v3M97.5 1066v3M100.5 1066v3M103.5 1066v3M106.5 1066v3M109.5 1066v3M113.5 1066v3M116.5 1066v3M119.5 1066v3M122.5 1066v3M125.5 1066v3M129.5 1066v3M132.5 1066v3M135.5 1066v3M138.5 1066v3M141.5 1066v3M145.5 1066v3M148.5 1066v3M151.5 1066v3M154.5 1066v3M157.5 1066v3M161.5 1066v3M164.5 1066v3M167.5 1066v3M170.5 1066v3M173.5 1066v3M177.5 1066v3M180.5 1066v3M183.5 1066v3M186.5 1066v3M189.5 1066v3M193.5 1066v3M196.5 1066v3M199.5 1066v3M202.5 1066v3M205.5 1066v3M209.5 1066v3M212.5 1066v3M215.5 1066v3M218.5 1066v3M221.5 1066v3M225.5 1066v3M228.5 1066v3M231.5 1066v3M234.5 1066v3M237.5 1066v3M241.5 1066v3M244.5 1066v3M247.5 1066v3M250.5 1066v3M253.5 1066v3M257.5 1066v3M260.5 1066v3M263.5 1066v3M266.5 1066v3M269.5 1066v3M273.5 1066v3M276.5 1066v3M279.5 1066v3M282.5 1066v3M285.5 1066v3M289.5 1066v3M292.5 1066v3M295.5 1066v3M298.5 1066v3M301.5 1066v3M305.5 1066v3M308.5 1066v3M311.5 1066v3M314.5 1066v3M317.5 1066v3M321.5 1066v3M324.5 1066v3M327.5 1066v3M330.5 1066v3M333.5 1066v3M337.5 1066v3M340.5 1066v3M343.5 1066v3M346.5 1066v3M349.5 1066v3M353.5 1066v3M356.5 1066v3M359.5 1066v3M362.5 1066v3M365.5 1066v3M369.5 1066v3M372.5 1066v3M375.5 1066v3M378.5 1066v3M381.5 1066v3M385.5 1066v3M388.5 1066v3M391.5 1066v3M394.5 1066v3M397.5 1066v3M401.5 1066v3M404.5 1066v3M407.5 1066v3M410.5 1066v3M413.5 1066v3M417.5 1066v3M420.5 1066v3M423.5 1066v3M426.5 1066v3M429.5 1066v3M433.5 1066v3M436.5 1066v3M439.5 1066v3M442.5 1066v3M445.5 1066v3M449.5 1066v3M452.5 1066v3M455.5 1066v3M458.5 1066v3M461.5 1066v3M465.5 1066v3M468.5 1066v3M471.5 1066v3M474.5 1066v3M477.5 1066v3M481.5 1066v3M484.5 1066v3M487.5 1066v3M490.5 1066v3M493.5 1066v3M497.5 1066v3M500.5 1066v3M503.5 1066v3M506.5 1066v3M509.5 1066v3M513.5 1066v3M516.5 1066v3M519.5 1066v3M522.5 1066v3M525.5 1066v3M529.5 1066v3M532.5 1066v3M535.5 1066v3M538.5 1066v3M541.5 1066v3M545.5 1066v3M548.5 1066v3M551.5 1066v3M554.5 1066v3M557.5 1066v3M561.5 1066v3M564.5 1066v3M567.5 1066v3M570.5 1066v3M573.5 1066v3M577.5 1066v3M580.5 1066v3M583.5 1066v3M586.5 1066v3M589.5 1066v3M593.5 1066v3M596.5 1066v3M599.5 1066v3M602.5 1066v3M605.5 1066v3M609.5 1066v3M612.5 1066v3M615.5 1066v3M618.5 1066v3M621.5 1066v3M625.5 1066v3M628.5 1066v3M631.5 1066v3M634.5 1066v3M637.5 1066v3M641.5 1066v3M644.5 1066v3M647.5 1066v3M650.5 1066v3M653.5 1066v3M657.5 1066v3M660.5 1066v3M663.5 1066v3M666.5 1066v3M669.5 1066v3M673.5 1066v3M676.5 1066v3M679.5 1066v3M682.5 1066v3M685.5 1066v3M689.5 1066v3M692.5 1066v3M695.5 1066v3M698.5 1066v3M701.5 1066v3M705.5 1066v3M708.5 1066v3M711.5 1066v3M714.5 1066v3M717.5 1066v3M721.5 1066v3M724.5 1066v3M727.5 1066v3M730.5 1066v3M733.5 1066v3M737.5 1066v3M740.5 1066v3M743.5 1066v3M746.5 1066v3M749.5 1066v3M753.5 1066v3M756.5 1066v3M759.5 1066v3M762.5 1066v3M765.5 1066v3M769.5 1066v3M772.5 1066v3M775.5 1066v3M778.5 1066v3M781.5 1066v3M785.5 1066v3M788.5 1066v3M791.5 1066v3M794.5 1066v3M797.5 1066v3M801.5 1066v3M804.5 1066v3M807.5 1066v3M810.5 1066v3M813.5 1066v3M817.5 1066v3M820.5 1066v3M823.5 1066v3M826.5 1066v3M829.5 1066v3M833.5 1066v3M836.5 1066v3M839.5 1066v3M842.5 1066v3M845.5 1066v3M849.5 1066v3M852.5 1066v3M855.5 1066v3M858.5 1066v3M861.5 1066v3M865.5 1066v3M868.5 1066v3M871.5 1066v3M874.5 1066v3M877.5 1066v3M881.5 1066v3M884.5 1066v3M887.5 1066v3M890.5 1066v3M893.5 1066v3M897.5 1066v3M900.5 1066v3M903.5 1066v3M906.5 1066v3M909.5 1066v3M913.5 1066v3M916.5 1066v3M919.5 1066v3" stroke="#a4a4a4" stroke-width="1"/><rect x="19.5" y="1085.5" width="910" height="14" fill="#e7e9ea" stroke="#d6d6d6"/><path d="M19 1086h9v11l-4.5 4.5l-4.5-4.5z" fill="#0078d7"/><path d="M23.5 1104v3M26.5 1104v3M29.5 1104v3M33.5 1104v3M36.5 1104v3M39.5 1104v3M42.5 1104v3M45.5 1104v3M49.5 1104v3M52.5 1104v3M55.5 1104v3M58.5 1104v3M61.5 1104v3M65.5 1104v3M68.5 1104v3M71.5 1104v3M74.5 1104v3M77.5 1104v3M81.5 1104v3M84.5 1104v3M87.5 1104v3M90.5 1104v3M93.5 1104v3M97.5 1104v3M100.5 1104v3M103.5 1104v3M106.5 1104v3M109.5 1104v3M113.5 1104v3M116.5 1104v3M119.5 1104v3M122.5 1104v3M125.5 1104v3M129.5 1104v3M132.5 1104v3M135.5 1104v3M138.5 1104v3M141.5 1104v3M145.5 1104v3M148.5 1104v3M151.5 1104v3M154.5 1104v3M157.5 1104v3M161.5 1104v3M164.5 1104v3M167.5 1104v3M170.5 1104v3M173.5 1104v3M177.5 1104v3M180.5 1104v3M183.5 1104v3M186.5 1104v3M189.5 1104v3M193.5 1104v3M196.5 1104v3M199.5 1104v3M202.5 1104v3M205.5 1104v3M209.5 1104v3M212.5 1104v3M215.5 1104v3M218.5 1104v3M221.5 1104v3M225.5 1104v3M228.5 1104v3M231.5 1104v3M234.5 1104v3M237.5 1104v3M241.5 1104v3M244.5 1104v3M247.5 1104v3M250.5 1104v3M253.5 1104v3M256.5 1104v3M260.5 1104v3M263.5 1104v3M266.5 1104v3M269.5 1104v3M272.5 1104v3M276.5 1104v3M279.5 1104v3M282.5 1104v3M285.5 1104v3M288.5 1104v3M292.5 1104v3M295.5 1104v3M298.5 1104v3M301.5 1104v3M304.5 1104v3M308.5 1104v3M311.5 1104v3M314.5 1104v3M317.5 1104v3M320.5 1104v3M324.5 1104v3M327.5 1104v3M330.5 1104v3M333.5 1104v3M336.5 1104v3M340.5 1104v3M343.5 1104v3M346.5 1104v3M349.5 1104v3M352.5 1104v3M356.5 1104v3M359.5 1104v3M362.5 1104v3M365.5 1104v3M368.5 1104v3M372.5 1104v3M375.5 1104v3M378.5 1104v3M381.5 1104v3M384.5 1104v3M388.5 1104v3M391.5 1104v3M394.5 1104v3M397.5 1104v3M400.5 1104v3M404.5 1104v3M407.5 1104v3M410.5 1104v3M413.5 1104v3M416.5 1104v3M420.5 1104v3M423.5 1104v3M426.5 1104v3M429.5 1104v3M432.5 1104v3M436.5 1104v3M439.5 1104v3M442.5 1104v3M445.5 1104v3M448.5 1104v3M452.5 1104v3M455.5 1104v3M458.5 1104v3M461.5 1104v3M464.5 1104v3M468.5 1104v3M471.5 1104v3M474.5 1104v3M477.5 1104v3M480.5 1104v3M484.5 1104v3M487.5 1104v3M490.5 1104v3M493.5 1104v3M496.5 1104v3M500.5 1104v3M503.5 1104v3M506.5 1104v3M509.5 1104v3M512.5 1104v3M516.5 1104v3M519.5 1104v3M522.5 1104v3M525.5 1104v3M528.5 1104v3M532.5 1104v3M535.5 1104v3M538.5 1104v3M541.5 1104v3M544.5 1104v3M548.5 1104v3M551.5 1104v3M554.5 1104v3M557.5 1104v3M560.5 1104v3M564.5 1104v3M567.5 1104v3M570.5 1104v3M573.5 1104v3M576.5 1104v3M580.5 1104v3M583.5 1104v3M586.5 1104v3M589.5 1104v3M592.5 1104v3M596.5 1104v3M599.5 1104v3M602.5 1104v3M605.5 1104v3M608.5 1104v3M612.5 1104v3M615.5 1104v3M618.5 1104v3M621.5 1104v3M624.5 1104v3M628.5 1104v3M631.5 1104v3M634.5 1104v3M637.5 1104v3M640.5 1104v3M644.5 1104v3M647.5 1104v3M650.5 1104v3M653.5 1104v3M656.5 1104v3M660.5 1104v3M663.5 1104v3M666.5 1104v3M669.5 1104v3M672.5 1104v3M676.5 1104v3M679.5 1104v3M682.5 1104v3M685.5 1104v3M688.5 1104v3M692.5 1104v3M695.5 1104v3M698.5 1104v3M701.5 1104v3M704.5 1104v3M707.5 1104v3M711.5 1104v3M714.5 1104v3M717.5 1104v3M720.5 1104v3M723.5 1104v3M727.5 1104v3M730.5 1104v3M733.5 1104v3M736.5 1104v3M739.5 1104v3M743.5 1104v3M746.5 1104v3M749.5 1104v3M752.5 1104v3M755.5 1104v3M759.5 1104v3M762.5 1104v3M765.5 1104v3M768.5 1104v3M771.5 1104v3M775.5 1104v3M778.5 1104v3M781.5 1104v3M784.5 1104v3M787.5 1104v3M791.5 1104v3M794.5 1104v3M797.5 1104v3M800.5 1104v3M803.5 1104v3M807.5 1104v3M810.5 1104v3M813.5 1104v3M816.5 1104v3M819.5 1104v3M823.5 1104v3M826.5 1104v3M829.5 1104v3M832.5 1104v3M835.5 1104v3M839.5 1104v3M842.5 1104v3M845.5 1104v3M848.5 1104v3M851.5 1104v3M855.5 1104v3M858.5 1104v3M861.5 1104v3M864.5 1104v3M867.5 1104v3M871.5 1104v3M874.5 1104v3M877.5 1104v3M880.5 1104v3M883.5 1104v3M887.5 1104v3M890.5 1104v3M893.5 1104v3M896.5 1104v3M899.5 1104v3M903.5 1104v3M906.5 1104v3M909.5 1104v3M912.5 1104v3M915.5 1104v3M919.5 1104v3M922.5 1104v3M925.5 1104v3" stroke="#a4a4a4" stroke-width="1"/><rect x="12.5" y="1081.5" width="924" height="33" fill="none" stroke="#222" stroke-dasharray="1 1"/><rect x="19.5" y="1127.5" width="608" height="14" fill="#e7e9ea" stroke="#d6d6d6"/><path d="M398 1128h9v11l-4.5 4.5l-4.5-4.5z" fill="#0078d7"/><path d="M23.5 1147v4M55.5 1147v4M86.5 1147v4M118.5 1147v4M149.5 1147v4M181.5 1147v4M212.5 1147v4M244.5 1147v4M275.5 1147v4M307.5 1147v4M339.5 1147v4M370.5 1147v4M402.5 1147v4M433.5 1147v4M465.5 1147v4M496.5 1147v4M528.5 1147v4M559.5 1147v4M591.5 1147v4M623.5 1147v4" stroke="#a4a4a4" stroke-width="1"/><rect x="19.5" y="1165.5" width="608" height="14" fill="#e7e9ea" stroke="#d6d6d6"/><path d="M19 1166h9v11l-4.5 4.5l-4.5-4.5z" fill="#0078d7"/><path d="M23.5 1185v3M29.5 1185v3M35.5 1185v3M41.5 1185v3M47.5 1185v3M53.5 1185v3M59.5 1185v3M65.5 1185v3M71.5 1185v3M77.5 1185v3M83.5 1185v3M89.5 1185v3M95.5 1185v3M101.5 1185v3M107.5 1185v3M113.5 1185v3M119.5 1185v3M125.5 1185v3M131.5 1185v3M137.5 1185v3M143.5 1185v3M149.5 1185v3M155.5 1185v3M161.5 1185v3M167.5 1185v3M173.5 1185v3M179.5 1185v3M185.5 1185v3M191.5 1185v3M197.5 1185v3M203.5 1185v3M209.5 1185v3M215.5 1185v3M221.5 1185v3M227.5 1185v3M233.5 1185v3M239.5 1185v3M245.5 1185v3M251.5 1185v3M257.5 1185v3M263.5 1185v3M269.5 1185v3M275.5 1185v3M281.5 1185v3M287.5 1185v3M293.5 1185v3M299.5 1185v3M305.5 1185v3M311.5 1185v3M317.5 1185v3M323.5 1185v3M329.5 1185v3M335.5 1185v3M341.5 1185v3M347.5 1185v3M353.5 1185v3M359.5 1185v3M365.5 1185v3M371.5 1185v3M377.5 1185v3M383.5 1185v3M389.5 1185v3M395.5 1185v3M401.5 1185v3M407.5 1185v3M413.5 1185v3M419.5 1185v3M425.5 1185v3M431.5 1185v3M437.5 1185v3M443.5 1185v3M449.5 1185v3M455.5 1185v3M461.5 1185v3M467.5 1185v3M473.5 1185v3M479.5 1185v3M485.5 1185v3M491.5 1185v3M497.5 1185v3M503.5 1185v3M509.5 1185v3M515.5 1185v3M521.5 1185v3M527.5 1185v3M533.5 1185v3M539.5 1185v3M545.5 1185v3M551.5 1185v3M557.5 1185v3M563.5 1185v3M569.5 1185v3M575.5 1185v3M581.5 1185v3M587.5 1185v3M593.5 1185v3M599.5 1185v3M605.5 1185v3M611.5 1185v3M617.5 1185v3M623.5 1185v3" stroke="#a4a4a4" stroke-width="1"/><text x="640.2" y="1137.8" font-size="10" fill="#111" textLength="34.5" lengthAdjust="spacingAndGlyphs">Diff: 0.6</text><text x="640" y="1173.8" font-size="10" fill="#111" textLength="56" lengthAdjust="spacingAndGlyphs">Cases: 13642</text><rect x="756.5" y="1128.5" width="65" height="16" fill="#e1e1e1" stroke="#adadad"/><text x="768" y="1140.2" font-size="10" fill="#111" textLength="41" lengthAdjust="spacingAndGlyphs">Compute</text><rect x="828.5" y="1128.5" width="65" height="16" fill="#e1e1e1" stroke="#adadad"/><text x="849.1" y="1140.2" font-size="10" fill="#111" textLength="22.5" lengthAdjust="spacingAndGlyphs">Reset</text><rect x="900.5" y="1128.5" width="65" height="16" fill="#e1e1e1" stroke="#adadad"/><text x="908.2" y="1140.2" font-size="10" fill="#111" textLength="48.4" lengthAdjust="spacingAndGlyphs">Smoothing</text><rect x="756.5" y="1151.5" width="65" height="16" fill="#e1e1e1" stroke="#adadad"/><text x="773.4" y="1163.2" font-size="10" fill="#111" textLength="29.4" lengthAdjust="spacingAndGlyphs">Subset</text><rect x="828.5" y="1151.5" width="65" height="16" fill="#e1e1e1" stroke="#adadad"/><text x="835.3" y="1163.2" font-size="10" fill="#111" textLength="50.6" lengthAdjust="spacingAndGlyphs">Reset Cases</text><rect x="756.5" y="1174.5" width="65" height="16" fill="#e1e1e1" stroke="#adadad"/><text x="773.4" y="1186.2" font-size="10" fill="#111" textLength="29.4" lengthAdjust="spacingAndGlyphs">Cancel</text><rect x="828.5" y="1174.5" width="65" height="16" fill="#e1e1e1" stroke="#adadad"/><text x="845.4" y="1186.2" font-size="10" fill="#111" textLength="29.6" lengthAdjust="spacingAndGlyphs">Export</text><rect x="906.5" y="1156.5" width="12" height="12" fill="#fff" stroke="#333"/><text x="921.5" y="1165.9" font-size="10" fill="#111" textLength="37.5" lengthAdjust="spacingAndGlyphs">Average</text><text x="979.5" y="1014.8" font-size="10" fill="#111" textLength="96.8" lengthAdjust="spacingAndGlyphs">Deviation=14.5519937</text><text x="979.5" y="1034.8" font-size="10" fill="#111" textLength="72.8" lengthAdjust="spacingAndGlyphs">Best=14.5519937</text><text x="979.5" y="1054.8" font-size="10" fill="#111" textLength="100.5" lengthAdjust="spacingAndGlyphs">A=0.304761 (0.304761)</text><text x="979.5" y="1074.8" font-size="10" fill="#111" textLength="117.3" lengthAdjust="spacingAndGlyphs">B=-0.3056601 (-0.3056601)</text><text x="979.5" y="1094.8" font-size="10" fill="#111" textLength="110.2" lengthAdjust="spacingAndGlyphs">C=1.5119803 (1.5119803)</text><text x="979.5" y="1114.8" font-size="10" fill="#111" textLength="110.2" lengthAdjust="spacingAndGlyphs">D=0.9724747 (0.9724747)</text><text x="979.5" y="1134.8" font-size="10" fill="#111" textLength="51.3" lengthAdjust="spacingAndGlyphs">Attempt=15</text><text x="979.5" y="1154.8" font-size="10" fill="#111" textLength="53.2" lengthAdjust="spacingAndGlyphs">Metric=0 pp</text><rect x="0" y="1198" width="1918" height="2" fill="#8a8a8a"/><rect x="0" y="0" width="1920" height="23" fill="#009abd"/><circle cx="10.2" cy="7.4" r="5" fill="#48b8c8" stroke="#0a0a40" stroke-width="1.2"/><path d="M7 4.5h2.5v2.5h-2.5z" fill="#30e0f0"/><path d="M10.5 7.5l3 -2v4l-2 3h-3z" fill="#8a40c0"/><path d="M6 4h1.5v1.5h-1.5z" fill="#9040d0"/><path d="M12.5 5l1.5 1v2h-1.5z" fill="#90d080"/><path d="M2.8 10.8L8.6 16.6" stroke="#000" stroke-width="3.2"/><path d="M3.6 11.6L8.2 16.2" stroke="#e8e070" stroke-width="1.4"/><path d="M10.2 14.2L11.5 13h3.2l1.3 1.2v1.8l-1.3 1.2h-3.2l-1.3-1.2z" fill="#fff" stroke="#000" stroke-width="0.9"/><rect x="3.2" y="17.6" width="13.5" height="1.3" fill="#000a20"/><text x="23.8" y="15.8" font-size="12" fill="#fff" textLength="123" lengthAdjust="spacingAndGlyphs">Approximation of recall</text><rect x="1799" y="10" width="11" height="1" fill="#fff"/><path d="M1844.5 6.5h8v8h-8z M1846.5 6.5v-2h8v8h-2" fill="none" stroke="#fff"/><path d="M1889.5 4.5L1900.5 15.5M1900.5 4.5L1889.5 15.5" stroke="#fff" stroke-width="1.1"/><rect x="1918" y="0" width="2" height="1200" fill="#1d4f5e"/></svg></body></html>
